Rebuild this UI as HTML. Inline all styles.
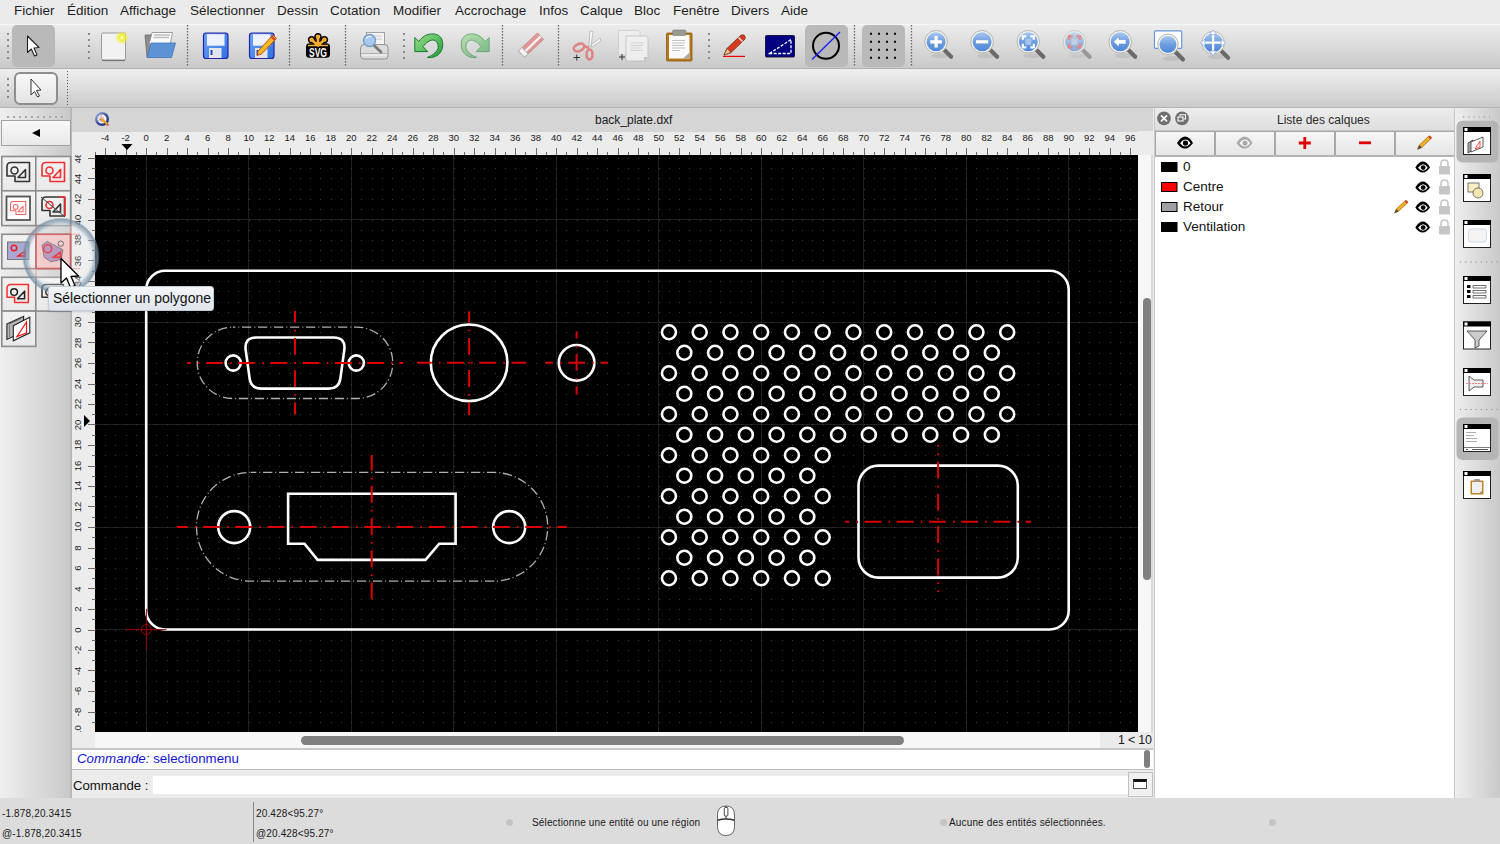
<!DOCTYPE html><html><head><meta charset="utf-8"><style>
*{margin:0;padding:0;box-sizing:border-box}
html,body{width:1500px;height:844px;overflow:hidden;background:#ececec;font-family:"Liberation Sans",sans-serif;color:#1a1a1a}
.a{position:absolute}
.menu span{position:absolute;top:3px;font-size:13.5px;color:#1e1e1e;white-space:nowrap}
.rn{position:absolute;font-size:9.5px;color:#222;white-space:nowrap;transform:translateX(-50%)}
.rv{position:absolute;font-size:9.5px;color:#222;white-space:nowrap;transform:translate(-50%,-50%) rotate(-90deg)}
.sep{position:absolute;width:2px;border-left:2px dotted #8a8a8a}
.tb{position:absolute;border-radius:5px;background:#b9b9b9}
.lb{position:absolute;background:linear-gradient(#f6f6f6,#e6e6e6);border:2px solid #8c8c8c}
.st{position:absolute;font-size:10px;letter-spacing:0.15px;color:#1a1a1a;white-space:nowrap}
</style></head><body>
<div class="a" style="left:0;top:0;width:1500px;height:24px;background:#ebebeb"></div><div class="menu"><span style="left:14px">Fichier</span><span style="left:67px">Édition</span><span style="left:120px">Affichage</span><span style="left:190px">Sélectionner</span><span style="left:277px">Dessin</span><span style="left:330px">Cotation</span><span style="left:393px">Modifier</span><span style="left:455px">Accrochage</span><span style="left:539px">Infos</span><span style="left:580px">Calque</span><span style="left:634px">Bloc</span><span style="left:673px">Fenêtre</span><span style="left:731px">Divers</span><span style="left:781px">Aide</span></div><div class="a" style="left:0;top:24px;width:1500px;height:45px;background:linear-gradient(#ececec,#c9c9c9);border-top:1px solid #f6f6f6;border-bottom:1px solid #b2b2b2"></div><div class="a" style="left:0;top:69px;width:1500px;height:39px;background:linear-gradient(#efefef,#cacaca);border-bottom:1px solid #b2b2b2"></div><div class="tb" style="left:12px;top:25px;width:43px;height:42px"></div><div class="a" style="left:14px;top:72px;width:44px;height:33px;border:2px solid #8e8e8e;border-radius:6px;background:linear-gradient(#f8f8f8,#e4e4e4)"></div><div class="tb" style="left:805px;top:25px;width:43px;height:42px"></div><div class="tb" style="left:862px;top:25px;width:43px;height:42px"></div><svg class="a" style="left:0;top:0" width="1000" height="108"><path d="M187.5 25V66M289.5 25V66M345.5 25V66M502.5 25V66M558.5 25V66M854.5 25V66M911.5 25V66" stroke="#666" stroke-width="1.3" stroke-dasharray="1.4 1.6"/><path d="M67.5 71V106" stroke="#555" stroke-width="1" stroke-dasharray="1 2"/><path d="M8 33V60M89 33V60M404 33V60M709 33V60M8 78V100" stroke="#8a8a8a" stroke-width="2" stroke-dasharray="2 4"/></svg><svg class="a" style="left:0;top:0" width="1500" height="108"><defs><linearGradient id="gblue" x1="0" y1="0" x2="0" y2="1"><stop offset="0" stop-color="#a8c8f0"/><stop offset="0.5" stop-color="#6f9ee0"/><stop offset="1" stop-color="#4f86d8"/></linearGradient><radialGradient id="gglow"><stop offset="0" stop-color="#fff"/><stop offset="0.35" stop-color="#f3ee30"/><stop offset="1" stop-color="#f3ee30" stop-opacity="0"/></radialGradient><linearGradient id="gflop" x1="0" y1="0" x2="1" y2="1"><stop offset="0" stop-color="#6ea6f8"/><stop offset="1" stop-color="#2f6fe0"/></linearGradient><linearGradient id="ggreen" x1="0" y1="0" x2="1" y2="1"><stop offset="0" stop-color="#9ee08a"/><stop offset="1" stop-color="#1f9a3a"/></linearGradient><linearGradient id="ggreen2" x1="1" y1="0" x2="0" y2="1"><stop offset="0" stop-color="#9ee08a"/><stop offset="1" stop-color="#1f9a3a"/></linearGradient></defs><path d="M27.5 36V52.5L31.3 49L34.5 56L37 55L34 48L39 47.5Z" fill="#fff" stroke="#222" stroke-width="1.1" stroke-linejoin="round"/><path d="M31 79V95L34.5 91.5L37.5 97L39.5 96L36.5 90.5L41 90Z" fill="#fff" stroke="#333" stroke-width="1" stroke-linejoin="round"/><rect x="101.5" y="33" width="24" height="27" rx="1.5" fill="#f2f2f2" stroke="#9a9a9a" stroke-width="1"/><path d="M102 60.5H125" stroke="#777" stroke-width="1.2"/><circle cx="122" cy="37.7" r="7" fill="url(#gglow)"/><path d="M145 35H152L151 57H147Z" fill="#8c8c8c" stroke="#6a6a6a" stroke-width="0.8"/><path d="M152 32.5H172.5L170 45H149Z" fill="#fafafa" stroke="#8a8a8a" stroke-width="0.8"/><path d="M154 35H170M153.5 37.5H169" stroke="#bdbdbd" stroke-width="1.5"/><path d="M151 43H175.5L171.5 57.5H147Z" fill="#5b93d6" stroke="#4273b8" stroke-width="0.8"/><rect x="203.5" y="33" width="24.5" height="25.5" rx="2.5" fill="url(#gflop)" stroke="#2323a8" stroke-width="1.2"/><rect x="207.0" y="34.2" width="17.5" height="11.5" fill="#eef2ff"/><rect x="209.0" y="48" width="12.5" height="10" fill="#e4e4ec"/><rect x="210.5" y="50" width="2" height="5" fill="#1a4fd0"/><rect x="249.5" y="33" width="24.5" height="25.5" rx="2.5" fill="url(#gflop)" stroke="#2323a8" stroke-width="1.2"/><rect x="253.0" y="34.2" width="17.5" height="11.5" fill="#eef2ff"/><rect x="255.0" y="48" width="12.5" height="10" fill="#e4e4ec"/><rect x="256.5" y="50" width="2" height="5" fill="#1a4fd0"/><path d="M258 51L273 35L276.5 38.5L261.5 54L257 55.5Z" fill="#f5b820" stroke="#b04010" stroke-width="0.9"/><path d="M271.5 36.5L275 40" stroke="#e04030" stroke-width="2.2"/><g fill="#000" stroke="#000"><rect x="306" y="43.2" width="24" height="14.6" rx="3.5" stroke="none"/><path d="M318 45V36.7M318 45L311.6 39.7M318 45L324.4 39.7" stroke-width="4.5" stroke-linecap="round"/><circle cx="318" cy="36.7" r="3.3"/><circle cx="311.6" cy="39.7" r="3.3"/><circle cx="324.4" cy="39.7" r="3.3"/></g><g stroke="#f5ac30" fill="#f5ac30"><path d="M318 45.5V36.7M318 45.5L311.6 39.7M318 45.5L324.4 39.7" stroke-width="2.6" stroke-linecap="round"/><circle cx="318" cy="36.7" r="2.3" stroke="none"/><circle cx="311.6" cy="39.7" r="2.3" stroke="none"/><circle cx="324.4" cy="39.7" r="2.3" stroke="none"/><path d="M308 45.5H328" stroke-width="1.5"/><path d="M314 45.5Q318 40 322 45.5Z" stroke="none"/></g><text x="318" y="57" font-family="Liberation Sans" font-weight="bold" font-size="12" fill="#fff" text-anchor="middle" textLength="18" lengthAdjust="spacingAndGlyphs">SVG</text><rect x="366.5" y="32.5" width="18" height="15" fill="#f4f4f4" stroke="#9a9a9a" stroke-width="0.9"/><path d="M369 36H382M369 39H382" stroke="#c8c8c8" stroke-width="1"/><path d="M360.5 48Q361 44.5 364 44.5H385Q388 44.5 388 48V56Q388 59 385 59H364Q360.5 59 360.5 56Z" fill="#dcdcdc" stroke="#8a8a8a" stroke-width="0.9"/><path d="M361 53.5H387.5" stroke="#b0b0b0" stroke-width="1"/><path d="M362 55H387" stroke="#f4f4f4" stroke-width="1.2"/><path d="M373.5 45L381 52" stroke="#7a7a7a" stroke-width="2.8" stroke-linecap="round"/><circle cx="369.5" cy="40.5" r="6" fill="#a8c8ee" stroke="#7a9cc8" stroke-width="1.4"/><path d="M366 38.5Q368 36 371.5 36.5" stroke="#fff" stroke-width="1.2" fill="none" opacity="0.8"/><path d="M414.8 37.5L414.8 51.6L427.7 51.6L422.9 46.5C426 43 429.5 40.2 432.6 40.1C436 40 438.3 43 438.2 47.4C438 51 433 55.5 427.3 57.4C433 58.5 438.5 55.5 440.6 52.2C443.5 48 443.5 41 440.6 37.3C438 34 433 33.2 428.1 34.5C424 35.5 421 38.5 418.7 41.5Z" fill="url(#ggreen)" stroke="#137a2e" stroke-width="1" stroke-linejoin="round"/><g opacity="0.55" transform="translate(904 0) scale(-1 1)"><path d="M414.8 37.5L414.8 51.6L427.7 51.6L422.9 46.5C426 43 429.5 40.2 432.6 40.1C436 40 438.3 43 438.2 47.4C438 51 433 55.5 427.3 57.4C433 58.5 438.5 55.5 440.6 52.2C443.5 48 443.5 41 440.6 37.3C438 34 433 33.2 428.1 34.5C424 35.5 421 38.5 418.7 41.5Z" fill="url(#ggreen2)" stroke="#137a2e" stroke-width="1" stroke-linejoin="round"/></g><g opacity="0.7"><ellipse cx="532" cy="57" rx="12" ry="1.6" fill="#d0d0d0"/><path d="M518.5 51L537.5 33L543.5 39.5L524.5 57Z" fill="#e47878" stroke="#b85a5a" stroke-width="0.8"/><path d="M522 54.5L540.5 36.5" stroke="#fff" stroke-width="2.4"/><path d="M518.5 51L522 47.5L528 54L524.5 57Z" fill="#fff" stroke="#999" stroke-width="0.8"/></g><g opacity="0.75"><path d="M590 31L593 31.5L591 47L589 46Z" fill="#fff" stroke="#999" stroke-width="0.7"/><path d="M591 45L600 38L601 41L592 47Z" fill="#fff" stroke="#999" stroke-width="0.7"/><ellipse cx="579" cy="47.5" rx="5.5" ry="3.5" transform="rotate(-25 579 47.5)" fill="none" stroke="#e06868" stroke-width="2.6"/><ellipse cx="589.5" cy="54.5" rx="3" ry="5" fill="none" stroke="#e06868" stroke-width="2.6"/><path d="M584 46L589 48" stroke="#e06868" stroke-width="2.5"/></g><path d="M573.5 57.5H580M576.75 54.5V60.5" stroke="#333" stroke-width="1"/><g opacity="0.8"><path d="M618.5 30.5H638.5L640 32V55H618.5Z" fill="#f0f0f0" stroke="#c8c8c8" stroke-width="0.8"/><path d="M626 36H646L648 38V58.5L645 61H626Z" fill="#f4f4f4" stroke="#bdbdbd" stroke-width="0.9"/><path d="M630.5 43H644M630.5 45.5H643M630.5 48H642M630.5 50.5H643" stroke="#d0d0d0" stroke-width="1"/><path d="M644 61L648 57H644Z" fill="#bbb"/></g><path d="M619 57H625M622 54V60" stroke="#333" stroke-width="1"/><rect x="666.5" y="33" width="25.5" height="28" rx="1" fill="#b4781c" stroke="#8a5a10" stroke-width="0.8"/><rect x="669" y="35" width="20.5" height="23.5" fill="#fafafa"/><path d="M672 40.5H685M672 43H685M672 45.5H684M672 48H685M672 50.5H680" stroke="#c4c4c4" stroke-width="1"/><path d="M683 58.5L689.5 52.5V58.5Z" fill="#aaa"/><rect x="672.5" y="30" width="13.5" height="5.5" rx="1.5" fill="#9a9a92" stroke="#777" stroke-width="0.6"/><path d="M724 55L727 48.5L740.5 35.5Q743 34 744.5 35.5Q746 37.5 744.5 39.5L731 52.5Z" fill="#d83a20" stroke="#7a3010" stroke-width="0.9"/><path d="M724 55L727 48.5L731 52.5Z" fill="#e8c8a0" stroke="#7a3010" stroke-width="0.7"/><path d="M738.5 37.5L742.5 41.5" stroke="#ddd" stroke-width="1.6"/><path d="M723 56.4H745" stroke="#e00" stroke-width="1.2"/><rect x="765.5" y="35.5" width="29" height="21.5" rx="1" fill="#000080" stroke="#1a1a40" stroke-width="1"/><path d="M769.5 53.5L791 39.5V53.5Z" fill="none" stroke="#fff" stroke-width="1.3" stroke-dasharray="3 1.5"/><circle cx="826" cy="45.8" r="13" fill="none" stroke="#000" stroke-width="2"/><path d="M812 59.5L840 32" stroke="#1a1aff" stroke-width="1.3"/><path d="M870 32.8h2v2h-2zM870 40.8h2v2h-2zM870 48.8h2v2h-2zM870 56.8h2v2h-2zM878 32.8h2v2h-2zM878 40.8h2v2h-2zM878 48.8h2v2h-2zM878 56.8h2v2h-2zM886 32.8h2v2h-2zM886 40.8h2v2h-2zM886 48.8h2v2h-2zM886 56.8h2v2h-2zM894 32.8h2v2h-2zM894 40.8h2v2h-2zM894 48.8h2v2h-2zM894 56.8h2v2h-2z" fill="#000"/><g><ellipse cx="940.1" cy="55.8" rx="9" ry="2.5" fill="#000" opacity="0.08"/><path d="M943.6 49.3L951.1 56.8" stroke="#6a6a6a" stroke-width="4.2" stroke-linecap="round"/><circle cx="936.1" cy="41.8" r="11.3" fill="#f4f4f0" stroke="#b5b5ad" stroke-width="1"/><circle cx="936.1" cy="41.8" r="9.5" fill="url(#gblue)"/><path d="M936.1 36V47.6M930.3 41.8H941.9" stroke="#fff" stroke-width="3.2"/></g><g><ellipse cx="986.1" cy="55.8" rx="9" ry="2.5" fill="#000" opacity="0.08"/><path d="M989.6 49.3L997.1 56.8" stroke="#6a6a6a" stroke-width="4.2" stroke-linecap="round"/><circle cx="982.1" cy="41.8" r="11.3" fill="#f4f4f0" stroke="#b5b5ad" stroke-width="1"/><circle cx="982.1" cy="41.8" r="9.5" fill="url(#gblue)"/><path d="M976 41.8H988.2" stroke="#fff" stroke-width="3.2"/></g><g><ellipse cx="1032.3" cy="55.8" rx="9" ry="2.5" fill="#000" opacity="0.08"/><path d="M1035.8 49.3L1043.3 56.8" stroke="#6a6a6a" stroke-width="4.2" stroke-linecap="round"/><circle cx="1028.3" cy="41.8" r="11.3" fill="#f4f4f0" stroke="#b5b5ad" stroke-width="1"/><circle cx="1028.3" cy="41.8" r="9.5" fill="url(#gblue)"/><path d="M1022.8 39.8V36.3H1026.3M1030.3 36.3H1033.8V39.8M1033.8 43.8V47.3H1030.3M1026.3 47.3H1022.8V43.8" fill="none" stroke="#fff" stroke-width="2.2"/><rect x="1025.3" y="38.8" width="6" height="6" fill="#a8c4ea"/></g><g opacity="0.55"><ellipse cx="1078.5" cy="55.8" rx="9" ry="2.5" fill="#000" opacity="0.08"/><path d="M1082.0 49.3L1089.5 56.8" stroke="#6a6a6a" stroke-width="4.2" stroke-linecap="round"/><circle cx="1074.5" cy="41.8" r="11.3" fill="#f4f4f0" stroke="#b5b5ad" stroke-width="1"/><circle cx="1074.5" cy="41.8" r="9.5" fill="url(#gblue)"/><path d="M1069.0 39.8V36.3H1072.5M1076.5 36.3H1080.0V39.8M1080.0 43.8V47.3H1076.5M1072.5 47.3H1069.0V43.8" fill="none" stroke="#e84040" stroke-width="2.2"/><rect x="1071.5" y="38.8" width="6" height="6" fill="#a8c4ea"/></g><g><ellipse cx="1124.2" cy="55.8" rx="9" ry="2.5" fill="#000" opacity="0.08"/><path d="M1127.7 49.3L1135.2 56.8" stroke="#6a6a6a" stroke-width="4.2" stroke-linecap="round"/><circle cx="1120.2" cy="41.8" r="11.3" fill="#f4f4f0" stroke="#b5b5ad" stroke-width="1"/><circle cx="1120.2" cy="41.8" r="9.5" fill="url(#gblue)"/><path d="M1113.5 41.8L1119 36.5V39.5H1126V44H1119V47Z" fill="#fff" stroke="#5a86c8" stroke-width="0.5"/></g><rect x="1154.5" y="30.8" width="27.2" height="17.5" rx="1" fill="#fff" stroke="#6a96d8" stroke-width="1.2"/><g><ellipse cx="1172" cy="58.4" rx="9" ry="2.5" fill="#000" opacity="0.08"/><path d="M1175.5 51.9L1183 59.4" stroke="#6a6a6a" stroke-width="4.2" stroke-linecap="round"/><circle cx="1168" cy="44.4" r="10.3" fill="#f4f4f0" stroke="#b5b5ad" stroke-width="1"/><circle cx="1168" cy="44.4" r="8.5" fill="url(#gblue)"/></g><g><ellipse cx="1217.1" cy="56.7" rx="9" ry="2.5" fill="#000" opacity="0.08"/><path d="M1220.6 50.2L1228.1 57.7" stroke="#6a6a6a" stroke-width="4.2" stroke-linecap="round"/><circle cx="1213.1" cy="42.7" r="11.3" fill="#f4f4f0" stroke="#b5b5ad" stroke-width="1"/><circle cx="1213.1" cy="42.7" r="9.5" fill="url(#gblue)"/><path d="M1213.1 31V54.4M1201.5 42.7H1224.7" stroke="#fff" stroke-width="2.2"/><path d="M1213.1 30L1209.6 34.5H1216.6ZM1213.1 55.4L1209.6 50.9H1216.6ZM1200.5 42.7L1205 39.2V46.2ZM1225.7 42.7L1221.2 39.2V46.2Z" fill="#fff" stroke="#6a96d8" stroke-width="0.6"/></g></svg><div class="a" style="left:0;top:108px;width:72px;height:690px;background:linear-gradient(90deg,#efefef,#c9c9c9);border-right:2px solid #b8b8b8"></div><svg class="a" style="left:0;top:110px" width="72" height="12"><path d="M7 7H66" stroke="#a8a8a8" stroke-width="2" stroke-dasharray="2 4"/></svg><div class="a" style="left:1px;top:120px;width:70px;height:26px;background:linear-gradient(#f8f8f8,#e9e9e9);border:1.5px solid #a2a2a2"></div><div class="a" style="left:32px;top:129px;width:0;height:0;border-top:4px solid transparent;border-bottom:4px solid transparent;border-right:8.5px solid #000"></div><svg class="a" style="left:0;top:0" width="80" height="350"><defs><linearGradient id="gbtn" x1="0" y1="0" x2="0" y2="1"><stop offset="0" stop-color="#f2f2f2"/><stop offset="1" stop-color="#e9e9e9"/></linearGradient></defs><rect x="1.8" y="156.5" width="34" height="34.3" fill="url(#gbtn)" stroke="#8c8c8c" stroke-width="1.6"/><rect x="35.8" y="156.5" width="34.8" height="34.3" fill="url(#gbtn)" stroke="#8c8c8c" stroke-width="1.6"/><rect x="1.8" y="190.8" width="34" height="34.8" fill="url(#gbtn)" stroke="#8c8c8c" stroke-width="1.6"/><rect x="35.8" y="190.8" width="34.8" height="34.8" fill="url(#gbtn)" stroke="#8c8c8c" stroke-width="1.6"/><rect x="1.8" y="234.3" width="34" height="34.3" fill="url(#gbtn)" stroke="#8c8c8c" stroke-width="1.6"/><rect x="35.8" y="234.3" width="34.8" height="34.3" fill="#f0c2c2" stroke="#8c8c8c" stroke-width="1.6"/><rect x="1.8" y="277.3" width="34" height="33.8" fill="url(#gbtn)" stroke="#8c8c8c" stroke-width="1.6"/><rect x="35.8" y="277.3" width="34.8" height="33.8" fill="url(#gbtn)" stroke="#8c8c8c" stroke-width="1.6"/><rect x="1.8" y="311.1" width="34" height="35.3" fill="url(#gbtn)" stroke="#8c8c8c" stroke-width="1.6"/><g transform="translate(7 162.5) scale(1.0)" fill="none" stroke-width="1.6"><path d="M0 13.5V4Q0 0 4 0H22.5V19H8V13.5Z" stroke="#333" stroke-linejoin="round"/><circle cx="7.5" cy="8" r="3.5" stroke="#333"/><path d="M11 15L18.5 7V15Z" stroke="#333" stroke-linejoin="round"/></g><g transform="translate(42 162.5) scale(1.0)" fill="none" stroke-width="1.6"><path d="M0 13.5V4Q0 0 4 0H22.5V19H8V13.5Z" stroke="#f03030" stroke-linejoin="round"/><circle cx="7.5" cy="8" r="3.5" stroke="#f03030"/><path d="M11 15L18.5 7V15Z" stroke="#f03030" stroke-linejoin="round"/></g><rect x="6.5" y="196.5" width="23.5" height="23.5" fill="#fff" stroke="#555" stroke-width="1.8"/><g transform="translate(10.5 201.5) scale(0.68)" fill="none" stroke-width="1.5"><path d="M0 13.5V4Q0 0 4 0H22.5V19H8V13.5Z" stroke="#f06060" stroke-linejoin="round"/><circle cx="7.5" cy="8" r="3.5" stroke="#f06060"/><path d="M11 15L18.5 7V15Z" stroke="#f06060" stroke-linejoin="round"/></g><g transform="translate(42 197) scale(1.0)" fill="none" stroke-width="1.6"><path d="M0 13.5V4Q0 0 4 0H22.5V19H8V13.5Z" stroke="#333" stroke-linejoin="round"/><circle cx="7.5" cy="8" r="3.5" stroke="#f03030"/><path d="M11 15L18.5 7V15Z" stroke="#333" stroke-linejoin="round"/></g><path d="M59 197H64.5Q65 197 65 198V216" stroke="#f03030" stroke-width="1.6" fill="none"/><path d="M41 197L65 217" stroke="#444" stroke-width="1"/><rect x="7.5" y="242" width="21.5" height="17.5" fill="#a9a9d3" stroke="#777" stroke-width="1"/><circle cx="14" cy="248" r="2.8" fill="none" stroke="#f02020" stroke-width="1.4"/><path d="M18 256L25 251V256Z" fill="none" stroke="#f02020" stroke-width="1.4"/><path d="M42 245.2L47.2 241.4L62.8 249.7L61.3 259.3L50.8 261.8L44.2 257.3Z" fill="#a88cb8" stroke="#6a5060" stroke-width="0.8"/><circle cx="47.7" cy="248.7" r="4" fill="none" stroke="#f02020" stroke-width="1.5"/><circle cx="60.8" cy="243.7" r="2.7" fill="none" stroke="#555" stroke-width="1"/><path d="M53.3 257.3L60.5 252V257.3Z" fill="none" stroke="#f02020" stroke-width="1.5"/><g transform="translate(7 284.5) scale(0.95)" fill="none" stroke-width="1.6"><path d="M0 13.5V4Q0 0 4 0H22.5V19H8V13.5Z" stroke="#f03030" stroke-linejoin="round"/><circle cx="7.5" cy="8" r="3.5" stroke="#222"/><path d="M11 15L18.5 7V15Z" stroke="#222" stroke-linejoin="round"/></g><g transform="translate(42 284.5) scale(0.95)" fill="none" stroke-width="1.6"><path d="M0 13.5V4Q0 0 4 0H22.5V19H8V13.5Z" stroke="#333" stroke-linejoin="round"/><circle cx="7.5" cy="8" r="3.5" stroke="#333"/><path d="M11 15L18.5 7V15Z" stroke="#333" stroke-linejoin="round"/></g><path d="M48 288H62" stroke="#f03030" stroke-width="1.6"/><path d="M6.9 323.9L23.6 316.3V331.5L6.9 339.4Z" fill="#b8b8b8" stroke="#222" stroke-width="1.1"/><path d="M9 324L21.5 318.3" stroke="#555" stroke-width="0.8"/><path d="M9.5 325V337" stroke="#666" stroke-width="0.8"/><path d="M13.3 325.7L29.8 317.2V332.8L13.3 340.8Z" fill="#fff" stroke="#222" stroke-width="1.1"/><path d="M17 336.5L26.5 322V333Z" fill="none" stroke="#f01010" stroke-width="1.2"/></svg><div class="a" style="left:72px;top:108px;width:1081px;height:24px;background:#d5d5d5"></div><div class="a" style="left:595px;top:113px;font-size:12px;color:#1a1a1a">back_plate.dxf</div><svg class="a" style="left:94px;top:111px" width="18" height="18"><defs><linearGradient id="gdoc" x1="0" y1="0" x2="1" y2="1"><stop offset="0" stop-color="#a8b8e0"/><stop offset="0.5" stop-color="#3a5098"/><stop offset="1" stop-color="#1c2c78"/></linearGradient></defs><circle cx="8" cy="8" r="5.8" fill="#f4f4f4" stroke="url(#gdoc)" stroke-width="2.4"/><path d="M4.5 9.5L10 6.5M7 4V11" stroke="#b44" stroke-width="0.6"/><path d="M4 6.5L9 11" stroke="#888" stroke-width="0.6"/><path d="M8.5 8.5L13.5 13.5" stroke="#f0a020" stroke-width="2.2" stroke-linecap="round"/><path d="M13 13L14.5 14.5" stroke="#e06050" stroke-width="2"/></svg><div class="a" style="left:72px;top:132px;width:1081px;height:23px;background:#ececec"></div><div class="a" style="left:72px;top:155px;width:23px;height:593px;background:#ececec"></div><svg class="a" style="left:0;top:0" width="1500" height="160"><path d="M95.5 152V155M105.5 148V155M115.5 152V155M126.5 148V155M136.5 152V155M146.5 148V155M156.5 152V155M167.5 148V155M177.5 152V155M187.5 148V155M197.5 152V155M208.5 148V155M218.5 152V155M228.5 148V155M238.5 152V155M249.5 148V155M259.5 152V155M269.5 148V155M279.5 152V155M290.5 148V155M300.5 152V155M310.5 148V155M320.5 152V155M331.5 148V155M341.5 152V155M351.5 148V155M361.5 152V155M372.5 148V155M382.5 152V155M392.5 148V155M402.5 152V155M413.5 148V155M423.5 152V155M433.5 148V155M443.5 152V155M454.5 148V155M464.5 152V155M474.5 148V155M484.5 152V155M495.5 148V155M505.5 152V155M515.5 148V155M525.5 152V155M536.5 148V155M546.5 152V155M556.5 148V155M566.5 152V155M577.5 148V155M587.5 152V155M597.5 148V155M607.5 152V155M618.5 148V155M628.5 152V155M638.5 148V155M648.5 152V155M659.5 148V155M669.5 152V155M679.5 148V155M689.5 152V155M700.5 148V155M710.5 152V155M720.5 148V155M730.5 152V155M741.5 148V155M751.5 152V155M761.5 148V155M771.5 152V155M782.5 148V155M792.5 152V155M802.5 148V155M812.5 152V155M823.5 148V155M833.5 152V155M843.5 148V155M853.5 152V155M864.5 148V155M874.5 152V155M884.5 148V155M894.5 152V155M905.5 148V155M915.5 152V155M925.5 148V155M935.5 152V155M946.5 148V155M956.5 152V155M966.5 148V155M976.5 152V155M987.5 148V155M997.5 152V155M1007.5 148V155M1017.5 152V155M1028.5 148V155M1038.5 152V155M1048.5 148V155M1058.5 152V155M1069.5 148V155M1079.5 152V155M1089.5 148V155M1099.5 152V155M1110.5 148V155M1120.5 152V155M1130.5 148V155" stroke="#6c6c6c" stroke-width="1"/><path d="M121.5 144H132.5L127 150Z" fill="#000"/></svg><span class="rn" style="left:105.2px;top:131.6px">-4</span><span class="rn" style="left:125.7px;top:131.6px">-2</span><span class="rn" style="left:146.2px;top:131.6px">0</span><span class="rn" style="left:166.7px;top:131.6px">2</span><span class="rn" style="left:187.2px;top:131.6px">4</span><span class="rn" style="left:207.7px;top:131.6px">6</span><span class="rn" style="left:228.2px;top:131.6px">8</span><span class="rn" style="left:248.7px;top:131.6px">10</span><span class="rn" style="left:269.2px;top:131.6px">12</span><span class="rn" style="left:289.7px;top:131.6px">14</span><span class="rn" style="left:310.2px;top:131.6px">16</span><span class="rn" style="left:330.7px;top:131.6px">18</span><span class="rn" style="left:351.2px;top:131.6px">20</span><span class="rn" style="left:371.7px;top:131.6px">22</span><span class="rn" style="left:392.2px;top:131.6px">24</span><span class="rn" style="left:412.7px;top:131.6px">26</span><span class="rn" style="left:433.2px;top:131.6px">28</span><span class="rn" style="left:453.7px;top:131.6px">30</span><span class="rn" style="left:474.2px;top:131.6px">32</span><span class="rn" style="left:494.7px;top:131.6px">34</span><span class="rn" style="left:515.2px;top:131.6px">36</span><span class="rn" style="left:535.7px;top:131.6px">38</span><span class="rn" style="left:556.2px;top:131.6px">40</span><span class="rn" style="left:576.7px;top:131.6px">42</span><span class="rn" style="left:597.2px;top:131.6px">44</span><span class="rn" style="left:617.7px;top:131.6px">46</span><span class="rn" style="left:638.2px;top:131.6px">48</span><span class="rn" style="left:658.7px;top:131.6px">50</span><span class="rn" style="left:679.2px;top:131.6px">52</span><span class="rn" style="left:699.7px;top:131.6px">54</span><span class="rn" style="left:720.2px;top:131.6px">56</span><span class="rn" style="left:740.7px;top:131.6px">58</span><span class="rn" style="left:761.2px;top:131.6px">60</span><span class="rn" style="left:781.7px;top:131.6px">62</span><span class="rn" style="left:802.2px;top:131.6px">64</span><span class="rn" style="left:822.7px;top:131.6px">66</span><span class="rn" style="left:843.2px;top:131.6px">68</span><span class="rn" style="left:863.7px;top:131.6px">70</span><span class="rn" style="left:884.2px;top:131.6px">72</span><span class="rn" style="left:904.7px;top:131.6px">74</span><span class="rn" style="left:925.2px;top:131.6px">76</span><span class="rn" style="left:945.7px;top:131.6px">78</span><span class="rn" style="left:966.2px;top:131.6px">80</span><span class="rn" style="left:986.7px;top:131.6px">82</span><span class="rn" style="left:1007.2px;top:131.6px">84</span><span class="rn" style="left:1027.7px;top:131.6px">86</span><span class="rn" style="left:1048.2px;top:131.6px">88</span><span class="rn" style="left:1068.7px;top:131.6px">90</span><span class="rn" style="left:1089.2px;top:131.6px">92</span><span class="rn" style="left:1109.7px;top:131.6px">94</span><span class="rn" style="left:1130.2px;top:131.6px">96</span><svg class="a" style="left:0;top:0" width="100" height="760"><path d="M92 722.5H95M88 712.5H95M92 701.5H95M88 691.5H95M92 681.5H95M88 670.5H95M92 660.5H95M88 650.5H95M92 640.5H95M88 630.5H95M92 619.5H95M88 609.5H95M92 599.5H95M88 588.5H95M92 578.5H95M88 568.5H95M92 558.5H95M88 548.5H95M92 537.5H95M88 527.5H95M92 517.5H95M88 506.5H95M92 496.5H95M88 486.5H95M92 476.5H95M88 466.5H95M92 455.5H95M88 445.5H95M92 435.5H95M88 424.5H95M92 414.5H95M88 404.5H95M92 394.5H95M88 384.5H95M92 373.5H95M88 363.5H95M92 353.5H95M88 342.5H95M92 332.5H95M88 322.5H95M92 312.5H95M88 302.5H95M92 291.5H95M88 281.5H95M92 271.5H95M88 260.5H95M92 250.5H95M88 240.5H95M92 230.5H95M88 220.5H95M92 209.5H95M88 199.5H95M92 189.5H95M88 178.5H95M92 168.5H95M88 158.5H95" stroke="#6c6c6c" stroke-width="1"/><path d="M84 415V427L90 421Z" fill="#000"/></svg><div class="a" style="left:72px;top:155px;width:23px;height:577px;overflow:hidden"><span class="rv" style="left:4.8px;top:577.0px">-10</span><span class="rv" style="left:4.8px;top:556.5px">-8</span><span class="rv" style="left:4.8px;top:536.0px">-6</span><span class="rv" style="left:4.8px;top:515.5px">-4</span><span class="rv" style="left:4.8px;top:495.0px">-2</span><span class="rv" style="left:4.8px;top:474.5px">0</span><span class="rv" style="left:4.8px;top:454.0px">2</span><span class="rv" style="left:4.8px;top:433.5px">4</span><span class="rv" style="left:4.8px;top:413.0px">6</span><span class="rv" style="left:4.8px;top:392.5px">8</span><span class="rv" style="left:4.8px;top:372.0px">10</span><span class="rv" style="left:4.8px;top:351.5px">12</span><span class="rv" style="left:4.8px;top:331.0px">14</span><span class="rv" style="left:4.8px;top:310.5px">16</span><span class="rv" style="left:4.8px;top:290.0px">18</span><span class="rv" style="left:4.8px;top:269.5px">20</span><span class="rv" style="left:4.8px;top:249.0px">22</span><span class="rv" style="left:4.8px;top:228.5px">24</span><span class="rv" style="left:4.8px;top:208.0px">26</span><span class="rv" style="left:4.8px;top:187.5px">28</span><span class="rv" style="left:4.8px;top:167.0px">30</span><span class="rv" style="left:4.8px;top:146.5px">32</span><span class="rv" style="left:4.8px;top:126.0px">34</span><span class="rv" style="left:4.8px;top:105.5px">36</span><span class="rv" style="left:4.8px;top:85.0px">38</span><span class="rv" style="left:4.8px;top:64.5px">40</span><span class="rv" style="left:4.8px;top:44.0px">42</span><span class="rv" style="left:4.8px;top:23.5px">44</span><span class="rv" style="left:4.8px;top:3.0px">46</span></div><svg style="position:absolute;left:95px;top:155px" width="1043" height="577" viewBox="95 155 1043 577"><rect x="95" y="155" width="1043" height="577" fill="#000"/><path d="M146.5 155V732M248.5 155V732M351.5 155V732M453.5 155V732M556.5 155V732M658.5 155V732M761.5 155V732M863.5 155V732M966.5 155V732M1068.5 155V732M95 732.5H1138M95 629.5H1138M95 527.5H1138M95 424.5H1138M95 322.5H1138M95 219.5H1138" stroke="#1f1f1f" stroke-width="1" fill="none"/><path d="M95 722h1v1h-1zM105 722h1v1h-1zM115 722h1v1h-1zM126 722h1v1h-1zM136 722h1v1h-1zM146 722h1v1h-1zM156 722h1v1h-1zM167 722h1v1h-1zM177 722h1v1h-1zM187 722h1v1h-1zM197 722h1v1h-1zM208 722h1v1h-1zM218 722h1v1h-1zM228 722h1v1h-1zM238 722h1v1h-1zM249 722h1v1h-1zM259 722h1v1h-1zM269 722h1v1h-1zM279 722h1v1h-1zM290 722h1v1h-1zM300 722h1v1h-1zM310 722h1v1h-1zM320 722h1v1h-1zM331 722h1v1h-1zM341 722h1v1h-1zM351 722h1v1h-1zM361 722h1v1h-1zM372 722h1v1h-1zM382 722h1v1h-1zM392 722h1v1h-1zM402 722h1v1h-1zM413 722h1v1h-1zM423 722h1v1h-1zM433 722h1v1h-1zM443 722h1v1h-1zM454 722h1v1h-1zM464 722h1v1h-1zM474 722h1v1h-1zM484 722h1v1h-1zM495 722h1v1h-1zM505 722h1v1h-1zM515 722h1v1h-1zM525 722h1v1h-1zM536 722h1v1h-1zM546 722h1v1h-1zM556 722h1v1h-1zM566 722h1v1h-1zM577 722h1v1h-1zM587 722h1v1h-1zM597 722h1v1h-1zM607 722h1v1h-1zM618 722h1v1h-1zM628 722h1v1h-1zM638 722h1v1h-1zM648 722h1v1h-1zM659 722h1v1h-1zM669 722h1v1h-1zM679 722h1v1h-1zM689 722h1v1h-1zM700 722h1v1h-1zM710 722h1v1h-1zM720 722h1v1h-1zM730 722h1v1h-1zM741 722h1v1h-1zM751 722h1v1h-1zM761 722h1v1h-1zM771 722h1v1h-1zM782 722h1v1h-1zM792 722h1v1h-1zM802 722h1v1h-1zM812 722h1v1h-1zM823 722h1v1h-1zM833 722h1v1h-1zM843 722h1v1h-1zM853 722h1v1h-1zM864 722h1v1h-1zM874 722h1v1h-1zM884 722h1v1h-1zM894 722h1v1h-1zM905 722h1v1h-1zM915 722h1v1h-1zM925 722h1v1h-1zM935 722h1v1h-1zM946 722h1v1h-1zM956 722h1v1h-1zM966 722h1v1h-1zM976 722h1v1h-1zM987 722h1v1h-1zM997 722h1v1h-1zM1007 722h1v1h-1zM1017 722h1v1h-1zM1028 722h1v1h-1zM1038 722h1v1h-1zM1048 722h1v1h-1zM1058 722h1v1h-1zM1069 722h1v1h-1zM1079 722h1v1h-1zM1089 722h1v1h-1zM1099 722h1v1h-1zM1110 722h1v1h-1zM1120 722h1v1h-1zM1130 722h1v1h-1zM95 712h1v1h-1zM105 712h1v1h-1zM115 712h1v1h-1zM126 712h1v1h-1zM136 712h1v1h-1zM146 712h1v1h-1zM156 712h1v1h-1zM167 712h1v1h-1zM177 712h1v1h-1zM187 712h1v1h-1zM197 712h1v1h-1zM208 712h1v1h-1zM218 712h1v1h-1zM228 712h1v1h-1zM238 712h1v1h-1zM249 712h1v1h-1zM259 712h1v1h-1zM269 712h1v1h-1zM279 712h1v1h-1zM290 712h1v1h-1zM300 712h1v1h-1zM310 712h1v1h-1zM320 712h1v1h-1zM331 712h1v1h-1zM341 712h1v1h-1zM351 712h1v1h-1zM361 712h1v1h-1zM372 712h1v1h-1zM382 712h1v1h-1zM392 712h1v1h-1zM402 712h1v1h-1zM413 712h1v1h-1zM423 712h1v1h-1zM433 712h1v1h-1zM443 712h1v1h-1zM454 712h1v1h-1zM464 712h1v1h-1zM474 712h1v1h-1zM484 712h1v1h-1zM495 712h1v1h-1zM505 712h1v1h-1zM515 712h1v1h-1zM525 712h1v1h-1zM536 712h1v1h-1zM546 712h1v1h-1zM556 712h1v1h-1zM566 712h1v1h-1zM577 712h1v1h-1zM587 712h1v1h-1zM597 712h1v1h-1zM607 712h1v1h-1zM618 712h1v1h-1zM628 712h1v1h-1zM638 712h1v1h-1zM648 712h1v1h-1zM659 712h1v1h-1zM669 712h1v1h-1zM679 712h1v1h-1zM689 712h1v1h-1zM700 712h1v1h-1zM710 712h1v1h-1zM720 712h1v1h-1zM730 712h1v1h-1zM741 712h1v1h-1zM751 712h1v1h-1zM761 712h1v1h-1zM771 712h1v1h-1zM782 712h1v1h-1zM792 712h1v1h-1zM802 712h1v1h-1zM812 712h1v1h-1zM823 712h1v1h-1zM833 712h1v1h-1zM843 712h1v1h-1zM853 712h1v1h-1zM864 712h1v1h-1zM874 712h1v1h-1zM884 712h1v1h-1zM894 712h1v1h-1zM905 712h1v1h-1zM915 712h1v1h-1zM925 712h1v1h-1zM935 712h1v1h-1zM946 712h1v1h-1zM956 712h1v1h-1zM966 712h1v1h-1zM976 712h1v1h-1zM987 712h1v1h-1zM997 712h1v1h-1zM1007 712h1v1h-1zM1017 712h1v1h-1zM1028 712h1v1h-1zM1038 712h1v1h-1zM1048 712h1v1h-1zM1058 712h1v1h-1zM1069 712h1v1h-1zM1079 712h1v1h-1zM1089 712h1v1h-1zM1099 712h1v1h-1zM1110 712h1v1h-1zM1120 712h1v1h-1zM1130 712h1v1h-1zM95 701h1v1h-1zM105 701h1v1h-1zM115 701h1v1h-1zM126 701h1v1h-1zM136 701h1v1h-1zM146 701h1v1h-1zM156 701h1v1h-1zM167 701h1v1h-1zM177 701h1v1h-1zM187 701h1v1h-1zM197 701h1v1h-1zM208 701h1v1h-1zM218 701h1v1h-1zM228 701h1v1h-1zM238 701h1v1h-1zM249 701h1v1h-1zM259 701h1v1h-1zM269 701h1v1h-1zM279 701h1v1h-1zM290 701h1v1h-1zM300 701h1v1h-1zM310 701h1v1h-1zM320 701h1v1h-1zM331 701h1v1h-1zM341 701h1v1h-1zM351 701h1v1h-1zM361 701h1v1h-1zM372 701h1v1h-1zM382 701h1v1h-1zM392 701h1v1h-1zM402 701h1v1h-1zM413 701h1v1h-1zM423 701h1v1h-1zM433 701h1v1h-1zM443 701h1v1h-1zM454 701h1v1h-1zM464 701h1v1h-1zM474 701h1v1h-1zM484 701h1v1h-1zM495 701h1v1h-1zM505 701h1v1h-1zM515 701h1v1h-1zM525 701h1v1h-1zM536 701h1v1h-1zM546 701h1v1h-1zM556 701h1v1h-1zM566 701h1v1h-1zM577 701h1v1h-1zM587 701h1v1h-1zM597 701h1v1h-1zM607 701h1v1h-1zM618 701h1v1h-1zM628 701h1v1h-1zM638 701h1v1h-1zM648 701h1v1h-1zM659 701h1v1h-1zM669 701h1v1h-1zM679 701h1v1h-1zM689 701h1v1h-1zM700 701h1v1h-1zM710 701h1v1h-1zM720 701h1v1h-1zM730 701h1v1h-1zM741 701h1v1h-1zM751 701h1v1h-1zM761 701h1v1h-1zM771 701h1v1h-1zM782 701h1v1h-1zM792 701h1v1h-1zM802 701h1v1h-1zM812 701h1v1h-1zM823 701h1v1h-1zM833 701h1v1h-1zM843 701h1v1h-1zM853 701h1v1h-1zM864 701h1v1h-1zM874 701h1v1h-1zM884 701h1v1h-1zM894 701h1v1h-1zM905 701h1v1h-1zM915 701h1v1h-1zM925 701h1v1h-1zM935 701h1v1h-1zM946 701h1v1h-1zM956 701h1v1h-1zM966 701h1v1h-1zM976 701h1v1h-1zM987 701h1v1h-1zM997 701h1v1h-1zM1007 701h1v1h-1zM1017 701h1v1h-1zM1028 701h1v1h-1zM1038 701h1v1h-1zM1048 701h1v1h-1zM1058 701h1v1h-1zM1069 701h1v1h-1zM1079 701h1v1h-1zM1089 701h1v1h-1zM1099 701h1v1h-1zM1110 701h1v1h-1zM1120 701h1v1h-1zM1130 701h1v1h-1zM95 691h1v1h-1zM105 691h1v1h-1zM115 691h1v1h-1zM126 691h1v1h-1zM136 691h1v1h-1zM146 691h1v1h-1zM156 691h1v1h-1zM167 691h1v1h-1zM177 691h1v1h-1zM187 691h1v1h-1zM197 691h1v1h-1zM208 691h1v1h-1zM218 691h1v1h-1zM228 691h1v1h-1zM238 691h1v1h-1zM249 691h1v1h-1zM259 691h1v1h-1zM269 691h1v1h-1zM279 691h1v1h-1zM290 691h1v1h-1zM300 691h1v1h-1zM310 691h1v1h-1zM320 691h1v1h-1zM331 691h1v1h-1zM341 691h1v1h-1zM351 691h1v1h-1zM361 691h1v1h-1zM372 691h1v1h-1zM382 691h1v1h-1zM392 691h1v1h-1zM402 691h1v1h-1zM413 691h1v1h-1zM423 691h1v1h-1zM433 691h1v1h-1zM443 691h1v1h-1zM454 691h1v1h-1zM464 691h1v1h-1zM474 691h1v1h-1zM484 691h1v1h-1zM495 691h1v1h-1zM505 691h1v1h-1zM515 691h1v1h-1zM525 691h1v1h-1zM536 691h1v1h-1zM546 691h1v1h-1zM556 691h1v1h-1zM566 691h1v1h-1zM577 691h1v1h-1zM587 691h1v1h-1zM597 691h1v1h-1zM607 691h1v1h-1zM618 691h1v1h-1zM628 691h1v1h-1zM638 691h1v1h-1zM648 691h1v1h-1zM659 691h1v1h-1zM669 691h1v1h-1zM679 691h1v1h-1zM689 691h1v1h-1zM700 691h1v1h-1zM710 691h1v1h-1zM720 691h1v1h-1zM730 691h1v1h-1zM741 691h1v1h-1zM751 691h1v1h-1zM761 691h1v1h-1zM771 691h1v1h-1zM782 691h1v1h-1zM792 691h1v1h-1zM802 691h1v1h-1zM812 691h1v1h-1zM823 691h1v1h-1zM833 691h1v1h-1zM843 691h1v1h-1zM853 691h1v1h-1zM864 691h1v1h-1zM874 691h1v1h-1zM884 691h1v1h-1zM894 691h1v1h-1zM905 691h1v1h-1zM915 691h1v1h-1zM925 691h1v1h-1zM935 691h1v1h-1zM946 691h1v1h-1zM956 691h1v1h-1zM966 691h1v1h-1zM976 691h1v1h-1zM987 691h1v1h-1zM997 691h1v1h-1zM1007 691h1v1h-1zM1017 691h1v1h-1zM1028 691h1v1h-1zM1038 691h1v1h-1zM1048 691h1v1h-1zM1058 691h1v1h-1zM1069 691h1v1h-1zM1079 691h1v1h-1zM1089 691h1v1h-1zM1099 691h1v1h-1zM1110 691h1v1h-1zM1120 691h1v1h-1zM1130 691h1v1h-1zM95 681h1v1h-1zM105 681h1v1h-1zM115 681h1v1h-1zM126 681h1v1h-1zM136 681h1v1h-1zM146 681h1v1h-1zM156 681h1v1h-1zM167 681h1v1h-1zM177 681h1v1h-1zM187 681h1v1h-1zM197 681h1v1h-1zM208 681h1v1h-1zM218 681h1v1h-1zM228 681h1v1h-1zM238 681h1v1h-1zM249 681h1v1h-1zM259 681h1v1h-1zM269 681h1v1h-1zM279 681h1v1h-1zM290 681h1v1h-1zM300 681h1v1h-1zM310 681h1v1h-1zM320 681h1v1h-1zM331 681h1v1h-1zM341 681h1v1h-1zM351 681h1v1h-1zM361 681h1v1h-1zM372 681h1v1h-1zM382 681h1v1h-1zM392 681h1v1h-1zM402 681h1v1h-1zM413 681h1v1h-1zM423 681h1v1h-1zM433 681h1v1h-1zM443 681h1v1h-1zM454 681h1v1h-1zM464 681h1v1h-1zM474 681h1v1h-1zM484 681h1v1h-1zM495 681h1v1h-1zM505 681h1v1h-1zM515 681h1v1h-1zM525 681h1v1h-1zM536 681h1v1h-1zM546 681h1v1h-1zM556 681h1v1h-1zM566 681h1v1h-1zM577 681h1v1h-1zM587 681h1v1h-1zM597 681h1v1h-1zM607 681h1v1h-1zM618 681h1v1h-1zM628 681h1v1h-1zM638 681h1v1h-1zM648 681h1v1h-1zM659 681h1v1h-1zM669 681h1v1h-1zM679 681h1v1h-1zM689 681h1v1h-1zM700 681h1v1h-1zM710 681h1v1h-1zM720 681h1v1h-1zM730 681h1v1h-1zM741 681h1v1h-1zM751 681h1v1h-1zM761 681h1v1h-1zM771 681h1v1h-1zM782 681h1v1h-1zM792 681h1v1h-1zM802 681h1v1h-1zM812 681h1v1h-1zM823 681h1v1h-1zM833 681h1v1h-1zM843 681h1v1h-1zM853 681h1v1h-1zM864 681h1v1h-1zM874 681h1v1h-1zM884 681h1v1h-1zM894 681h1v1h-1zM905 681h1v1h-1zM915 681h1v1h-1zM925 681h1v1h-1zM935 681h1v1h-1zM946 681h1v1h-1zM956 681h1v1h-1zM966 681h1v1h-1zM976 681h1v1h-1zM987 681h1v1h-1zM997 681h1v1h-1zM1007 681h1v1h-1zM1017 681h1v1h-1zM1028 681h1v1h-1zM1038 681h1v1h-1zM1048 681h1v1h-1zM1058 681h1v1h-1zM1069 681h1v1h-1zM1079 681h1v1h-1zM1089 681h1v1h-1zM1099 681h1v1h-1zM1110 681h1v1h-1zM1120 681h1v1h-1zM1130 681h1v1h-1zM95 670h1v1h-1zM105 670h1v1h-1zM115 670h1v1h-1zM126 670h1v1h-1zM136 670h1v1h-1zM146 670h1v1h-1zM156 670h1v1h-1zM167 670h1v1h-1zM177 670h1v1h-1zM187 670h1v1h-1zM197 670h1v1h-1zM208 670h1v1h-1zM218 670h1v1h-1zM228 670h1v1h-1zM238 670h1v1h-1zM249 670h1v1h-1zM259 670h1v1h-1zM269 670h1v1h-1zM279 670h1v1h-1zM290 670h1v1h-1zM300 670h1v1h-1zM310 670h1v1h-1zM320 670h1v1h-1zM331 670h1v1h-1zM341 670h1v1h-1zM351 670h1v1h-1zM361 670h1v1h-1zM372 670h1v1h-1zM382 670h1v1h-1zM392 670h1v1h-1zM402 670h1v1h-1zM413 670h1v1h-1zM423 670h1v1h-1zM433 670h1v1h-1zM443 670h1v1h-1zM454 670h1v1h-1zM464 670h1v1h-1zM474 670h1v1h-1zM484 670h1v1h-1zM495 670h1v1h-1zM505 670h1v1h-1zM515 670h1v1h-1zM525 670h1v1h-1zM536 670h1v1h-1zM546 670h1v1h-1zM556 670h1v1h-1zM566 670h1v1h-1zM577 670h1v1h-1zM587 670h1v1h-1zM597 670h1v1h-1zM607 670h1v1h-1zM618 670h1v1h-1zM628 670h1v1h-1zM638 670h1v1h-1zM648 670h1v1h-1zM659 670h1v1h-1zM669 670h1v1h-1zM679 670h1v1h-1zM689 670h1v1h-1zM700 670h1v1h-1zM710 670h1v1h-1zM720 670h1v1h-1zM730 670h1v1h-1zM741 670h1v1h-1zM751 670h1v1h-1zM761 670h1v1h-1zM771 670h1v1h-1zM782 670h1v1h-1zM792 670h1v1h-1zM802 670h1v1h-1zM812 670h1v1h-1zM823 670h1v1h-1zM833 670h1v1h-1zM843 670h1v1h-1zM853 670h1v1h-1zM864 670h1v1h-1zM874 670h1v1h-1zM884 670h1v1h-1zM894 670h1v1h-1zM905 670h1v1h-1zM915 670h1v1h-1zM925 670h1v1h-1zM935 670h1v1h-1zM946 670h1v1h-1zM956 670h1v1h-1zM966 670h1v1h-1zM976 670h1v1h-1zM987 670h1v1h-1zM997 670h1v1h-1zM1007 670h1v1h-1zM1017 670h1v1h-1zM1028 670h1v1h-1zM1038 670h1v1h-1zM1048 670h1v1h-1zM1058 670h1v1h-1zM1069 670h1v1h-1zM1079 670h1v1h-1zM1089 670h1v1h-1zM1099 670h1v1h-1zM1110 670h1v1h-1zM1120 670h1v1h-1zM1130 670h1v1h-1zM95 660h1v1h-1zM105 660h1v1h-1zM115 660h1v1h-1zM126 660h1v1h-1zM136 660h1v1h-1zM146 660h1v1h-1zM156 660h1v1h-1zM167 660h1v1h-1zM177 660h1v1h-1zM187 660h1v1h-1zM197 660h1v1h-1zM208 660h1v1h-1zM218 660h1v1h-1zM228 660h1v1h-1zM238 660h1v1h-1zM249 660h1v1h-1zM259 660h1v1h-1zM269 660h1v1h-1zM279 660h1v1h-1zM290 660h1v1h-1zM300 660h1v1h-1zM310 660h1v1h-1zM320 660h1v1h-1zM331 660h1v1h-1zM341 660h1v1h-1zM351 660h1v1h-1zM361 660h1v1h-1zM372 660h1v1h-1zM382 660h1v1h-1zM392 660h1v1h-1zM402 660h1v1h-1zM413 660h1v1h-1zM423 660h1v1h-1zM433 660h1v1h-1zM443 660h1v1h-1zM454 660h1v1h-1zM464 660h1v1h-1zM474 660h1v1h-1zM484 660h1v1h-1zM495 660h1v1h-1zM505 660h1v1h-1zM515 660h1v1h-1zM525 660h1v1h-1zM536 660h1v1h-1zM546 660h1v1h-1zM556 660h1v1h-1zM566 660h1v1h-1zM577 660h1v1h-1zM587 660h1v1h-1zM597 660h1v1h-1zM607 660h1v1h-1zM618 660h1v1h-1zM628 660h1v1h-1zM638 660h1v1h-1zM648 660h1v1h-1zM659 660h1v1h-1zM669 660h1v1h-1zM679 660h1v1h-1zM689 660h1v1h-1zM700 660h1v1h-1zM710 660h1v1h-1zM720 660h1v1h-1zM730 660h1v1h-1zM741 660h1v1h-1zM751 660h1v1h-1zM761 660h1v1h-1zM771 660h1v1h-1zM782 660h1v1h-1zM792 660h1v1h-1zM802 660h1v1h-1zM812 660h1v1h-1zM823 660h1v1h-1zM833 660h1v1h-1zM843 660h1v1h-1zM853 660h1v1h-1zM864 660h1v1h-1zM874 660h1v1h-1zM884 660h1v1h-1zM894 660h1v1h-1zM905 660h1v1h-1zM915 660h1v1h-1zM925 660h1v1h-1zM935 660h1v1h-1zM946 660h1v1h-1zM956 660h1v1h-1zM966 660h1v1h-1zM976 660h1v1h-1zM987 660h1v1h-1zM997 660h1v1h-1zM1007 660h1v1h-1zM1017 660h1v1h-1zM1028 660h1v1h-1zM1038 660h1v1h-1zM1048 660h1v1h-1zM1058 660h1v1h-1zM1069 660h1v1h-1zM1079 660h1v1h-1zM1089 660h1v1h-1zM1099 660h1v1h-1zM1110 660h1v1h-1zM1120 660h1v1h-1zM1130 660h1v1h-1zM95 650h1v1h-1zM105 650h1v1h-1zM115 650h1v1h-1zM126 650h1v1h-1zM136 650h1v1h-1zM146 650h1v1h-1zM156 650h1v1h-1zM167 650h1v1h-1zM177 650h1v1h-1zM187 650h1v1h-1zM197 650h1v1h-1zM208 650h1v1h-1zM218 650h1v1h-1zM228 650h1v1h-1zM238 650h1v1h-1zM249 650h1v1h-1zM259 650h1v1h-1zM269 650h1v1h-1zM279 650h1v1h-1zM290 650h1v1h-1zM300 650h1v1h-1zM310 650h1v1h-1zM320 650h1v1h-1zM331 650h1v1h-1zM341 650h1v1h-1zM351 650h1v1h-1zM361 650h1v1h-1zM372 650h1v1h-1zM382 650h1v1h-1zM392 650h1v1h-1zM402 650h1v1h-1zM413 650h1v1h-1zM423 650h1v1h-1zM433 650h1v1h-1zM443 650h1v1h-1zM454 650h1v1h-1zM464 650h1v1h-1zM474 650h1v1h-1zM484 650h1v1h-1zM495 650h1v1h-1zM505 650h1v1h-1zM515 650h1v1h-1zM525 650h1v1h-1zM536 650h1v1h-1zM546 650h1v1h-1zM556 650h1v1h-1zM566 650h1v1h-1zM577 650h1v1h-1zM587 650h1v1h-1zM597 650h1v1h-1zM607 650h1v1h-1zM618 650h1v1h-1zM628 650h1v1h-1zM638 650h1v1h-1zM648 650h1v1h-1zM659 650h1v1h-1zM669 650h1v1h-1zM679 650h1v1h-1zM689 650h1v1h-1zM700 650h1v1h-1zM710 650h1v1h-1zM720 650h1v1h-1zM730 650h1v1h-1zM741 650h1v1h-1zM751 650h1v1h-1zM761 650h1v1h-1zM771 650h1v1h-1zM782 650h1v1h-1zM792 650h1v1h-1zM802 650h1v1h-1zM812 650h1v1h-1zM823 650h1v1h-1zM833 650h1v1h-1zM843 650h1v1h-1zM853 650h1v1h-1zM864 650h1v1h-1zM874 650h1v1h-1zM884 650h1v1h-1zM894 650h1v1h-1zM905 650h1v1h-1zM915 650h1v1h-1zM925 650h1v1h-1zM935 650h1v1h-1zM946 650h1v1h-1zM956 650h1v1h-1zM966 650h1v1h-1zM976 650h1v1h-1zM987 650h1v1h-1zM997 650h1v1h-1zM1007 650h1v1h-1zM1017 650h1v1h-1zM1028 650h1v1h-1zM1038 650h1v1h-1zM1048 650h1v1h-1zM1058 650h1v1h-1zM1069 650h1v1h-1zM1079 650h1v1h-1zM1089 650h1v1h-1zM1099 650h1v1h-1zM1110 650h1v1h-1zM1120 650h1v1h-1zM1130 650h1v1h-1zM95 640h1v1h-1zM105 640h1v1h-1zM115 640h1v1h-1zM126 640h1v1h-1zM136 640h1v1h-1zM146 640h1v1h-1zM156 640h1v1h-1zM167 640h1v1h-1zM177 640h1v1h-1zM187 640h1v1h-1zM197 640h1v1h-1zM208 640h1v1h-1zM218 640h1v1h-1zM228 640h1v1h-1zM238 640h1v1h-1zM249 640h1v1h-1zM259 640h1v1h-1zM269 640h1v1h-1zM279 640h1v1h-1zM290 640h1v1h-1zM300 640h1v1h-1zM310 640h1v1h-1zM320 640h1v1h-1zM331 640h1v1h-1zM341 640h1v1h-1zM351 640h1v1h-1zM361 640h1v1h-1zM372 640h1v1h-1zM382 640h1v1h-1zM392 640h1v1h-1zM402 640h1v1h-1zM413 640h1v1h-1zM423 640h1v1h-1zM433 640h1v1h-1zM443 640h1v1h-1zM454 640h1v1h-1zM464 640h1v1h-1zM474 640h1v1h-1zM484 640h1v1h-1zM495 640h1v1h-1zM505 640h1v1h-1zM515 640h1v1h-1zM525 640h1v1h-1zM536 640h1v1h-1zM546 640h1v1h-1zM556 640h1v1h-1zM566 640h1v1h-1zM577 640h1v1h-1zM587 640h1v1h-1zM597 640h1v1h-1zM607 640h1v1h-1zM618 640h1v1h-1zM628 640h1v1h-1zM638 640h1v1h-1zM648 640h1v1h-1zM659 640h1v1h-1zM669 640h1v1h-1zM679 640h1v1h-1zM689 640h1v1h-1zM700 640h1v1h-1zM710 640h1v1h-1zM720 640h1v1h-1zM730 640h1v1h-1zM741 640h1v1h-1zM751 640h1v1h-1zM761 640h1v1h-1zM771 640h1v1h-1zM782 640h1v1h-1zM792 640h1v1h-1zM802 640h1v1h-1zM812 640h1v1h-1zM823 640h1v1h-1zM833 640h1v1h-1zM843 640h1v1h-1zM853 640h1v1h-1zM864 640h1v1h-1zM874 640h1v1h-1zM884 640h1v1h-1zM894 640h1v1h-1zM905 640h1v1h-1zM915 640h1v1h-1zM925 640h1v1h-1zM935 640h1v1h-1zM946 640h1v1h-1zM956 640h1v1h-1zM966 640h1v1h-1zM976 640h1v1h-1zM987 640h1v1h-1zM997 640h1v1h-1zM1007 640h1v1h-1zM1017 640h1v1h-1zM1028 640h1v1h-1zM1038 640h1v1h-1zM1048 640h1v1h-1zM1058 640h1v1h-1zM1069 640h1v1h-1zM1079 640h1v1h-1zM1089 640h1v1h-1zM1099 640h1v1h-1zM1110 640h1v1h-1zM1120 640h1v1h-1zM1130 640h1v1h-1zM95 630h1v1h-1zM105 630h1v1h-1zM115 630h1v1h-1zM126 630h1v1h-1zM136 630h1v1h-1zM146 630h1v1h-1zM156 630h1v1h-1zM167 630h1v1h-1zM177 630h1v1h-1zM187 630h1v1h-1zM197 630h1v1h-1zM208 630h1v1h-1zM218 630h1v1h-1zM228 630h1v1h-1zM238 630h1v1h-1zM249 630h1v1h-1zM259 630h1v1h-1zM269 630h1v1h-1zM279 630h1v1h-1zM290 630h1v1h-1zM300 630h1v1h-1zM310 630h1v1h-1zM320 630h1v1h-1zM331 630h1v1h-1zM341 630h1v1h-1zM351 630h1v1h-1zM361 630h1v1h-1zM372 630h1v1h-1zM382 630h1v1h-1zM392 630h1v1h-1zM402 630h1v1h-1zM413 630h1v1h-1zM423 630h1v1h-1zM433 630h1v1h-1zM443 630h1v1h-1zM454 630h1v1h-1zM464 630h1v1h-1zM474 630h1v1h-1zM484 630h1v1h-1zM495 630h1v1h-1zM505 630h1v1h-1zM515 630h1v1h-1zM525 630h1v1h-1zM536 630h1v1h-1zM546 630h1v1h-1zM556 630h1v1h-1zM566 630h1v1h-1zM577 630h1v1h-1zM587 630h1v1h-1zM597 630h1v1h-1zM607 630h1v1h-1zM618 630h1v1h-1zM628 630h1v1h-1zM638 630h1v1h-1zM648 630h1v1h-1zM659 630h1v1h-1zM669 630h1v1h-1zM679 630h1v1h-1zM689 630h1v1h-1zM700 630h1v1h-1zM710 630h1v1h-1zM720 630h1v1h-1zM730 630h1v1h-1zM741 630h1v1h-1zM751 630h1v1h-1zM761 630h1v1h-1zM771 630h1v1h-1zM782 630h1v1h-1zM792 630h1v1h-1zM802 630h1v1h-1zM812 630h1v1h-1zM823 630h1v1h-1zM833 630h1v1h-1zM843 630h1v1h-1zM853 630h1v1h-1zM864 630h1v1h-1zM874 630h1v1h-1zM884 630h1v1h-1zM894 630h1v1h-1zM905 630h1v1h-1zM915 630h1v1h-1zM925 630h1v1h-1zM935 630h1v1h-1zM946 630h1v1h-1zM956 630h1v1h-1zM966 630h1v1h-1zM976 630h1v1h-1zM987 630h1v1h-1zM997 630h1v1h-1zM1007 630h1v1h-1zM1017 630h1v1h-1zM1028 630h1v1h-1zM1038 630h1v1h-1zM1048 630h1v1h-1zM1058 630h1v1h-1zM1069 630h1v1h-1zM1079 630h1v1h-1zM1089 630h1v1h-1zM1099 630h1v1h-1zM1110 630h1v1h-1zM1120 630h1v1h-1zM1130 630h1v1h-1zM95 619h1v1h-1zM105 619h1v1h-1zM115 619h1v1h-1zM126 619h1v1h-1zM136 619h1v1h-1zM146 619h1v1h-1zM156 619h1v1h-1zM167 619h1v1h-1zM177 619h1v1h-1zM187 619h1v1h-1zM197 619h1v1h-1zM208 619h1v1h-1zM218 619h1v1h-1zM228 619h1v1h-1zM238 619h1v1h-1zM249 619h1v1h-1zM259 619h1v1h-1zM269 619h1v1h-1zM279 619h1v1h-1zM290 619h1v1h-1zM300 619h1v1h-1zM310 619h1v1h-1zM320 619h1v1h-1zM331 619h1v1h-1zM341 619h1v1h-1zM351 619h1v1h-1zM361 619h1v1h-1zM372 619h1v1h-1zM382 619h1v1h-1zM392 619h1v1h-1zM402 619h1v1h-1zM413 619h1v1h-1zM423 619h1v1h-1zM433 619h1v1h-1zM443 619h1v1h-1zM454 619h1v1h-1zM464 619h1v1h-1zM474 619h1v1h-1zM484 619h1v1h-1zM495 619h1v1h-1zM505 619h1v1h-1zM515 619h1v1h-1zM525 619h1v1h-1zM536 619h1v1h-1zM546 619h1v1h-1zM556 619h1v1h-1zM566 619h1v1h-1zM577 619h1v1h-1zM587 619h1v1h-1zM597 619h1v1h-1zM607 619h1v1h-1zM618 619h1v1h-1zM628 619h1v1h-1zM638 619h1v1h-1zM648 619h1v1h-1zM659 619h1v1h-1zM669 619h1v1h-1zM679 619h1v1h-1zM689 619h1v1h-1zM700 619h1v1h-1zM710 619h1v1h-1zM720 619h1v1h-1zM730 619h1v1h-1zM741 619h1v1h-1zM751 619h1v1h-1zM761 619h1v1h-1zM771 619h1v1h-1zM782 619h1v1h-1zM792 619h1v1h-1zM802 619h1v1h-1zM812 619h1v1h-1zM823 619h1v1h-1zM833 619h1v1h-1zM843 619h1v1h-1zM853 619h1v1h-1zM864 619h1v1h-1zM874 619h1v1h-1zM884 619h1v1h-1zM894 619h1v1h-1zM905 619h1v1h-1zM915 619h1v1h-1zM925 619h1v1h-1zM935 619h1v1h-1zM946 619h1v1h-1zM956 619h1v1h-1zM966 619h1v1h-1zM976 619h1v1h-1zM987 619h1v1h-1zM997 619h1v1h-1zM1007 619h1v1h-1zM1017 619h1v1h-1zM1028 619h1v1h-1zM1038 619h1v1h-1zM1048 619h1v1h-1zM1058 619h1v1h-1zM1069 619h1v1h-1zM1079 619h1v1h-1zM1089 619h1v1h-1zM1099 619h1v1h-1zM1110 619h1v1h-1zM1120 619h1v1h-1zM1130 619h1v1h-1zM95 609h1v1h-1zM105 609h1v1h-1zM115 609h1v1h-1zM126 609h1v1h-1zM136 609h1v1h-1zM146 609h1v1h-1zM156 609h1v1h-1zM167 609h1v1h-1zM177 609h1v1h-1zM187 609h1v1h-1zM197 609h1v1h-1zM208 609h1v1h-1zM218 609h1v1h-1zM228 609h1v1h-1zM238 609h1v1h-1zM249 609h1v1h-1zM259 609h1v1h-1zM269 609h1v1h-1zM279 609h1v1h-1zM290 609h1v1h-1zM300 609h1v1h-1zM310 609h1v1h-1zM320 609h1v1h-1zM331 609h1v1h-1zM341 609h1v1h-1zM351 609h1v1h-1zM361 609h1v1h-1zM372 609h1v1h-1zM382 609h1v1h-1zM392 609h1v1h-1zM402 609h1v1h-1zM413 609h1v1h-1zM423 609h1v1h-1zM433 609h1v1h-1zM443 609h1v1h-1zM454 609h1v1h-1zM464 609h1v1h-1zM474 609h1v1h-1zM484 609h1v1h-1zM495 609h1v1h-1zM505 609h1v1h-1zM515 609h1v1h-1zM525 609h1v1h-1zM536 609h1v1h-1zM546 609h1v1h-1zM556 609h1v1h-1zM566 609h1v1h-1zM577 609h1v1h-1zM587 609h1v1h-1zM597 609h1v1h-1zM607 609h1v1h-1zM618 609h1v1h-1zM628 609h1v1h-1zM638 609h1v1h-1zM648 609h1v1h-1zM659 609h1v1h-1zM669 609h1v1h-1zM679 609h1v1h-1zM689 609h1v1h-1zM700 609h1v1h-1zM710 609h1v1h-1zM720 609h1v1h-1zM730 609h1v1h-1zM741 609h1v1h-1zM751 609h1v1h-1zM761 609h1v1h-1zM771 609h1v1h-1zM782 609h1v1h-1zM792 609h1v1h-1zM802 609h1v1h-1zM812 609h1v1h-1zM823 609h1v1h-1zM833 609h1v1h-1zM843 609h1v1h-1zM853 609h1v1h-1zM864 609h1v1h-1zM874 609h1v1h-1zM884 609h1v1h-1zM894 609h1v1h-1zM905 609h1v1h-1zM915 609h1v1h-1zM925 609h1v1h-1zM935 609h1v1h-1zM946 609h1v1h-1zM956 609h1v1h-1zM966 609h1v1h-1zM976 609h1v1h-1zM987 609h1v1h-1zM997 609h1v1h-1zM1007 609h1v1h-1zM1017 609h1v1h-1zM1028 609h1v1h-1zM1038 609h1v1h-1zM1048 609h1v1h-1zM1058 609h1v1h-1zM1069 609h1v1h-1zM1079 609h1v1h-1zM1089 609h1v1h-1zM1099 609h1v1h-1zM1110 609h1v1h-1zM1120 609h1v1h-1zM1130 609h1v1h-1zM95 599h1v1h-1zM105 599h1v1h-1zM115 599h1v1h-1zM126 599h1v1h-1zM136 599h1v1h-1zM146 599h1v1h-1zM156 599h1v1h-1zM167 599h1v1h-1zM177 599h1v1h-1zM187 599h1v1h-1zM197 599h1v1h-1zM208 599h1v1h-1zM218 599h1v1h-1zM228 599h1v1h-1zM238 599h1v1h-1zM249 599h1v1h-1zM259 599h1v1h-1zM269 599h1v1h-1zM279 599h1v1h-1zM290 599h1v1h-1zM300 599h1v1h-1zM310 599h1v1h-1zM320 599h1v1h-1zM331 599h1v1h-1zM341 599h1v1h-1zM351 599h1v1h-1zM361 599h1v1h-1zM372 599h1v1h-1zM382 599h1v1h-1zM392 599h1v1h-1zM402 599h1v1h-1zM413 599h1v1h-1zM423 599h1v1h-1zM433 599h1v1h-1zM443 599h1v1h-1zM454 599h1v1h-1zM464 599h1v1h-1zM474 599h1v1h-1zM484 599h1v1h-1zM495 599h1v1h-1zM505 599h1v1h-1zM515 599h1v1h-1zM525 599h1v1h-1zM536 599h1v1h-1zM546 599h1v1h-1zM556 599h1v1h-1zM566 599h1v1h-1zM577 599h1v1h-1zM587 599h1v1h-1zM597 599h1v1h-1zM607 599h1v1h-1zM618 599h1v1h-1zM628 599h1v1h-1zM638 599h1v1h-1zM648 599h1v1h-1zM659 599h1v1h-1zM669 599h1v1h-1zM679 599h1v1h-1zM689 599h1v1h-1zM700 599h1v1h-1zM710 599h1v1h-1zM720 599h1v1h-1zM730 599h1v1h-1zM741 599h1v1h-1zM751 599h1v1h-1zM761 599h1v1h-1zM771 599h1v1h-1zM782 599h1v1h-1zM792 599h1v1h-1zM802 599h1v1h-1zM812 599h1v1h-1zM823 599h1v1h-1zM833 599h1v1h-1zM843 599h1v1h-1zM853 599h1v1h-1zM864 599h1v1h-1zM874 599h1v1h-1zM884 599h1v1h-1zM894 599h1v1h-1zM905 599h1v1h-1zM915 599h1v1h-1zM925 599h1v1h-1zM935 599h1v1h-1zM946 599h1v1h-1zM956 599h1v1h-1zM966 599h1v1h-1zM976 599h1v1h-1zM987 599h1v1h-1zM997 599h1v1h-1zM1007 599h1v1h-1zM1017 599h1v1h-1zM1028 599h1v1h-1zM1038 599h1v1h-1zM1048 599h1v1h-1zM1058 599h1v1h-1zM1069 599h1v1h-1zM1079 599h1v1h-1zM1089 599h1v1h-1zM1099 599h1v1h-1zM1110 599h1v1h-1zM1120 599h1v1h-1zM1130 599h1v1h-1zM95 588h1v1h-1zM105 588h1v1h-1zM115 588h1v1h-1zM126 588h1v1h-1zM136 588h1v1h-1zM146 588h1v1h-1zM156 588h1v1h-1zM167 588h1v1h-1zM177 588h1v1h-1zM187 588h1v1h-1zM197 588h1v1h-1zM208 588h1v1h-1zM218 588h1v1h-1zM228 588h1v1h-1zM238 588h1v1h-1zM249 588h1v1h-1zM259 588h1v1h-1zM269 588h1v1h-1zM279 588h1v1h-1zM290 588h1v1h-1zM300 588h1v1h-1zM310 588h1v1h-1zM320 588h1v1h-1zM331 588h1v1h-1zM341 588h1v1h-1zM351 588h1v1h-1zM361 588h1v1h-1zM372 588h1v1h-1zM382 588h1v1h-1zM392 588h1v1h-1zM402 588h1v1h-1zM413 588h1v1h-1zM423 588h1v1h-1zM433 588h1v1h-1zM443 588h1v1h-1zM454 588h1v1h-1zM464 588h1v1h-1zM474 588h1v1h-1zM484 588h1v1h-1zM495 588h1v1h-1zM505 588h1v1h-1zM515 588h1v1h-1zM525 588h1v1h-1zM536 588h1v1h-1zM546 588h1v1h-1zM556 588h1v1h-1zM566 588h1v1h-1zM577 588h1v1h-1zM587 588h1v1h-1zM597 588h1v1h-1zM607 588h1v1h-1zM618 588h1v1h-1zM628 588h1v1h-1zM638 588h1v1h-1zM648 588h1v1h-1zM659 588h1v1h-1zM669 588h1v1h-1zM679 588h1v1h-1zM689 588h1v1h-1zM700 588h1v1h-1zM710 588h1v1h-1zM720 588h1v1h-1zM730 588h1v1h-1zM741 588h1v1h-1zM751 588h1v1h-1zM761 588h1v1h-1zM771 588h1v1h-1zM782 588h1v1h-1zM792 588h1v1h-1zM802 588h1v1h-1zM812 588h1v1h-1zM823 588h1v1h-1zM833 588h1v1h-1zM843 588h1v1h-1zM853 588h1v1h-1zM864 588h1v1h-1zM874 588h1v1h-1zM884 588h1v1h-1zM894 588h1v1h-1zM905 588h1v1h-1zM915 588h1v1h-1zM925 588h1v1h-1zM935 588h1v1h-1zM946 588h1v1h-1zM956 588h1v1h-1zM966 588h1v1h-1zM976 588h1v1h-1zM987 588h1v1h-1zM997 588h1v1h-1zM1007 588h1v1h-1zM1017 588h1v1h-1zM1028 588h1v1h-1zM1038 588h1v1h-1zM1048 588h1v1h-1zM1058 588h1v1h-1zM1069 588h1v1h-1zM1079 588h1v1h-1zM1089 588h1v1h-1zM1099 588h1v1h-1zM1110 588h1v1h-1zM1120 588h1v1h-1zM1130 588h1v1h-1zM95 578h1v1h-1zM105 578h1v1h-1zM115 578h1v1h-1zM126 578h1v1h-1zM136 578h1v1h-1zM146 578h1v1h-1zM156 578h1v1h-1zM167 578h1v1h-1zM177 578h1v1h-1zM187 578h1v1h-1zM197 578h1v1h-1zM208 578h1v1h-1zM218 578h1v1h-1zM228 578h1v1h-1zM238 578h1v1h-1zM249 578h1v1h-1zM259 578h1v1h-1zM269 578h1v1h-1zM279 578h1v1h-1zM290 578h1v1h-1zM300 578h1v1h-1zM310 578h1v1h-1zM320 578h1v1h-1zM331 578h1v1h-1zM341 578h1v1h-1zM351 578h1v1h-1zM361 578h1v1h-1zM372 578h1v1h-1zM382 578h1v1h-1zM392 578h1v1h-1zM402 578h1v1h-1zM413 578h1v1h-1zM423 578h1v1h-1zM433 578h1v1h-1zM443 578h1v1h-1zM454 578h1v1h-1zM464 578h1v1h-1zM474 578h1v1h-1zM484 578h1v1h-1zM495 578h1v1h-1zM505 578h1v1h-1zM515 578h1v1h-1zM525 578h1v1h-1zM536 578h1v1h-1zM546 578h1v1h-1zM556 578h1v1h-1zM566 578h1v1h-1zM577 578h1v1h-1zM587 578h1v1h-1zM597 578h1v1h-1zM607 578h1v1h-1zM618 578h1v1h-1zM628 578h1v1h-1zM638 578h1v1h-1zM648 578h1v1h-1zM659 578h1v1h-1zM669 578h1v1h-1zM679 578h1v1h-1zM689 578h1v1h-1zM700 578h1v1h-1zM710 578h1v1h-1zM720 578h1v1h-1zM730 578h1v1h-1zM741 578h1v1h-1zM751 578h1v1h-1zM761 578h1v1h-1zM771 578h1v1h-1zM782 578h1v1h-1zM792 578h1v1h-1zM802 578h1v1h-1zM812 578h1v1h-1zM823 578h1v1h-1zM833 578h1v1h-1zM843 578h1v1h-1zM853 578h1v1h-1zM864 578h1v1h-1zM874 578h1v1h-1zM884 578h1v1h-1zM894 578h1v1h-1zM905 578h1v1h-1zM915 578h1v1h-1zM925 578h1v1h-1zM935 578h1v1h-1zM946 578h1v1h-1zM956 578h1v1h-1zM966 578h1v1h-1zM976 578h1v1h-1zM987 578h1v1h-1zM997 578h1v1h-1zM1007 578h1v1h-1zM1017 578h1v1h-1zM1028 578h1v1h-1zM1038 578h1v1h-1zM1048 578h1v1h-1zM1058 578h1v1h-1zM1069 578h1v1h-1zM1079 578h1v1h-1zM1089 578h1v1h-1zM1099 578h1v1h-1zM1110 578h1v1h-1zM1120 578h1v1h-1zM1130 578h1v1h-1zM95 568h1v1h-1zM105 568h1v1h-1zM115 568h1v1h-1zM126 568h1v1h-1zM136 568h1v1h-1zM146 568h1v1h-1zM156 568h1v1h-1zM167 568h1v1h-1zM177 568h1v1h-1zM187 568h1v1h-1zM197 568h1v1h-1zM208 568h1v1h-1zM218 568h1v1h-1zM228 568h1v1h-1zM238 568h1v1h-1zM249 568h1v1h-1zM259 568h1v1h-1zM269 568h1v1h-1zM279 568h1v1h-1zM290 568h1v1h-1zM300 568h1v1h-1zM310 568h1v1h-1zM320 568h1v1h-1zM331 568h1v1h-1zM341 568h1v1h-1zM351 568h1v1h-1zM361 568h1v1h-1zM372 568h1v1h-1zM382 568h1v1h-1zM392 568h1v1h-1zM402 568h1v1h-1zM413 568h1v1h-1zM423 568h1v1h-1zM433 568h1v1h-1zM443 568h1v1h-1zM454 568h1v1h-1zM464 568h1v1h-1zM474 568h1v1h-1zM484 568h1v1h-1zM495 568h1v1h-1zM505 568h1v1h-1zM515 568h1v1h-1zM525 568h1v1h-1zM536 568h1v1h-1zM546 568h1v1h-1zM556 568h1v1h-1zM566 568h1v1h-1zM577 568h1v1h-1zM587 568h1v1h-1zM597 568h1v1h-1zM607 568h1v1h-1zM618 568h1v1h-1zM628 568h1v1h-1zM638 568h1v1h-1zM648 568h1v1h-1zM659 568h1v1h-1zM669 568h1v1h-1zM679 568h1v1h-1zM689 568h1v1h-1zM700 568h1v1h-1zM710 568h1v1h-1zM720 568h1v1h-1zM730 568h1v1h-1zM741 568h1v1h-1zM751 568h1v1h-1zM761 568h1v1h-1zM771 568h1v1h-1zM782 568h1v1h-1zM792 568h1v1h-1zM802 568h1v1h-1zM812 568h1v1h-1zM823 568h1v1h-1zM833 568h1v1h-1zM843 568h1v1h-1zM853 568h1v1h-1zM864 568h1v1h-1zM874 568h1v1h-1zM884 568h1v1h-1zM894 568h1v1h-1zM905 568h1v1h-1zM915 568h1v1h-1zM925 568h1v1h-1zM935 568h1v1h-1zM946 568h1v1h-1zM956 568h1v1h-1zM966 568h1v1h-1zM976 568h1v1h-1zM987 568h1v1h-1zM997 568h1v1h-1zM1007 568h1v1h-1zM1017 568h1v1h-1zM1028 568h1v1h-1zM1038 568h1v1h-1zM1048 568h1v1h-1zM1058 568h1v1h-1zM1069 568h1v1h-1zM1079 568h1v1h-1zM1089 568h1v1h-1zM1099 568h1v1h-1zM1110 568h1v1h-1zM1120 568h1v1h-1zM1130 568h1v1h-1zM95 558h1v1h-1zM105 558h1v1h-1zM115 558h1v1h-1zM126 558h1v1h-1zM136 558h1v1h-1zM146 558h1v1h-1zM156 558h1v1h-1zM167 558h1v1h-1zM177 558h1v1h-1zM187 558h1v1h-1zM197 558h1v1h-1zM208 558h1v1h-1zM218 558h1v1h-1zM228 558h1v1h-1zM238 558h1v1h-1zM249 558h1v1h-1zM259 558h1v1h-1zM269 558h1v1h-1zM279 558h1v1h-1zM290 558h1v1h-1zM300 558h1v1h-1zM310 558h1v1h-1zM320 558h1v1h-1zM331 558h1v1h-1zM341 558h1v1h-1zM351 558h1v1h-1zM361 558h1v1h-1zM372 558h1v1h-1zM382 558h1v1h-1zM392 558h1v1h-1zM402 558h1v1h-1zM413 558h1v1h-1zM423 558h1v1h-1zM433 558h1v1h-1zM443 558h1v1h-1zM454 558h1v1h-1zM464 558h1v1h-1zM474 558h1v1h-1zM484 558h1v1h-1zM495 558h1v1h-1zM505 558h1v1h-1zM515 558h1v1h-1zM525 558h1v1h-1zM536 558h1v1h-1zM546 558h1v1h-1zM556 558h1v1h-1zM566 558h1v1h-1zM577 558h1v1h-1zM587 558h1v1h-1zM597 558h1v1h-1zM607 558h1v1h-1zM618 558h1v1h-1zM628 558h1v1h-1zM638 558h1v1h-1zM648 558h1v1h-1zM659 558h1v1h-1zM669 558h1v1h-1zM679 558h1v1h-1zM689 558h1v1h-1zM700 558h1v1h-1zM710 558h1v1h-1zM720 558h1v1h-1zM730 558h1v1h-1zM741 558h1v1h-1zM751 558h1v1h-1zM761 558h1v1h-1zM771 558h1v1h-1zM782 558h1v1h-1zM792 558h1v1h-1zM802 558h1v1h-1zM812 558h1v1h-1zM823 558h1v1h-1zM833 558h1v1h-1zM843 558h1v1h-1zM853 558h1v1h-1zM864 558h1v1h-1zM874 558h1v1h-1zM884 558h1v1h-1zM894 558h1v1h-1zM905 558h1v1h-1zM915 558h1v1h-1zM925 558h1v1h-1zM935 558h1v1h-1zM946 558h1v1h-1zM956 558h1v1h-1zM966 558h1v1h-1zM976 558h1v1h-1zM987 558h1v1h-1zM997 558h1v1h-1zM1007 558h1v1h-1zM1017 558h1v1h-1zM1028 558h1v1h-1zM1038 558h1v1h-1zM1048 558h1v1h-1zM1058 558h1v1h-1zM1069 558h1v1h-1zM1079 558h1v1h-1zM1089 558h1v1h-1zM1099 558h1v1h-1zM1110 558h1v1h-1zM1120 558h1v1h-1zM1130 558h1v1h-1zM95 548h1v1h-1zM105 548h1v1h-1zM115 548h1v1h-1zM126 548h1v1h-1zM136 548h1v1h-1zM146 548h1v1h-1zM156 548h1v1h-1zM167 548h1v1h-1zM177 548h1v1h-1zM187 548h1v1h-1zM197 548h1v1h-1zM208 548h1v1h-1zM218 548h1v1h-1zM228 548h1v1h-1zM238 548h1v1h-1zM249 548h1v1h-1zM259 548h1v1h-1zM269 548h1v1h-1zM279 548h1v1h-1zM290 548h1v1h-1zM300 548h1v1h-1zM310 548h1v1h-1zM320 548h1v1h-1zM331 548h1v1h-1zM341 548h1v1h-1zM351 548h1v1h-1zM361 548h1v1h-1zM372 548h1v1h-1zM382 548h1v1h-1zM392 548h1v1h-1zM402 548h1v1h-1zM413 548h1v1h-1zM423 548h1v1h-1zM433 548h1v1h-1zM443 548h1v1h-1zM454 548h1v1h-1zM464 548h1v1h-1zM474 548h1v1h-1zM484 548h1v1h-1zM495 548h1v1h-1zM505 548h1v1h-1zM515 548h1v1h-1zM525 548h1v1h-1zM536 548h1v1h-1zM546 548h1v1h-1zM556 548h1v1h-1zM566 548h1v1h-1zM577 548h1v1h-1zM587 548h1v1h-1zM597 548h1v1h-1zM607 548h1v1h-1zM618 548h1v1h-1zM628 548h1v1h-1zM638 548h1v1h-1zM648 548h1v1h-1zM659 548h1v1h-1zM669 548h1v1h-1zM679 548h1v1h-1zM689 548h1v1h-1zM700 548h1v1h-1zM710 548h1v1h-1zM720 548h1v1h-1zM730 548h1v1h-1zM741 548h1v1h-1zM751 548h1v1h-1zM761 548h1v1h-1zM771 548h1v1h-1zM782 548h1v1h-1zM792 548h1v1h-1zM802 548h1v1h-1zM812 548h1v1h-1zM823 548h1v1h-1zM833 548h1v1h-1zM843 548h1v1h-1zM853 548h1v1h-1zM864 548h1v1h-1zM874 548h1v1h-1zM884 548h1v1h-1zM894 548h1v1h-1zM905 548h1v1h-1zM915 548h1v1h-1zM925 548h1v1h-1zM935 548h1v1h-1zM946 548h1v1h-1zM956 548h1v1h-1zM966 548h1v1h-1zM976 548h1v1h-1zM987 548h1v1h-1zM997 548h1v1h-1zM1007 548h1v1h-1zM1017 548h1v1h-1zM1028 548h1v1h-1zM1038 548h1v1h-1zM1048 548h1v1h-1zM1058 548h1v1h-1zM1069 548h1v1h-1zM1079 548h1v1h-1zM1089 548h1v1h-1zM1099 548h1v1h-1zM1110 548h1v1h-1zM1120 548h1v1h-1zM1130 548h1v1h-1zM95 537h1v1h-1zM105 537h1v1h-1zM115 537h1v1h-1zM126 537h1v1h-1zM136 537h1v1h-1zM146 537h1v1h-1zM156 537h1v1h-1zM167 537h1v1h-1zM177 537h1v1h-1zM187 537h1v1h-1zM197 537h1v1h-1zM208 537h1v1h-1zM218 537h1v1h-1zM228 537h1v1h-1zM238 537h1v1h-1zM249 537h1v1h-1zM259 537h1v1h-1zM269 537h1v1h-1zM279 537h1v1h-1zM290 537h1v1h-1zM300 537h1v1h-1zM310 537h1v1h-1zM320 537h1v1h-1zM331 537h1v1h-1zM341 537h1v1h-1zM351 537h1v1h-1zM361 537h1v1h-1zM372 537h1v1h-1zM382 537h1v1h-1zM392 537h1v1h-1zM402 537h1v1h-1zM413 537h1v1h-1zM423 537h1v1h-1zM433 537h1v1h-1zM443 537h1v1h-1zM454 537h1v1h-1zM464 537h1v1h-1zM474 537h1v1h-1zM484 537h1v1h-1zM495 537h1v1h-1zM505 537h1v1h-1zM515 537h1v1h-1zM525 537h1v1h-1zM536 537h1v1h-1zM546 537h1v1h-1zM556 537h1v1h-1zM566 537h1v1h-1zM577 537h1v1h-1zM587 537h1v1h-1zM597 537h1v1h-1zM607 537h1v1h-1zM618 537h1v1h-1zM628 537h1v1h-1zM638 537h1v1h-1zM648 537h1v1h-1zM659 537h1v1h-1zM669 537h1v1h-1zM679 537h1v1h-1zM689 537h1v1h-1zM700 537h1v1h-1zM710 537h1v1h-1zM720 537h1v1h-1zM730 537h1v1h-1zM741 537h1v1h-1zM751 537h1v1h-1zM761 537h1v1h-1zM771 537h1v1h-1zM782 537h1v1h-1zM792 537h1v1h-1zM802 537h1v1h-1zM812 537h1v1h-1zM823 537h1v1h-1zM833 537h1v1h-1zM843 537h1v1h-1zM853 537h1v1h-1zM864 537h1v1h-1zM874 537h1v1h-1zM884 537h1v1h-1zM894 537h1v1h-1zM905 537h1v1h-1zM915 537h1v1h-1zM925 537h1v1h-1zM935 537h1v1h-1zM946 537h1v1h-1zM956 537h1v1h-1zM966 537h1v1h-1zM976 537h1v1h-1zM987 537h1v1h-1zM997 537h1v1h-1zM1007 537h1v1h-1zM1017 537h1v1h-1zM1028 537h1v1h-1zM1038 537h1v1h-1zM1048 537h1v1h-1zM1058 537h1v1h-1zM1069 537h1v1h-1zM1079 537h1v1h-1zM1089 537h1v1h-1zM1099 537h1v1h-1zM1110 537h1v1h-1zM1120 537h1v1h-1zM1130 537h1v1h-1zM95 527h1v1h-1zM105 527h1v1h-1zM115 527h1v1h-1zM126 527h1v1h-1zM136 527h1v1h-1zM146 527h1v1h-1zM156 527h1v1h-1zM167 527h1v1h-1zM177 527h1v1h-1zM187 527h1v1h-1zM197 527h1v1h-1zM208 527h1v1h-1zM218 527h1v1h-1zM228 527h1v1h-1zM238 527h1v1h-1zM249 527h1v1h-1zM259 527h1v1h-1zM269 527h1v1h-1zM279 527h1v1h-1zM290 527h1v1h-1zM300 527h1v1h-1zM310 527h1v1h-1zM320 527h1v1h-1zM331 527h1v1h-1zM341 527h1v1h-1zM351 527h1v1h-1zM361 527h1v1h-1zM372 527h1v1h-1zM382 527h1v1h-1zM392 527h1v1h-1zM402 527h1v1h-1zM413 527h1v1h-1zM423 527h1v1h-1zM433 527h1v1h-1zM443 527h1v1h-1zM454 527h1v1h-1zM464 527h1v1h-1zM474 527h1v1h-1zM484 527h1v1h-1zM495 527h1v1h-1zM505 527h1v1h-1zM515 527h1v1h-1zM525 527h1v1h-1zM536 527h1v1h-1zM546 527h1v1h-1zM556 527h1v1h-1zM566 527h1v1h-1zM577 527h1v1h-1zM587 527h1v1h-1zM597 527h1v1h-1zM607 527h1v1h-1zM618 527h1v1h-1zM628 527h1v1h-1zM638 527h1v1h-1zM648 527h1v1h-1zM659 527h1v1h-1zM669 527h1v1h-1zM679 527h1v1h-1zM689 527h1v1h-1zM700 527h1v1h-1zM710 527h1v1h-1zM720 527h1v1h-1zM730 527h1v1h-1zM741 527h1v1h-1zM751 527h1v1h-1zM761 527h1v1h-1zM771 527h1v1h-1zM782 527h1v1h-1zM792 527h1v1h-1zM802 527h1v1h-1zM812 527h1v1h-1zM823 527h1v1h-1zM833 527h1v1h-1zM843 527h1v1h-1zM853 527h1v1h-1zM864 527h1v1h-1zM874 527h1v1h-1zM884 527h1v1h-1zM894 527h1v1h-1zM905 527h1v1h-1zM915 527h1v1h-1zM925 527h1v1h-1zM935 527h1v1h-1zM946 527h1v1h-1zM956 527h1v1h-1zM966 527h1v1h-1zM976 527h1v1h-1zM987 527h1v1h-1zM997 527h1v1h-1zM1007 527h1v1h-1zM1017 527h1v1h-1zM1028 527h1v1h-1zM1038 527h1v1h-1zM1048 527h1v1h-1zM1058 527h1v1h-1zM1069 527h1v1h-1zM1079 527h1v1h-1zM1089 527h1v1h-1zM1099 527h1v1h-1zM1110 527h1v1h-1zM1120 527h1v1h-1zM1130 527h1v1h-1zM95 517h1v1h-1zM105 517h1v1h-1zM115 517h1v1h-1zM126 517h1v1h-1zM136 517h1v1h-1zM146 517h1v1h-1zM156 517h1v1h-1zM167 517h1v1h-1zM177 517h1v1h-1zM187 517h1v1h-1zM197 517h1v1h-1zM208 517h1v1h-1zM218 517h1v1h-1zM228 517h1v1h-1zM238 517h1v1h-1zM249 517h1v1h-1zM259 517h1v1h-1zM269 517h1v1h-1zM279 517h1v1h-1zM290 517h1v1h-1zM300 517h1v1h-1zM310 517h1v1h-1zM320 517h1v1h-1zM331 517h1v1h-1zM341 517h1v1h-1zM351 517h1v1h-1zM361 517h1v1h-1zM372 517h1v1h-1zM382 517h1v1h-1zM392 517h1v1h-1zM402 517h1v1h-1zM413 517h1v1h-1zM423 517h1v1h-1zM433 517h1v1h-1zM443 517h1v1h-1zM454 517h1v1h-1zM464 517h1v1h-1zM474 517h1v1h-1zM484 517h1v1h-1zM495 517h1v1h-1zM505 517h1v1h-1zM515 517h1v1h-1zM525 517h1v1h-1zM536 517h1v1h-1zM546 517h1v1h-1zM556 517h1v1h-1zM566 517h1v1h-1zM577 517h1v1h-1zM587 517h1v1h-1zM597 517h1v1h-1zM607 517h1v1h-1zM618 517h1v1h-1zM628 517h1v1h-1zM638 517h1v1h-1zM648 517h1v1h-1zM659 517h1v1h-1zM669 517h1v1h-1zM679 517h1v1h-1zM689 517h1v1h-1zM700 517h1v1h-1zM710 517h1v1h-1zM720 517h1v1h-1zM730 517h1v1h-1zM741 517h1v1h-1zM751 517h1v1h-1zM761 517h1v1h-1zM771 517h1v1h-1zM782 517h1v1h-1zM792 517h1v1h-1zM802 517h1v1h-1zM812 517h1v1h-1zM823 517h1v1h-1zM833 517h1v1h-1zM843 517h1v1h-1zM853 517h1v1h-1zM864 517h1v1h-1zM874 517h1v1h-1zM884 517h1v1h-1zM894 517h1v1h-1zM905 517h1v1h-1zM915 517h1v1h-1zM925 517h1v1h-1zM935 517h1v1h-1zM946 517h1v1h-1zM956 517h1v1h-1zM966 517h1v1h-1zM976 517h1v1h-1zM987 517h1v1h-1zM997 517h1v1h-1zM1007 517h1v1h-1zM1017 517h1v1h-1zM1028 517h1v1h-1zM1038 517h1v1h-1zM1048 517h1v1h-1zM1058 517h1v1h-1zM1069 517h1v1h-1zM1079 517h1v1h-1zM1089 517h1v1h-1zM1099 517h1v1h-1zM1110 517h1v1h-1zM1120 517h1v1h-1zM1130 517h1v1h-1zM95 506h1v1h-1zM105 506h1v1h-1zM115 506h1v1h-1zM126 506h1v1h-1zM136 506h1v1h-1zM146 506h1v1h-1zM156 506h1v1h-1zM167 506h1v1h-1zM177 506h1v1h-1zM187 506h1v1h-1zM197 506h1v1h-1zM208 506h1v1h-1zM218 506h1v1h-1zM228 506h1v1h-1zM238 506h1v1h-1zM249 506h1v1h-1zM259 506h1v1h-1zM269 506h1v1h-1zM279 506h1v1h-1zM290 506h1v1h-1zM300 506h1v1h-1zM310 506h1v1h-1zM320 506h1v1h-1zM331 506h1v1h-1zM341 506h1v1h-1zM351 506h1v1h-1zM361 506h1v1h-1zM372 506h1v1h-1zM382 506h1v1h-1zM392 506h1v1h-1zM402 506h1v1h-1zM413 506h1v1h-1zM423 506h1v1h-1zM433 506h1v1h-1zM443 506h1v1h-1zM454 506h1v1h-1zM464 506h1v1h-1zM474 506h1v1h-1zM484 506h1v1h-1zM495 506h1v1h-1zM505 506h1v1h-1zM515 506h1v1h-1zM525 506h1v1h-1zM536 506h1v1h-1zM546 506h1v1h-1zM556 506h1v1h-1zM566 506h1v1h-1zM577 506h1v1h-1zM587 506h1v1h-1zM597 506h1v1h-1zM607 506h1v1h-1zM618 506h1v1h-1zM628 506h1v1h-1zM638 506h1v1h-1zM648 506h1v1h-1zM659 506h1v1h-1zM669 506h1v1h-1zM679 506h1v1h-1zM689 506h1v1h-1zM700 506h1v1h-1zM710 506h1v1h-1zM720 506h1v1h-1zM730 506h1v1h-1zM741 506h1v1h-1zM751 506h1v1h-1zM761 506h1v1h-1zM771 506h1v1h-1zM782 506h1v1h-1zM792 506h1v1h-1zM802 506h1v1h-1zM812 506h1v1h-1zM823 506h1v1h-1zM833 506h1v1h-1zM843 506h1v1h-1zM853 506h1v1h-1zM864 506h1v1h-1zM874 506h1v1h-1zM884 506h1v1h-1zM894 506h1v1h-1zM905 506h1v1h-1zM915 506h1v1h-1zM925 506h1v1h-1zM935 506h1v1h-1zM946 506h1v1h-1zM956 506h1v1h-1zM966 506h1v1h-1zM976 506h1v1h-1zM987 506h1v1h-1zM997 506h1v1h-1zM1007 506h1v1h-1zM1017 506h1v1h-1zM1028 506h1v1h-1zM1038 506h1v1h-1zM1048 506h1v1h-1zM1058 506h1v1h-1zM1069 506h1v1h-1zM1079 506h1v1h-1zM1089 506h1v1h-1zM1099 506h1v1h-1zM1110 506h1v1h-1zM1120 506h1v1h-1zM1130 506h1v1h-1zM95 496h1v1h-1zM105 496h1v1h-1zM115 496h1v1h-1zM126 496h1v1h-1zM136 496h1v1h-1zM146 496h1v1h-1zM156 496h1v1h-1zM167 496h1v1h-1zM177 496h1v1h-1zM187 496h1v1h-1zM197 496h1v1h-1zM208 496h1v1h-1zM218 496h1v1h-1zM228 496h1v1h-1zM238 496h1v1h-1zM249 496h1v1h-1zM259 496h1v1h-1zM269 496h1v1h-1zM279 496h1v1h-1zM290 496h1v1h-1zM300 496h1v1h-1zM310 496h1v1h-1zM320 496h1v1h-1zM331 496h1v1h-1zM341 496h1v1h-1zM351 496h1v1h-1zM361 496h1v1h-1zM372 496h1v1h-1zM382 496h1v1h-1zM392 496h1v1h-1zM402 496h1v1h-1zM413 496h1v1h-1zM423 496h1v1h-1zM433 496h1v1h-1zM443 496h1v1h-1zM454 496h1v1h-1zM464 496h1v1h-1zM474 496h1v1h-1zM484 496h1v1h-1zM495 496h1v1h-1zM505 496h1v1h-1zM515 496h1v1h-1zM525 496h1v1h-1zM536 496h1v1h-1zM546 496h1v1h-1zM556 496h1v1h-1zM566 496h1v1h-1zM577 496h1v1h-1zM587 496h1v1h-1zM597 496h1v1h-1zM607 496h1v1h-1zM618 496h1v1h-1zM628 496h1v1h-1zM638 496h1v1h-1zM648 496h1v1h-1zM659 496h1v1h-1zM669 496h1v1h-1zM679 496h1v1h-1zM689 496h1v1h-1zM700 496h1v1h-1zM710 496h1v1h-1zM720 496h1v1h-1zM730 496h1v1h-1zM741 496h1v1h-1zM751 496h1v1h-1zM761 496h1v1h-1zM771 496h1v1h-1zM782 496h1v1h-1zM792 496h1v1h-1zM802 496h1v1h-1zM812 496h1v1h-1zM823 496h1v1h-1zM833 496h1v1h-1zM843 496h1v1h-1zM853 496h1v1h-1zM864 496h1v1h-1zM874 496h1v1h-1zM884 496h1v1h-1zM894 496h1v1h-1zM905 496h1v1h-1zM915 496h1v1h-1zM925 496h1v1h-1zM935 496h1v1h-1zM946 496h1v1h-1zM956 496h1v1h-1zM966 496h1v1h-1zM976 496h1v1h-1zM987 496h1v1h-1zM997 496h1v1h-1zM1007 496h1v1h-1zM1017 496h1v1h-1zM1028 496h1v1h-1zM1038 496h1v1h-1zM1048 496h1v1h-1zM1058 496h1v1h-1zM1069 496h1v1h-1zM1079 496h1v1h-1zM1089 496h1v1h-1zM1099 496h1v1h-1zM1110 496h1v1h-1zM1120 496h1v1h-1zM1130 496h1v1h-1zM95 486h1v1h-1zM105 486h1v1h-1zM115 486h1v1h-1zM126 486h1v1h-1zM136 486h1v1h-1zM146 486h1v1h-1zM156 486h1v1h-1zM167 486h1v1h-1zM177 486h1v1h-1zM187 486h1v1h-1zM197 486h1v1h-1zM208 486h1v1h-1zM218 486h1v1h-1zM228 486h1v1h-1zM238 486h1v1h-1zM249 486h1v1h-1zM259 486h1v1h-1zM269 486h1v1h-1zM279 486h1v1h-1zM290 486h1v1h-1zM300 486h1v1h-1zM310 486h1v1h-1zM320 486h1v1h-1zM331 486h1v1h-1zM341 486h1v1h-1zM351 486h1v1h-1zM361 486h1v1h-1zM372 486h1v1h-1zM382 486h1v1h-1zM392 486h1v1h-1zM402 486h1v1h-1zM413 486h1v1h-1zM423 486h1v1h-1zM433 486h1v1h-1zM443 486h1v1h-1zM454 486h1v1h-1zM464 486h1v1h-1zM474 486h1v1h-1zM484 486h1v1h-1zM495 486h1v1h-1zM505 486h1v1h-1zM515 486h1v1h-1zM525 486h1v1h-1zM536 486h1v1h-1zM546 486h1v1h-1zM556 486h1v1h-1zM566 486h1v1h-1zM577 486h1v1h-1zM587 486h1v1h-1zM597 486h1v1h-1zM607 486h1v1h-1zM618 486h1v1h-1zM628 486h1v1h-1zM638 486h1v1h-1zM648 486h1v1h-1zM659 486h1v1h-1zM669 486h1v1h-1zM679 486h1v1h-1zM689 486h1v1h-1zM700 486h1v1h-1zM710 486h1v1h-1zM720 486h1v1h-1zM730 486h1v1h-1zM741 486h1v1h-1zM751 486h1v1h-1zM761 486h1v1h-1zM771 486h1v1h-1zM782 486h1v1h-1zM792 486h1v1h-1zM802 486h1v1h-1zM812 486h1v1h-1zM823 486h1v1h-1zM833 486h1v1h-1zM843 486h1v1h-1zM853 486h1v1h-1zM864 486h1v1h-1zM874 486h1v1h-1zM884 486h1v1h-1zM894 486h1v1h-1zM905 486h1v1h-1zM915 486h1v1h-1zM925 486h1v1h-1zM935 486h1v1h-1zM946 486h1v1h-1zM956 486h1v1h-1zM966 486h1v1h-1zM976 486h1v1h-1zM987 486h1v1h-1zM997 486h1v1h-1zM1007 486h1v1h-1zM1017 486h1v1h-1zM1028 486h1v1h-1zM1038 486h1v1h-1zM1048 486h1v1h-1zM1058 486h1v1h-1zM1069 486h1v1h-1zM1079 486h1v1h-1zM1089 486h1v1h-1zM1099 486h1v1h-1zM1110 486h1v1h-1zM1120 486h1v1h-1zM1130 486h1v1h-1zM95 476h1v1h-1zM105 476h1v1h-1zM115 476h1v1h-1zM126 476h1v1h-1zM136 476h1v1h-1zM146 476h1v1h-1zM156 476h1v1h-1zM167 476h1v1h-1zM177 476h1v1h-1zM187 476h1v1h-1zM197 476h1v1h-1zM208 476h1v1h-1zM218 476h1v1h-1zM228 476h1v1h-1zM238 476h1v1h-1zM249 476h1v1h-1zM259 476h1v1h-1zM269 476h1v1h-1zM279 476h1v1h-1zM290 476h1v1h-1zM300 476h1v1h-1zM310 476h1v1h-1zM320 476h1v1h-1zM331 476h1v1h-1zM341 476h1v1h-1zM351 476h1v1h-1zM361 476h1v1h-1zM372 476h1v1h-1zM382 476h1v1h-1zM392 476h1v1h-1zM402 476h1v1h-1zM413 476h1v1h-1zM423 476h1v1h-1zM433 476h1v1h-1zM443 476h1v1h-1zM454 476h1v1h-1zM464 476h1v1h-1zM474 476h1v1h-1zM484 476h1v1h-1zM495 476h1v1h-1zM505 476h1v1h-1zM515 476h1v1h-1zM525 476h1v1h-1zM536 476h1v1h-1zM546 476h1v1h-1zM556 476h1v1h-1zM566 476h1v1h-1zM577 476h1v1h-1zM587 476h1v1h-1zM597 476h1v1h-1zM607 476h1v1h-1zM618 476h1v1h-1zM628 476h1v1h-1zM638 476h1v1h-1zM648 476h1v1h-1zM659 476h1v1h-1zM669 476h1v1h-1zM679 476h1v1h-1zM689 476h1v1h-1zM700 476h1v1h-1zM710 476h1v1h-1zM720 476h1v1h-1zM730 476h1v1h-1zM741 476h1v1h-1zM751 476h1v1h-1zM761 476h1v1h-1zM771 476h1v1h-1zM782 476h1v1h-1zM792 476h1v1h-1zM802 476h1v1h-1zM812 476h1v1h-1zM823 476h1v1h-1zM833 476h1v1h-1zM843 476h1v1h-1zM853 476h1v1h-1zM864 476h1v1h-1zM874 476h1v1h-1zM884 476h1v1h-1zM894 476h1v1h-1zM905 476h1v1h-1zM915 476h1v1h-1zM925 476h1v1h-1zM935 476h1v1h-1zM946 476h1v1h-1zM956 476h1v1h-1zM966 476h1v1h-1zM976 476h1v1h-1zM987 476h1v1h-1zM997 476h1v1h-1zM1007 476h1v1h-1zM1017 476h1v1h-1zM1028 476h1v1h-1zM1038 476h1v1h-1zM1048 476h1v1h-1zM1058 476h1v1h-1zM1069 476h1v1h-1zM1079 476h1v1h-1zM1089 476h1v1h-1zM1099 476h1v1h-1zM1110 476h1v1h-1zM1120 476h1v1h-1zM1130 476h1v1h-1zM95 466h1v1h-1zM105 466h1v1h-1zM115 466h1v1h-1zM126 466h1v1h-1zM136 466h1v1h-1zM146 466h1v1h-1zM156 466h1v1h-1zM167 466h1v1h-1zM177 466h1v1h-1zM187 466h1v1h-1zM197 466h1v1h-1zM208 466h1v1h-1zM218 466h1v1h-1zM228 466h1v1h-1zM238 466h1v1h-1zM249 466h1v1h-1zM259 466h1v1h-1zM269 466h1v1h-1zM279 466h1v1h-1zM290 466h1v1h-1zM300 466h1v1h-1zM310 466h1v1h-1zM320 466h1v1h-1zM331 466h1v1h-1zM341 466h1v1h-1zM351 466h1v1h-1zM361 466h1v1h-1zM372 466h1v1h-1zM382 466h1v1h-1zM392 466h1v1h-1zM402 466h1v1h-1zM413 466h1v1h-1zM423 466h1v1h-1zM433 466h1v1h-1zM443 466h1v1h-1zM454 466h1v1h-1zM464 466h1v1h-1zM474 466h1v1h-1zM484 466h1v1h-1zM495 466h1v1h-1zM505 466h1v1h-1zM515 466h1v1h-1zM525 466h1v1h-1zM536 466h1v1h-1zM546 466h1v1h-1zM556 466h1v1h-1zM566 466h1v1h-1zM577 466h1v1h-1zM587 466h1v1h-1zM597 466h1v1h-1zM607 466h1v1h-1zM618 466h1v1h-1zM628 466h1v1h-1zM638 466h1v1h-1zM648 466h1v1h-1zM659 466h1v1h-1zM669 466h1v1h-1zM679 466h1v1h-1zM689 466h1v1h-1zM700 466h1v1h-1zM710 466h1v1h-1zM720 466h1v1h-1zM730 466h1v1h-1zM741 466h1v1h-1zM751 466h1v1h-1zM761 466h1v1h-1zM771 466h1v1h-1zM782 466h1v1h-1zM792 466h1v1h-1zM802 466h1v1h-1zM812 466h1v1h-1zM823 466h1v1h-1zM833 466h1v1h-1zM843 466h1v1h-1zM853 466h1v1h-1zM864 466h1v1h-1zM874 466h1v1h-1zM884 466h1v1h-1zM894 466h1v1h-1zM905 466h1v1h-1zM915 466h1v1h-1zM925 466h1v1h-1zM935 466h1v1h-1zM946 466h1v1h-1zM956 466h1v1h-1zM966 466h1v1h-1zM976 466h1v1h-1zM987 466h1v1h-1zM997 466h1v1h-1zM1007 466h1v1h-1zM1017 466h1v1h-1zM1028 466h1v1h-1zM1038 466h1v1h-1zM1048 466h1v1h-1zM1058 466h1v1h-1zM1069 466h1v1h-1zM1079 466h1v1h-1zM1089 466h1v1h-1zM1099 466h1v1h-1zM1110 466h1v1h-1zM1120 466h1v1h-1zM1130 466h1v1h-1zM95 455h1v1h-1zM105 455h1v1h-1zM115 455h1v1h-1zM126 455h1v1h-1zM136 455h1v1h-1zM146 455h1v1h-1zM156 455h1v1h-1zM167 455h1v1h-1zM177 455h1v1h-1zM187 455h1v1h-1zM197 455h1v1h-1zM208 455h1v1h-1zM218 455h1v1h-1zM228 455h1v1h-1zM238 455h1v1h-1zM249 455h1v1h-1zM259 455h1v1h-1zM269 455h1v1h-1zM279 455h1v1h-1zM290 455h1v1h-1zM300 455h1v1h-1zM310 455h1v1h-1zM320 455h1v1h-1zM331 455h1v1h-1zM341 455h1v1h-1zM351 455h1v1h-1zM361 455h1v1h-1zM372 455h1v1h-1zM382 455h1v1h-1zM392 455h1v1h-1zM402 455h1v1h-1zM413 455h1v1h-1zM423 455h1v1h-1zM433 455h1v1h-1zM443 455h1v1h-1zM454 455h1v1h-1zM464 455h1v1h-1zM474 455h1v1h-1zM484 455h1v1h-1zM495 455h1v1h-1zM505 455h1v1h-1zM515 455h1v1h-1zM525 455h1v1h-1zM536 455h1v1h-1zM546 455h1v1h-1zM556 455h1v1h-1zM566 455h1v1h-1zM577 455h1v1h-1zM587 455h1v1h-1zM597 455h1v1h-1zM607 455h1v1h-1zM618 455h1v1h-1zM628 455h1v1h-1zM638 455h1v1h-1zM648 455h1v1h-1zM659 455h1v1h-1zM669 455h1v1h-1zM679 455h1v1h-1zM689 455h1v1h-1zM700 455h1v1h-1zM710 455h1v1h-1zM720 455h1v1h-1zM730 455h1v1h-1zM741 455h1v1h-1zM751 455h1v1h-1zM761 455h1v1h-1zM771 455h1v1h-1zM782 455h1v1h-1zM792 455h1v1h-1zM802 455h1v1h-1zM812 455h1v1h-1zM823 455h1v1h-1zM833 455h1v1h-1zM843 455h1v1h-1zM853 455h1v1h-1zM864 455h1v1h-1zM874 455h1v1h-1zM884 455h1v1h-1zM894 455h1v1h-1zM905 455h1v1h-1zM915 455h1v1h-1zM925 455h1v1h-1zM935 455h1v1h-1zM946 455h1v1h-1zM956 455h1v1h-1zM966 455h1v1h-1zM976 455h1v1h-1zM987 455h1v1h-1zM997 455h1v1h-1zM1007 455h1v1h-1zM1017 455h1v1h-1zM1028 455h1v1h-1zM1038 455h1v1h-1zM1048 455h1v1h-1zM1058 455h1v1h-1zM1069 455h1v1h-1zM1079 455h1v1h-1zM1089 455h1v1h-1zM1099 455h1v1h-1zM1110 455h1v1h-1zM1120 455h1v1h-1zM1130 455h1v1h-1zM95 445h1v1h-1zM105 445h1v1h-1zM115 445h1v1h-1zM126 445h1v1h-1zM136 445h1v1h-1zM146 445h1v1h-1zM156 445h1v1h-1zM167 445h1v1h-1zM177 445h1v1h-1zM187 445h1v1h-1zM197 445h1v1h-1zM208 445h1v1h-1zM218 445h1v1h-1zM228 445h1v1h-1zM238 445h1v1h-1zM249 445h1v1h-1zM259 445h1v1h-1zM269 445h1v1h-1zM279 445h1v1h-1zM290 445h1v1h-1zM300 445h1v1h-1zM310 445h1v1h-1zM320 445h1v1h-1zM331 445h1v1h-1zM341 445h1v1h-1zM351 445h1v1h-1zM361 445h1v1h-1zM372 445h1v1h-1zM382 445h1v1h-1zM392 445h1v1h-1zM402 445h1v1h-1zM413 445h1v1h-1zM423 445h1v1h-1zM433 445h1v1h-1zM443 445h1v1h-1zM454 445h1v1h-1zM464 445h1v1h-1zM474 445h1v1h-1zM484 445h1v1h-1zM495 445h1v1h-1zM505 445h1v1h-1zM515 445h1v1h-1zM525 445h1v1h-1zM536 445h1v1h-1zM546 445h1v1h-1zM556 445h1v1h-1zM566 445h1v1h-1zM577 445h1v1h-1zM587 445h1v1h-1zM597 445h1v1h-1zM607 445h1v1h-1zM618 445h1v1h-1zM628 445h1v1h-1zM638 445h1v1h-1zM648 445h1v1h-1zM659 445h1v1h-1zM669 445h1v1h-1zM679 445h1v1h-1zM689 445h1v1h-1zM700 445h1v1h-1zM710 445h1v1h-1zM720 445h1v1h-1zM730 445h1v1h-1zM741 445h1v1h-1zM751 445h1v1h-1zM761 445h1v1h-1zM771 445h1v1h-1zM782 445h1v1h-1zM792 445h1v1h-1zM802 445h1v1h-1zM812 445h1v1h-1zM823 445h1v1h-1zM833 445h1v1h-1zM843 445h1v1h-1zM853 445h1v1h-1zM864 445h1v1h-1zM874 445h1v1h-1zM884 445h1v1h-1zM894 445h1v1h-1zM905 445h1v1h-1zM915 445h1v1h-1zM925 445h1v1h-1zM935 445h1v1h-1zM946 445h1v1h-1zM956 445h1v1h-1zM966 445h1v1h-1zM976 445h1v1h-1zM987 445h1v1h-1zM997 445h1v1h-1zM1007 445h1v1h-1zM1017 445h1v1h-1zM1028 445h1v1h-1zM1038 445h1v1h-1zM1048 445h1v1h-1zM1058 445h1v1h-1zM1069 445h1v1h-1zM1079 445h1v1h-1zM1089 445h1v1h-1zM1099 445h1v1h-1zM1110 445h1v1h-1zM1120 445h1v1h-1zM1130 445h1v1h-1zM95 435h1v1h-1zM105 435h1v1h-1zM115 435h1v1h-1zM126 435h1v1h-1zM136 435h1v1h-1zM146 435h1v1h-1zM156 435h1v1h-1zM167 435h1v1h-1zM177 435h1v1h-1zM187 435h1v1h-1zM197 435h1v1h-1zM208 435h1v1h-1zM218 435h1v1h-1zM228 435h1v1h-1zM238 435h1v1h-1zM249 435h1v1h-1zM259 435h1v1h-1zM269 435h1v1h-1zM279 435h1v1h-1zM290 435h1v1h-1zM300 435h1v1h-1zM310 435h1v1h-1zM320 435h1v1h-1zM331 435h1v1h-1zM341 435h1v1h-1zM351 435h1v1h-1zM361 435h1v1h-1zM372 435h1v1h-1zM382 435h1v1h-1zM392 435h1v1h-1zM402 435h1v1h-1zM413 435h1v1h-1zM423 435h1v1h-1zM433 435h1v1h-1zM443 435h1v1h-1zM454 435h1v1h-1zM464 435h1v1h-1zM474 435h1v1h-1zM484 435h1v1h-1zM495 435h1v1h-1zM505 435h1v1h-1zM515 435h1v1h-1zM525 435h1v1h-1zM536 435h1v1h-1zM546 435h1v1h-1zM556 435h1v1h-1zM566 435h1v1h-1zM577 435h1v1h-1zM587 435h1v1h-1zM597 435h1v1h-1zM607 435h1v1h-1zM618 435h1v1h-1zM628 435h1v1h-1zM638 435h1v1h-1zM648 435h1v1h-1zM659 435h1v1h-1zM669 435h1v1h-1zM679 435h1v1h-1zM689 435h1v1h-1zM700 435h1v1h-1zM710 435h1v1h-1zM720 435h1v1h-1zM730 435h1v1h-1zM741 435h1v1h-1zM751 435h1v1h-1zM761 435h1v1h-1zM771 435h1v1h-1zM782 435h1v1h-1zM792 435h1v1h-1zM802 435h1v1h-1zM812 435h1v1h-1zM823 435h1v1h-1zM833 435h1v1h-1zM843 435h1v1h-1zM853 435h1v1h-1zM864 435h1v1h-1zM874 435h1v1h-1zM884 435h1v1h-1zM894 435h1v1h-1zM905 435h1v1h-1zM915 435h1v1h-1zM925 435h1v1h-1zM935 435h1v1h-1zM946 435h1v1h-1zM956 435h1v1h-1zM966 435h1v1h-1zM976 435h1v1h-1zM987 435h1v1h-1zM997 435h1v1h-1zM1007 435h1v1h-1zM1017 435h1v1h-1zM1028 435h1v1h-1zM1038 435h1v1h-1zM1048 435h1v1h-1zM1058 435h1v1h-1zM1069 435h1v1h-1zM1079 435h1v1h-1zM1089 435h1v1h-1zM1099 435h1v1h-1zM1110 435h1v1h-1zM1120 435h1v1h-1zM1130 435h1v1h-1zM95 424h1v1h-1zM105 424h1v1h-1zM115 424h1v1h-1zM126 424h1v1h-1zM136 424h1v1h-1zM146 424h1v1h-1zM156 424h1v1h-1zM167 424h1v1h-1zM177 424h1v1h-1zM187 424h1v1h-1zM197 424h1v1h-1zM208 424h1v1h-1zM218 424h1v1h-1zM228 424h1v1h-1zM238 424h1v1h-1zM249 424h1v1h-1zM259 424h1v1h-1zM269 424h1v1h-1zM279 424h1v1h-1zM290 424h1v1h-1zM300 424h1v1h-1zM310 424h1v1h-1zM320 424h1v1h-1zM331 424h1v1h-1zM341 424h1v1h-1zM351 424h1v1h-1zM361 424h1v1h-1zM372 424h1v1h-1zM382 424h1v1h-1zM392 424h1v1h-1zM402 424h1v1h-1zM413 424h1v1h-1zM423 424h1v1h-1zM433 424h1v1h-1zM443 424h1v1h-1zM454 424h1v1h-1zM464 424h1v1h-1zM474 424h1v1h-1zM484 424h1v1h-1zM495 424h1v1h-1zM505 424h1v1h-1zM515 424h1v1h-1zM525 424h1v1h-1zM536 424h1v1h-1zM546 424h1v1h-1zM556 424h1v1h-1zM566 424h1v1h-1zM577 424h1v1h-1zM587 424h1v1h-1zM597 424h1v1h-1zM607 424h1v1h-1zM618 424h1v1h-1zM628 424h1v1h-1zM638 424h1v1h-1zM648 424h1v1h-1zM659 424h1v1h-1zM669 424h1v1h-1zM679 424h1v1h-1zM689 424h1v1h-1zM700 424h1v1h-1zM710 424h1v1h-1zM720 424h1v1h-1zM730 424h1v1h-1zM741 424h1v1h-1zM751 424h1v1h-1zM761 424h1v1h-1zM771 424h1v1h-1zM782 424h1v1h-1zM792 424h1v1h-1zM802 424h1v1h-1zM812 424h1v1h-1zM823 424h1v1h-1zM833 424h1v1h-1zM843 424h1v1h-1zM853 424h1v1h-1zM864 424h1v1h-1zM874 424h1v1h-1zM884 424h1v1h-1zM894 424h1v1h-1zM905 424h1v1h-1zM915 424h1v1h-1zM925 424h1v1h-1zM935 424h1v1h-1zM946 424h1v1h-1zM956 424h1v1h-1zM966 424h1v1h-1zM976 424h1v1h-1zM987 424h1v1h-1zM997 424h1v1h-1zM1007 424h1v1h-1zM1017 424h1v1h-1zM1028 424h1v1h-1zM1038 424h1v1h-1zM1048 424h1v1h-1zM1058 424h1v1h-1zM1069 424h1v1h-1zM1079 424h1v1h-1zM1089 424h1v1h-1zM1099 424h1v1h-1zM1110 424h1v1h-1zM1120 424h1v1h-1zM1130 424h1v1h-1zM95 414h1v1h-1zM105 414h1v1h-1zM115 414h1v1h-1zM126 414h1v1h-1zM136 414h1v1h-1zM146 414h1v1h-1zM156 414h1v1h-1zM167 414h1v1h-1zM177 414h1v1h-1zM187 414h1v1h-1zM197 414h1v1h-1zM208 414h1v1h-1zM218 414h1v1h-1zM228 414h1v1h-1zM238 414h1v1h-1zM249 414h1v1h-1zM259 414h1v1h-1zM269 414h1v1h-1zM279 414h1v1h-1zM290 414h1v1h-1zM300 414h1v1h-1zM310 414h1v1h-1zM320 414h1v1h-1zM331 414h1v1h-1zM341 414h1v1h-1zM351 414h1v1h-1zM361 414h1v1h-1zM372 414h1v1h-1zM382 414h1v1h-1zM392 414h1v1h-1zM402 414h1v1h-1zM413 414h1v1h-1zM423 414h1v1h-1zM433 414h1v1h-1zM443 414h1v1h-1zM454 414h1v1h-1zM464 414h1v1h-1zM474 414h1v1h-1zM484 414h1v1h-1zM495 414h1v1h-1zM505 414h1v1h-1zM515 414h1v1h-1zM525 414h1v1h-1zM536 414h1v1h-1zM546 414h1v1h-1zM556 414h1v1h-1zM566 414h1v1h-1zM577 414h1v1h-1zM587 414h1v1h-1zM597 414h1v1h-1zM607 414h1v1h-1zM618 414h1v1h-1zM628 414h1v1h-1zM638 414h1v1h-1zM648 414h1v1h-1zM659 414h1v1h-1zM669 414h1v1h-1zM679 414h1v1h-1zM689 414h1v1h-1zM700 414h1v1h-1zM710 414h1v1h-1zM720 414h1v1h-1zM730 414h1v1h-1zM741 414h1v1h-1zM751 414h1v1h-1zM761 414h1v1h-1zM771 414h1v1h-1zM782 414h1v1h-1zM792 414h1v1h-1zM802 414h1v1h-1zM812 414h1v1h-1zM823 414h1v1h-1zM833 414h1v1h-1zM843 414h1v1h-1zM853 414h1v1h-1zM864 414h1v1h-1zM874 414h1v1h-1zM884 414h1v1h-1zM894 414h1v1h-1zM905 414h1v1h-1zM915 414h1v1h-1zM925 414h1v1h-1zM935 414h1v1h-1zM946 414h1v1h-1zM956 414h1v1h-1zM966 414h1v1h-1zM976 414h1v1h-1zM987 414h1v1h-1zM997 414h1v1h-1zM1007 414h1v1h-1zM1017 414h1v1h-1zM1028 414h1v1h-1zM1038 414h1v1h-1zM1048 414h1v1h-1zM1058 414h1v1h-1zM1069 414h1v1h-1zM1079 414h1v1h-1zM1089 414h1v1h-1zM1099 414h1v1h-1zM1110 414h1v1h-1zM1120 414h1v1h-1zM1130 414h1v1h-1zM95 404h1v1h-1zM105 404h1v1h-1zM115 404h1v1h-1zM126 404h1v1h-1zM136 404h1v1h-1zM146 404h1v1h-1zM156 404h1v1h-1zM167 404h1v1h-1zM177 404h1v1h-1zM187 404h1v1h-1zM197 404h1v1h-1zM208 404h1v1h-1zM218 404h1v1h-1zM228 404h1v1h-1zM238 404h1v1h-1zM249 404h1v1h-1zM259 404h1v1h-1zM269 404h1v1h-1zM279 404h1v1h-1zM290 404h1v1h-1zM300 404h1v1h-1zM310 404h1v1h-1zM320 404h1v1h-1zM331 404h1v1h-1zM341 404h1v1h-1zM351 404h1v1h-1zM361 404h1v1h-1zM372 404h1v1h-1zM382 404h1v1h-1zM392 404h1v1h-1zM402 404h1v1h-1zM413 404h1v1h-1zM423 404h1v1h-1zM433 404h1v1h-1zM443 404h1v1h-1zM454 404h1v1h-1zM464 404h1v1h-1zM474 404h1v1h-1zM484 404h1v1h-1zM495 404h1v1h-1zM505 404h1v1h-1zM515 404h1v1h-1zM525 404h1v1h-1zM536 404h1v1h-1zM546 404h1v1h-1zM556 404h1v1h-1zM566 404h1v1h-1zM577 404h1v1h-1zM587 404h1v1h-1zM597 404h1v1h-1zM607 404h1v1h-1zM618 404h1v1h-1zM628 404h1v1h-1zM638 404h1v1h-1zM648 404h1v1h-1zM659 404h1v1h-1zM669 404h1v1h-1zM679 404h1v1h-1zM689 404h1v1h-1zM700 404h1v1h-1zM710 404h1v1h-1zM720 404h1v1h-1zM730 404h1v1h-1zM741 404h1v1h-1zM751 404h1v1h-1zM761 404h1v1h-1zM771 404h1v1h-1zM782 404h1v1h-1zM792 404h1v1h-1zM802 404h1v1h-1zM812 404h1v1h-1zM823 404h1v1h-1zM833 404h1v1h-1zM843 404h1v1h-1zM853 404h1v1h-1zM864 404h1v1h-1zM874 404h1v1h-1zM884 404h1v1h-1zM894 404h1v1h-1zM905 404h1v1h-1zM915 404h1v1h-1zM925 404h1v1h-1zM935 404h1v1h-1zM946 404h1v1h-1zM956 404h1v1h-1zM966 404h1v1h-1zM976 404h1v1h-1zM987 404h1v1h-1zM997 404h1v1h-1zM1007 404h1v1h-1zM1017 404h1v1h-1zM1028 404h1v1h-1zM1038 404h1v1h-1zM1048 404h1v1h-1zM1058 404h1v1h-1zM1069 404h1v1h-1zM1079 404h1v1h-1zM1089 404h1v1h-1zM1099 404h1v1h-1zM1110 404h1v1h-1zM1120 404h1v1h-1zM1130 404h1v1h-1zM95 394h1v1h-1zM105 394h1v1h-1zM115 394h1v1h-1zM126 394h1v1h-1zM136 394h1v1h-1zM146 394h1v1h-1zM156 394h1v1h-1zM167 394h1v1h-1zM177 394h1v1h-1zM187 394h1v1h-1zM197 394h1v1h-1zM208 394h1v1h-1zM218 394h1v1h-1zM228 394h1v1h-1zM238 394h1v1h-1zM249 394h1v1h-1zM259 394h1v1h-1zM269 394h1v1h-1zM279 394h1v1h-1zM290 394h1v1h-1zM300 394h1v1h-1zM310 394h1v1h-1zM320 394h1v1h-1zM331 394h1v1h-1zM341 394h1v1h-1zM351 394h1v1h-1zM361 394h1v1h-1zM372 394h1v1h-1zM382 394h1v1h-1zM392 394h1v1h-1zM402 394h1v1h-1zM413 394h1v1h-1zM423 394h1v1h-1zM433 394h1v1h-1zM443 394h1v1h-1zM454 394h1v1h-1zM464 394h1v1h-1zM474 394h1v1h-1zM484 394h1v1h-1zM495 394h1v1h-1zM505 394h1v1h-1zM515 394h1v1h-1zM525 394h1v1h-1zM536 394h1v1h-1zM546 394h1v1h-1zM556 394h1v1h-1zM566 394h1v1h-1zM577 394h1v1h-1zM587 394h1v1h-1zM597 394h1v1h-1zM607 394h1v1h-1zM618 394h1v1h-1zM628 394h1v1h-1zM638 394h1v1h-1zM648 394h1v1h-1zM659 394h1v1h-1zM669 394h1v1h-1zM679 394h1v1h-1zM689 394h1v1h-1zM700 394h1v1h-1zM710 394h1v1h-1zM720 394h1v1h-1zM730 394h1v1h-1zM741 394h1v1h-1zM751 394h1v1h-1zM761 394h1v1h-1zM771 394h1v1h-1zM782 394h1v1h-1zM792 394h1v1h-1zM802 394h1v1h-1zM812 394h1v1h-1zM823 394h1v1h-1zM833 394h1v1h-1zM843 394h1v1h-1zM853 394h1v1h-1zM864 394h1v1h-1zM874 394h1v1h-1zM884 394h1v1h-1zM894 394h1v1h-1zM905 394h1v1h-1zM915 394h1v1h-1zM925 394h1v1h-1zM935 394h1v1h-1zM946 394h1v1h-1zM956 394h1v1h-1zM966 394h1v1h-1zM976 394h1v1h-1zM987 394h1v1h-1zM997 394h1v1h-1zM1007 394h1v1h-1zM1017 394h1v1h-1zM1028 394h1v1h-1zM1038 394h1v1h-1zM1048 394h1v1h-1zM1058 394h1v1h-1zM1069 394h1v1h-1zM1079 394h1v1h-1zM1089 394h1v1h-1zM1099 394h1v1h-1zM1110 394h1v1h-1zM1120 394h1v1h-1zM1130 394h1v1h-1zM95 384h1v1h-1zM105 384h1v1h-1zM115 384h1v1h-1zM126 384h1v1h-1zM136 384h1v1h-1zM146 384h1v1h-1zM156 384h1v1h-1zM167 384h1v1h-1zM177 384h1v1h-1zM187 384h1v1h-1zM197 384h1v1h-1zM208 384h1v1h-1zM218 384h1v1h-1zM228 384h1v1h-1zM238 384h1v1h-1zM249 384h1v1h-1zM259 384h1v1h-1zM269 384h1v1h-1zM279 384h1v1h-1zM290 384h1v1h-1zM300 384h1v1h-1zM310 384h1v1h-1zM320 384h1v1h-1zM331 384h1v1h-1zM341 384h1v1h-1zM351 384h1v1h-1zM361 384h1v1h-1zM372 384h1v1h-1zM382 384h1v1h-1zM392 384h1v1h-1zM402 384h1v1h-1zM413 384h1v1h-1zM423 384h1v1h-1zM433 384h1v1h-1zM443 384h1v1h-1zM454 384h1v1h-1zM464 384h1v1h-1zM474 384h1v1h-1zM484 384h1v1h-1zM495 384h1v1h-1zM505 384h1v1h-1zM515 384h1v1h-1zM525 384h1v1h-1zM536 384h1v1h-1zM546 384h1v1h-1zM556 384h1v1h-1zM566 384h1v1h-1zM577 384h1v1h-1zM587 384h1v1h-1zM597 384h1v1h-1zM607 384h1v1h-1zM618 384h1v1h-1zM628 384h1v1h-1zM638 384h1v1h-1zM648 384h1v1h-1zM659 384h1v1h-1zM669 384h1v1h-1zM679 384h1v1h-1zM689 384h1v1h-1zM700 384h1v1h-1zM710 384h1v1h-1zM720 384h1v1h-1zM730 384h1v1h-1zM741 384h1v1h-1zM751 384h1v1h-1zM761 384h1v1h-1zM771 384h1v1h-1zM782 384h1v1h-1zM792 384h1v1h-1zM802 384h1v1h-1zM812 384h1v1h-1zM823 384h1v1h-1zM833 384h1v1h-1zM843 384h1v1h-1zM853 384h1v1h-1zM864 384h1v1h-1zM874 384h1v1h-1zM884 384h1v1h-1zM894 384h1v1h-1zM905 384h1v1h-1zM915 384h1v1h-1zM925 384h1v1h-1zM935 384h1v1h-1zM946 384h1v1h-1zM956 384h1v1h-1zM966 384h1v1h-1zM976 384h1v1h-1zM987 384h1v1h-1zM997 384h1v1h-1zM1007 384h1v1h-1zM1017 384h1v1h-1zM1028 384h1v1h-1zM1038 384h1v1h-1zM1048 384h1v1h-1zM1058 384h1v1h-1zM1069 384h1v1h-1zM1079 384h1v1h-1zM1089 384h1v1h-1zM1099 384h1v1h-1zM1110 384h1v1h-1zM1120 384h1v1h-1zM1130 384h1v1h-1zM95 373h1v1h-1zM105 373h1v1h-1zM115 373h1v1h-1zM126 373h1v1h-1zM136 373h1v1h-1zM146 373h1v1h-1zM156 373h1v1h-1zM167 373h1v1h-1zM177 373h1v1h-1zM187 373h1v1h-1zM197 373h1v1h-1zM208 373h1v1h-1zM218 373h1v1h-1zM228 373h1v1h-1zM238 373h1v1h-1zM249 373h1v1h-1zM259 373h1v1h-1zM269 373h1v1h-1zM279 373h1v1h-1zM290 373h1v1h-1zM300 373h1v1h-1zM310 373h1v1h-1zM320 373h1v1h-1zM331 373h1v1h-1zM341 373h1v1h-1zM351 373h1v1h-1zM361 373h1v1h-1zM372 373h1v1h-1zM382 373h1v1h-1zM392 373h1v1h-1zM402 373h1v1h-1zM413 373h1v1h-1zM423 373h1v1h-1zM433 373h1v1h-1zM443 373h1v1h-1zM454 373h1v1h-1zM464 373h1v1h-1zM474 373h1v1h-1zM484 373h1v1h-1zM495 373h1v1h-1zM505 373h1v1h-1zM515 373h1v1h-1zM525 373h1v1h-1zM536 373h1v1h-1zM546 373h1v1h-1zM556 373h1v1h-1zM566 373h1v1h-1zM577 373h1v1h-1zM587 373h1v1h-1zM597 373h1v1h-1zM607 373h1v1h-1zM618 373h1v1h-1zM628 373h1v1h-1zM638 373h1v1h-1zM648 373h1v1h-1zM659 373h1v1h-1zM669 373h1v1h-1zM679 373h1v1h-1zM689 373h1v1h-1zM700 373h1v1h-1zM710 373h1v1h-1zM720 373h1v1h-1zM730 373h1v1h-1zM741 373h1v1h-1zM751 373h1v1h-1zM761 373h1v1h-1zM771 373h1v1h-1zM782 373h1v1h-1zM792 373h1v1h-1zM802 373h1v1h-1zM812 373h1v1h-1zM823 373h1v1h-1zM833 373h1v1h-1zM843 373h1v1h-1zM853 373h1v1h-1zM864 373h1v1h-1zM874 373h1v1h-1zM884 373h1v1h-1zM894 373h1v1h-1zM905 373h1v1h-1zM915 373h1v1h-1zM925 373h1v1h-1zM935 373h1v1h-1zM946 373h1v1h-1zM956 373h1v1h-1zM966 373h1v1h-1zM976 373h1v1h-1zM987 373h1v1h-1zM997 373h1v1h-1zM1007 373h1v1h-1zM1017 373h1v1h-1zM1028 373h1v1h-1zM1038 373h1v1h-1zM1048 373h1v1h-1zM1058 373h1v1h-1zM1069 373h1v1h-1zM1079 373h1v1h-1zM1089 373h1v1h-1zM1099 373h1v1h-1zM1110 373h1v1h-1zM1120 373h1v1h-1zM1130 373h1v1h-1zM95 363h1v1h-1zM105 363h1v1h-1zM115 363h1v1h-1zM126 363h1v1h-1zM136 363h1v1h-1zM146 363h1v1h-1zM156 363h1v1h-1zM167 363h1v1h-1zM177 363h1v1h-1zM187 363h1v1h-1zM197 363h1v1h-1zM208 363h1v1h-1zM218 363h1v1h-1zM228 363h1v1h-1zM238 363h1v1h-1zM249 363h1v1h-1zM259 363h1v1h-1zM269 363h1v1h-1zM279 363h1v1h-1zM290 363h1v1h-1zM300 363h1v1h-1zM310 363h1v1h-1zM320 363h1v1h-1zM331 363h1v1h-1zM341 363h1v1h-1zM351 363h1v1h-1zM361 363h1v1h-1zM372 363h1v1h-1zM382 363h1v1h-1zM392 363h1v1h-1zM402 363h1v1h-1zM413 363h1v1h-1zM423 363h1v1h-1zM433 363h1v1h-1zM443 363h1v1h-1zM454 363h1v1h-1zM464 363h1v1h-1zM474 363h1v1h-1zM484 363h1v1h-1zM495 363h1v1h-1zM505 363h1v1h-1zM515 363h1v1h-1zM525 363h1v1h-1zM536 363h1v1h-1zM546 363h1v1h-1zM556 363h1v1h-1zM566 363h1v1h-1zM577 363h1v1h-1zM587 363h1v1h-1zM597 363h1v1h-1zM607 363h1v1h-1zM618 363h1v1h-1zM628 363h1v1h-1zM638 363h1v1h-1zM648 363h1v1h-1zM659 363h1v1h-1zM669 363h1v1h-1zM679 363h1v1h-1zM689 363h1v1h-1zM700 363h1v1h-1zM710 363h1v1h-1zM720 363h1v1h-1zM730 363h1v1h-1zM741 363h1v1h-1zM751 363h1v1h-1zM761 363h1v1h-1zM771 363h1v1h-1zM782 363h1v1h-1zM792 363h1v1h-1zM802 363h1v1h-1zM812 363h1v1h-1zM823 363h1v1h-1zM833 363h1v1h-1zM843 363h1v1h-1zM853 363h1v1h-1zM864 363h1v1h-1zM874 363h1v1h-1zM884 363h1v1h-1zM894 363h1v1h-1zM905 363h1v1h-1zM915 363h1v1h-1zM925 363h1v1h-1zM935 363h1v1h-1zM946 363h1v1h-1zM956 363h1v1h-1zM966 363h1v1h-1zM976 363h1v1h-1zM987 363h1v1h-1zM997 363h1v1h-1zM1007 363h1v1h-1zM1017 363h1v1h-1zM1028 363h1v1h-1zM1038 363h1v1h-1zM1048 363h1v1h-1zM1058 363h1v1h-1zM1069 363h1v1h-1zM1079 363h1v1h-1zM1089 363h1v1h-1zM1099 363h1v1h-1zM1110 363h1v1h-1zM1120 363h1v1h-1zM1130 363h1v1h-1zM95 353h1v1h-1zM105 353h1v1h-1zM115 353h1v1h-1zM126 353h1v1h-1zM136 353h1v1h-1zM146 353h1v1h-1zM156 353h1v1h-1zM167 353h1v1h-1zM177 353h1v1h-1zM187 353h1v1h-1zM197 353h1v1h-1zM208 353h1v1h-1zM218 353h1v1h-1zM228 353h1v1h-1zM238 353h1v1h-1zM249 353h1v1h-1zM259 353h1v1h-1zM269 353h1v1h-1zM279 353h1v1h-1zM290 353h1v1h-1zM300 353h1v1h-1zM310 353h1v1h-1zM320 353h1v1h-1zM331 353h1v1h-1zM341 353h1v1h-1zM351 353h1v1h-1zM361 353h1v1h-1zM372 353h1v1h-1zM382 353h1v1h-1zM392 353h1v1h-1zM402 353h1v1h-1zM413 353h1v1h-1zM423 353h1v1h-1zM433 353h1v1h-1zM443 353h1v1h-1zM454 353h1v1h-1zM464 353h1v1h-1zM474 353h1v1h-1zM484 353h1v1h-1zM495 353h1v1h-1zM505 353h1v1h-1zM515 353h1v1h-1zM525 353h1v1h-1zM536 353h1v1h-1zM546 353h1v1h-1zM556 353h1v1h-1zM566 353h1v1h-1zM577 353h1v1h-1zM587 353h1v1h-1zM597 353h1v1h-1zM607 353h1v1h-1zM618 353h1v1h-1zM628 353h1v1h-1zM638 353h1v1h-1zM648 353h1v1h-1zM659 353h1v1h-1zM669 353h1v1h-1zM679 353h1v1h-1zM689 353h1v1h-1zM700 353h1v1h-1zM710 353h1v1h-1zM720 353h1v1h-1zM730 353h1v1h-1zM741 353h1v1h-1zM751 353h1v1h-1zM761 353h1v1h-1zM771 353h1v1h-1zM782 353h1v1h-1zM792 353h1v1h-1zM802 353h1v1h-1zM812 353h1v1h-1zM823 353h1v1h-1zM833 353h1v1h-1zM843 353h1v1h-1zM853 353h1v1h-1zM864 353h1v1h-1zM874 353h1v1h-1zM884 353h1v1h-1zM894 353h1v1h-1zM905 353h1v1h-1zM915 353h1v1h-1zM925 353h1v1h-1zM935 353h1v1h-1zM946 353h1v1h-1zM956 353h1v1h-1zM966 353h1v1h-1zM976 353h1v1h-1zM987 353h1v1h-1zM997 353h1v1h-1zM1007 353h1v1h-1zM1017 353h1v1h-1zM1028 353h1v1h-1zM1038 353h1v1h-1zM1048 353h1v1h-1zM1058 353h1v1h-1zM1069 353h1v1h-1zM1079 353h1v1h-1zM1089 353h1v1h-1zM1099 353h1v1h-1zM1110 353h1v1h-1zM1120 353h1v1h-1zM1130 353h1v1h-1zM95 342h1v1h-1zM105 342h1v1h-1zM115 342h1v1h-1zM126 342h1v1h-1zM136 342h1v1h-1zM146 342h1v1h-1zM156 342h1v1h-1zM167 342h1v1h-1zM177 342h1v1h-1zM187 342h1v1h-1zM197 342h1v1h-1zM208 342h1v1h-1zM218 342h1v1h-1zM228 342h1v1h-1zM238 342h1v1h-1zM249 342h1v1h-1zM259 342h1v1h-1zM269 342h1v1h-1zM279 342h1v1h-1zM290 342h1v1h-1zM300 342h1v1h-1zM310 342h1v1h-1zM320 342h1v1h-1zM331 342h1v1h-1zM341 342h1v1h-1zM351 342h1v1h-1zM361 342h1v1h-1zM372 342h1v1h-1zM382 342h1v1h-1zM392 342h1v1h-1zM402 342h1v1h-1zM413 342h1v1h-1zM423 342h1v1h-1zM433 342h1v1h-1zM443 342h1v1h-1zM454 342h1v1h-1zM464 342h1v1h-1zM474 342h1v1h-1zM484 342h1v1h-1zM495 342h1v1h-1zM505 342h1v1h-1zM515 342h1v1h-1zM525 342h1v1h-1zM536 342h1v1h-1zM546 342h1v1h-1zM556 342h1v1h-1zM566 342h1v1h-1zM577 342h1v1h-1zM587 342h1v1h-1zM597 342h1v1h-1zM607 342h1v1h-1zM618 342h1v1h-1zM628 342h1v1h-1zM638 342h1v1h-1zM648 342h1v1h-1zM659 342h1v1h-1zM669 342h1v1h-1zM679 342h1v1h-1zM689 342h1v1h-1zM700 342h1v1h-1zM710 342h1v1h-1zM720 342h1v1h-1zM730 342h1v1h-1zM741 342h1v1h-1zM751 342h1v1h-1zM761 342h1v1h-1zM771 342h1v1h-1zM782 342h1v1h-1zM792 342h1v1h-1zM802 342h1v1h-1zM812 342h1v1h-1zM823 342h1v1h-1zM833 342h1v1h-1zM843 342h1v1h-1zM853 342h1v1h-1zM864 342h1v1h-1zM874 342h1v1h-1zM884 342h1v1h-1zM894 342h1v1h-1zM905 342h1v1h-1zM915 342h1v1h-1zM925 342h1v1h-1zM935 342h1v1h-1zM946 342h1v1h-1zM956 342h1v1h-1zM966 342h1v1h-1zM976 342h1v1h-1zM987 342h1v1h-1zM997 342h1v1h-1zM1007 342h1v1h-1zM1017 342h1v1h-1zM1028 342h1v1h-1zM1038 342h1v1h-1zM1048 342h1v1h-1zM1058 342h1v1h-1zM1069 342h1v1h-1zM1079 342h1v1h-1zM1089 342h1v1h-1zM1099 342h1v1h-1zM1110 342h1v1h-1zM1120 342h1v1h-1zM1130 342h1v1h-1zM95 332h1v1h-1zM105 332h1v1h-1zM115 332h1v1h-1zM126 332h1v1h-1zM136 332h1v1h-1zM146 332h1v1h-1zM156 332h1v1h-1zM167 332h1v1h-1zM177 332h1v1h-1zM187 332h1v1h-1zM197 332h1v1h-1zM208 332h1v1h-1zM218 332h1v1h-1zM228 332h1v1h-1zM238 332h1v1h-1zM249 332h1v1h-1zM259 332h1v1h-1zM269 332h1v1h-1zM279 332h1v1h-1zM290 332h1v1h-1zM300 332h1v1h-1zM310 332h1v1h-1zM320 332h1v1h-1zM331 332h1v1h-1zM341 332h1v1h-1zM351 332h1v1h-1zM361 332h1v1h-1zM372 332h1v1h-1zM382 332h1v1h-1zM392 332h1v1h-1zM402 332h1v1h-1zM413 332h1v1h-1zM423 332h1v1h-1zM433 332h1v1h-1zM443 332h1v1h-1zM454 332h1v1h-1zM464 332h1v1h-1zM474 332h1v1h-1zM484 332h1v1h-1zM495 332h1v1h-1zM505 332h1v1h-1zM515 332h1v1h-1zM525 332h1v1h-1zM536 332h1v1h-1zM546 332h1v1h-1zM556 332h1v1h-1zM566 332h1v1h-1zM577 332h1v1h-1zM587 332h1v1h-1zM597 332h1v1h-1zM607 332h1v1h-1zM618 332h1v1h-1zM628 332h1v1h-1zM638 332h1v1h-1zM648 332h1v1h-1zM659 332h1v1h-1zM669 332h1v1h-1zM679 332h1v1h-1zM689 332h1v1h-1zM700 332h1v1h-1zM710 332h1v1h-1zM720 332h1v1h-1zM730 332h1v1h-1zM741 332h1v1h-1zM751 332h1v1h-1zM761 332h1v1h-1zM771 332h1v1h-1zM782 332h1v1h-1zM792 332h1v1h-1zM802 332h1v1h-1zM812 332h1v1h-1zM823 332h1v1h-1zM833 332h1v1h-1zM843 332h1v1h-1zM853 332h1v1h-1zM864 332h1v1h-1zM874 332h1v1h-1zM884 332h1v1h-1zM894 332h1v1h-1zM905 332h1v1h-1zM915 332h1v1h-1zM925 332h1v1h-1zM935 332h1v1h-1zM946 332h1v1h-1zM956 332h1v1h-1zM966 332h1v1h-1zM976 332h1v1h-1zM987 332h1v1h-1zM997 332h1v1h-1zM1007 332h1v1h-1zM1017 332h1v1h-1zM1028 332h1v1h-1zM1038 332h1v1h-1zM1048 332h1v1h-1zM1058 332h1v1h-1zM1069 332h1v1h-1zM1079 332h1v1h-1zM1089 332h1v1h-1zM1099 332h1v1h-1zM1110 332h1v1h-1zM1120 332h1v1h-1zM1130 332h1v1h-1zM95 322h1v1h-1zM105 322h1v1h-1zM115 322h1v1h-1zM126 322h1v1h-1zM136 322h1v1h-1zM146 322h1v1h-1zM156 322h1v1h-1zM167 322h1v1h-1zM177 322h1v1h-1zM187 322h1v1h-1zM197 322h1v1h-1zM208 322h1v1h-1zM218 322h1v1h-1zM228 322h1v1h-1zM238 322h1v1h-1zM249 322h1v1h-1zM259 322h1v1h-1zM269 322h1v1h-1zM279 322h1v1h-1zM290 322h1v1h-1zM300 322h1v1h-1zM310 322h1v1h-1zM320 322h1v1h-1zM331 322h1v1h-1zM341 322h1v1h-1zM351 322h1v1h-1zM361 322h1v1h-1zM372 322h1v1h-1zM382 322h1v1h-1zM392 322h1v1h-1zM402 322h1v1h-1zM413 322h1v1h-1zM423 322h1v1h-1zM433 322h1v1h-1zM443 322h1v1h-1zM454 322h1v1h-1zM464 322h1v1h-1zM474 322h1v1h-1zM484 322h1v1h-1zM495 322h1v1h-1zM505 322h1v1h-1zM515 322h1v1h-1zM525 322h1v1h-1zM536 322h1v1h-1zM546 322h1v1h-1zM556 322h1v1h-1zM566 322h1v1h-1zM577 322h1v1h-1zM587 322h1v1h-1zM597 322h1v1h-1zM607 322h1v1h-1zM618 322h1v1h-1zM628 322h1v1h-1zM638 322h1v1h-1zM648 322h1v1h-1zM659 322h1v1h-1zM669 322h1v1h-1zM679 322h1v1h-1zM689 322h1v1h-1zM700 322h1v1h-1zM710 322h1v1h-1zM720 322h1v1h-1zM730 322h1v1h-1zM741 322h1v1h-1zM751 322h1v1h-1zM761 322h1v1h-1zM771 322h1v1h-1zM782 322h1v1h-1zM792 322h1v1h-1zM802 322h1v1h-1zM812 322h1v1h-1zM823 322h1v1h-1zM833 322h1v1h-1zM843 322h1v1h-1zM853 322h1v1h-1zM864 322h1v1h-1zM874 322h1v1h-1zM884 322h1v1h-1zM894 322h1v1h-1zM905 322h1v1h-1zM915 322h1v1h-1zM925 322h1v1h-1zM935 322h1v1h-1zM946 322h1v1h-1zM956 322h1v1h-1zM966 322h1v1h-1zM976 322h1v1h-1zM987 322h1v1h-1zM997 322h1v1h-1zM1007 322h1v1h-1zM1017 322h1v1h-1zM1028 322h1v1h-1zM1038 322h1v1h-1zM1048 322h1v1h-1zM1058 322h1v1h-1zM1069 322h1v1h-1zM1079 322h1v1h-1zM1089 322h1v1h-1zM1099 322h1v1h-1zM1110 322h1v1h-1zM1120 322h1v1h-1zM1130 322h1v1h-1zM95 312h1v1h-1zM105 312h1v1h-1zM115 312h1v1h-1zM126 312h1v1h-1zM136 312h1v1h-1zM146 312h1v1h-1zM156 312h1v1h-1zM167 312h1v1h-1zM177 312h1v1h-1zM187 312h1v1h-1zM197 312h1v1h-1zM208 312h1v1h-1zM218 312h1v1h-1zM228 312h1v1h-1zM238 312h1v1h-1zM249 312h1v1h-1zM259 312h1v1h-1zM269 312h1v1h-1zM279 312h1v1h-1zM290 312h1v1h-1zM300 312h1v1h-1zM310 312h1v1h-1zM320 312h1v1h-1zM331 312h1v1h-1zM341 312h1v1h-1zM351 312h1v1h-1zM361 312h1v1h-1zM372 312h1v1h-1zM382 312h1v1h-1zM392 312h1v1h-1zM402 312h1v1h-1zM413 312h1v1h-1zM423 312h1v1h-1zM433 312h1v1h-1zM443 312h1v1h-1zM454 312h1v1h-1zM464 312h1v1h-1zM474 312h1v1h-1zM484 312h1v1h-1zM495 312h1v1h-1zM505 312h1v1h-1zM515 312h1v1h-1zM525 312h1v1h-1zM536 312h1v1h-1zM546 312h1v1h-1zM556 312h1v1h-1zM566 312h1v1h-1zM577 312h1v1h-1zM587 312h1v1h-1zM597 312h1v1h-1zM607 312h1v1h-1zM618 312h1v1h-1zM628 312h1v1h-1zM638 312h1v1h-1zM648 312h1v1h-1zM659 312h1v1h-1zM669 312h1v1h-1zM679 312h1v1h-1zM689 312h1v1h-1zM700 312h1v1h-1zM710 312h1v1h-1zM720 312h1v1h-1zM730 312h1v1h-1zM741 312h1v1h-1zM751 312h1v1h-1zM761 312h1v1h-1zM771 312h1v1h-1zM782 312h1v1h-1zM792 312h1v1h-1zM802 312h1v1h-1zM812 312h1v1h-1zM823 312h1v1h-1zM833 312h1v1h-1zM843 312h1v1h-1zM853 312h1v1h-1zM864 312h1v1h-1zM874 312h1v1h-1zM884 312h1v1h-1zM894 312h1v1h-1zM905 312h1v1h-1zM915 312h1v1h-1zM925 312h1v1h-1zM935 312h1v1h-1zM946 312h1v1h-1zM956 312h1v1h-1zM966 312h1v1h-1zM976 312h1v1h-1zM987 312h1v1h-1zM997 312h1v1h-1zM1007 312h1v1h-1zM1017 312h1v1h-1zM1028 312h1v1h-1zM1038 312h1v1h-1zM1048 312h1v1h-1zM1058 312h1v1h-1zM1069 312h1v1h-1zM1079 312h1v1h-1zM1089 312h1v1h-1zM1099 312h1v1h-1zM1110 312h1v1h-1zM1120 312h1v1h-1zM1130 312h1v1h-1zM95 302h1v1h-1zM105 302h1v1h-1zM115 302h1v1h-1zM126 302h1v1h-1zM136 302h1v1h-1zM146 302h1v1h-1zM156 302h1v1h-1zM167 302h1v1h-1zM177 302h1v1h-1zM187 302h1v1h-1zM197 302h1v1h-1zM208 302h1v1h-1zM218 302h1v1h-1zM228 302h1v1h-1zM238 302h1v1h-1zM249 302h1v1h-1zM259 302h1v1h-1zM269 302h1v1h-1zM279 302h1v1h-1zM290 302h1v1h-1zM300 302h1v1h-1zM310 302h1v1h-1zM320 302h1v1h-1zM331 302h1v1h-1zM341 302h1v1h-1zM351 302h1v1h-1zM361 302h1v1h-1zM372 302h1v1h-1zM382 302h1v1h-1zM392 302h1v1h-1zM402 302h1v1h-1zM413 302h1v1h-1zM423 302h1v1h-1zM433 302h1v1h-1zM443 302h1v1h-1zM454 302h1v1h-1zM464 302h1v1h-1zM474 302h1v1h-1zM484 302h1v1h-1zM495 302h1v1h-1zM505 302h1v1h-1zM515 302h1v1h-1zM525 302h1v1h-1zM536 302h1v1h-1zM546 302h1v1h-1zM556 302h1v1h-1zM566 302h1v1h-1zM577 302h1v1h-1zM587 302h1v1h-1zM597 302h1v1h-1zM607 302h1v1h-1zM618 302h1v1h-1zM628 302h1v1h-1zM638 302h1v1h-1zM648 302h1v1h-1zM659 302h1v1h-1zM669 302h1v1h-1zM679 302h1v1h-1zM689 302h1v1h-1zM700 302h1v1h-1zM710 302h1v1h-1zM720 302h1v1h-1zM730 302h1v1h-1zM741 302h1v1h-1zM751 302h1v1h-1zM761 302h1v1h-1zM771 302h1v1h-1zM782 302h1v1h-1zM792 302h1v1h-1zM802 302h1v1h-1zM812 302h1v1h-1zM823 302h1v1h-1zM833 302h1v1h-1zM843 302h1v1h-1zM853 302h1v1h-1zM864 302h1v1h-1zM874 302h1v1h-1zM884 302h1v1h-1zM894 302h1v1h-1zM905 302h1v1h-1zM915 302h1v1h-1zM925 302h1v1h-1zM935 302h1v1h-1zM946 302h1v1h-1zM956 302h1v1h-1zM966 302h1v1h-1zM976 302h1v1h-1zM987 302h1v1h-1zM997 302h1v1h-1zM1007 302h1v1h-1zM1017 302h1v1h-1zM1028 302h1v1h-1zM1038 302h1v1h-1zM1048 302h1v1h-1zM1058 302h1v1h-1zM1069 302h1v1h-1zM1079 302h1v1h-1zM1089 302h1v1h-1zM1099 302h1v1h-1zM1110 302h1v1h-1zM1120 302h1v1h-1zM1130 302h1v1h-1zM95 291h1v1h-1zM105 291h1v1h-1zM115 291h1v1h-1zM126 291h1v1h-1zM136 291h1v1h-1zM146 291h1v1h-1zM156 291h1v1h-1zM167 291h1v1h-1zM177 291h1v1h-1zM187 291h1v1h-1zM197 291h1v1h-1zM208 291h1v1h-1zM218 291h1v1h-1zM228 291h1v1h-1zM238 291h1v1h-1zM249 291h1v1h-1zM259 291h1v1h-1zM269 291h1v1h-1zM279 291h1v1h-1zM290 291h1v1h-1zM300 291h1v1h-1zM310 291h1v1h-1zM320 291h1v1h-1zM331 291h1v1h-1zM341 291h1v1h-1zM351 291h1v1h-1zM361 291h1v1h-1zM372 291h1v1h-1zM382 291h1v1h-1zM392 291h1v1h-1zM402 291h1v1h-1zM413 291h1v1h-1zM423 291h1v1h-1zM433 291h1v1h-1zM443 291h1v1h-1zM454 291h1v1h-1zM464 291h1v1h-1zM474 291h1v1h-1zM484 291h1v1h-1zM495 291h1v1h-1zM505 291h1v1h-1zM515 291h1v1h-1zM525 291h1v1h-1zM536 291h1v1h-1zM546 291h1v1h-1zM556 291h1v1h-1zM566 291h1v1h-1zM577 291h1v1h-1zM587 291h1v1h-1zM597 291h1v1h-1zM607 291h1v1h-1zM618 291h1v1h-1zM628 291h1v1h-1zM638 291h1v1h-1zM648 291h1v1h-1zM659 291h1v1h-1zM669 291h1v1h-1zM679 291h1v1h-1zM689 291h1v1h-1zM700 291h1v1h-1zM710 291h1v1h-1zM720 291h1v1h-1zM730 291h1v1h-1zM741 291h1v1h-1zM751 291h1v1h-1zM761 291h1v1h-1zM771 291h1v1h-1zM782 291h1v1h-1zM792 291h1v1h-1zM802 291h1v1h-1zM812 291h1v1h-1zM823 291h1v1h-1zM833 291h1v1h-1zM843 291h1v1h-1zM853 291h1v1h-1zM864 291h1v1h-1zM874 291h1v1h-1zM884 291h1v1h-1zM894 291h1v1h-1zM905 291h1v1h-1zM915 291h1v1h-1zM925 291h1v1h-1zM935 291h1v1h-1zM946 291h1v1h-1zM956 291h1v1h-1zM966 291h1v1h-1zM976 291h1v1h-1zM987 291h1v1h-1zM997 291h1v1h-1zM1007 291h1v1h-1zM1017 291h1v1h-1zM1028 291h1v1h-1zM1038 291h1v1h-1zM1048 291h1v1h-1zM1058 291h1v1h-1zM1069 291h1v1h-1zM1079 291h1v1h-1zM1089 291h1v1h-1zM1099 291h1v1h-1zM1110 291h1v1h-1zM1120 291h1v1h-1zM1130 291h1v1h-1zM95 281h1v1h-1zM105 281h1v1h-1zM115 281h1v1h-1zM126 281h1v1h-1zM136 281h1v1h-1zM146 281h1v1h-1zM156 281h1v1h-1zM167 281h1v1h-1zM177 281h1v1h-1zM187 281h1v1h-1zM197 281h1v1h-1zM208 281h1v1h-1zM218 281h1v1h-1zM228 281h1v1h-1zM238 281h1v1h-1zM249 281h1v1h-1zM259 281h1v1h-1zM269 281h1v1h-1zM279 281h1v1h-1zM290 281h1v1h-1zM300 281h1v1h-1zM310 281h1v1h-1zM320 281h1v1h-1zM331 281h1v1h-1zM341 281h1v1h-1zM351 281h1v1h-1zM361 281h1v1h-1zM372 281h1v1h-1zM382 281h1v1h-1zM392 281h1v1h-1zM402 281h1v1h-1zM413 281h1v1h-1zM423 281h1v1h-1zM433 281h1v1h-1zM443 281h1v1h-1zM454 281h1v1h-1zM464 281h1v1h-1zM474 281h1v1h-1zM484 281h1v1h-1zM495 281h1v1h-1zM505 281h1v1h-1zM515 281h1v1h-1zM525 281h1v1h-1zM536 281h1v1h-1zM546 281h1v1h-1zM556 281h1v1h-1zM566 281h1v1h-1zM577 281h1v1h-1zM587 281h1v1h-1zM597 281h1v1h-1zM607 281h1v1h-1zM618 281h1v1h-1zM628 281h1v1h-1zM638 281h1v1h-1zM648 281h1v1h-1zM659 281h1v1h-1zM669 281h1v1h-1zM679 281h1v1h-1zM689 281h1v1h-1zM700 281h1v1h-1zM710 281h1v1h-1zM720 281h1v1h-1zM730 281h1v1h-1zM741 281h1v1h-1zM751 281h1v1h-1zM761 281h1v1h-1zM771 281h1v1h-1zM782 281h1v1h-1zM792 281h1v1h-1zM802 281h1v1h-1zM812 281h1v1h-1zM823 281h1v1h-1zM833 281h1v1h-1zM843 281h1v1h-1zM853 281h1v1h-1zM864 281h1v1h-1zM874 281h1v1h-1zM884 281h1v1h-1zM894 281h1v1h-1zM905 281h1v1h-1zM915 281h1v1h-1zM925 281h1v1h-1zM935 281h1v1h-1zM946 281h1v1h-1zM956 281h1v1h-1zM966 281h1v1h-1zM976 281h1v1h-1zM987 281h1v1h-1zM997 281h1v1h-1zM1007 281h1v1h-1zM1017 281h1v1h-1zM1028 281h1v1h-1zM1038 281h1v1h-1zM1048 281h1v1h-1zM1058 281h1v1h-1zM1069 281h1v1h-1zM1079 281h1v1h-1zM1089 281h1v1h-1zM1099 281h1v1h-1zM1110 281h1v1h-1zM1120 281h1v1h-1zM1130 281h1v1h-1zM95 271h1v1h-1zM105 271h1v1h-1zM115 271h1v1h-1zM126 271h1v1h-1zM136 271h1v1h-1zM146 271h1v1h-1zM156 271h1v1h-1zM167 271h1v1h-1zM177 271h1v1h-1zM187 271h1v1h-1zM197 271h1v1h-1zM208 271h1v1h-1zM218 271h1v1h-1zM228 271h1v1h-1zM238 271h1v1h-1zM249 271h1v1h-1zM259 271h1v1h-1zM269 271h1v1h-1zM279 271h1v1h-1zM290 271h1v1h-1zM300 271h1v1h-1zM310 271h1v1h-1zM320 271h1v1h-1zM331 271h1v1h-1zM341 271h1v1h-1zM351 271h1v1h-1zM361 271h1v1h-1zM372 271h1v1h-1zM382 271h1v1h-1zM392 271h1v1h-1zM402 271h1v1h-1zM413 271h1v1h-1zM423 271h1v1h-1zM433 271h1v1h-1zM443 271h1v1h-1zM454 271h1v1h-1zM464 271h1v1h-1zM474 271h1v1h-1zM484 271h1v1h-1zM495 271h1v1h-1zM505 271h1v1h-1zM515 271h1v1h-1zM525 271h1v1h-1zM536 271h1v1h-1zM546 271h1v1h-1zM556 271h1v1h-1zM566 271h1v1h-1zM577 271h1v1h-1zM587 271h1v1h-1zM597 271h1v1h-1zM607 271h1v1h-1zM618 271h1v1h-1zM628 271h1v1h-1zM638 271h1v1h-1zM648 271h1v1h-1zM659 271h1v1h-1zM669 271h1v1h-1zM679 271h1v1h-1zM689 271h1v1h-1zM700 271h1v1h-1zM710 271h1v1h-1zM720 271h1v1h-1zM730 271h1v1h-1zM741 271h1v1h-1zM751 271h1v1h-1zM761 271h1v1h-1zM771 271h1v1h-1zM782 271h1v1h-1zM792 271h1v1h-1zM802 271h1v1h-1zM812 271h1v1h-1zM823 271h1v1h-1zM833 271h1v1h-1zM843 271h1v1h-1zM853 271h1v1h-1zM864 271h1v1h-1zM874 271h1v1h-1zM884 271h1v1h-1zM894 271h1v1h-1zM905 271h1v1h-1zM915 271h1v1h-1zM925 271h1v1h-1zM935 271h1v1h-1zM946 271h1v1h-1zM956 271h1v1h-1zM966 271h1v1h-1zM976 271h1v1h-1zM987 271h1v1h-1zM997 271h1v1h-1zM1007 271h1v1h-1zM1017 271h1v1h-1zM1028 271h1v1h-1zM1038 271h1v1h-1zM1048 271h1v1h-1zM1058 271h1v1h-1zM1069 271h1v1h-1zM1079 271h1v1h-1zM1089 271h1v1h-1zM1099 271h1v1h-1zM1110 271h1v1h-1zM1120 271h1v1h-1zM1130 271h1v1h-1zM95 260h1v1h-1zM105 260h1v1h-1zM115 260h1v1h-1zM126 260h1v1h-1zM136 260h1v1h-1zM146 260h1v1h-1zM156 260h1v1h-1zM167 260h1v1h-1zM177 260h1v1h-1zM187 260h1v1h-1zM197 260h1v1h-1zM208 260h1v1h-1zM218 260h1v1h-1zM228 260h1v1h-1zM238 260h1v1h-1zM249 260h1v1h-1zM259 260h1v1h-1zM269 260h1v1h-1zM279 260h1v1h-1zM290 260h1v1h-1zM300 260h1v1h-1zM310 260h1v1h-1zM320 260h1v1h-1zM331 260h1v1h-1zM341 260h1v1h-1zM351 260h1v1h-1zM361 260h1v1h-1zM372 260h1v1h-1zM382 260h1v1h-1zM392 260h1v1h-1zM402 260h1v1h-1zM413 260h1v1h-1zM423 260h1v1h-1zM433 260h1v1h-1zM443 260h1v1h-1zM454 260h1v1h-1zM464 260h1v1h-1zM474 260h1v1h-1zM484 260h1v1h-1zM495 260h1v1h-1zM505 260h1v1h-1zM515 260h1v1h-1zM525 260h1v1h-1zM536 260h1v1h-1zM546 260h1v1h-1zM556 260h1v1h-1zM566 260h1v1h-1zM577 260h1v1h-1zM587 260h1v1h-1zM597 260h1v1h-1zM607 260h1v1h-1zM618 260h1v1h-1zM628 260h1v1h-1zM638 260h1v1h-1zM648 260h1v1h-1zM659 260h1v1h-1zM669 260h1v1h-1zM679 260h1v1h-1zM689 260h1v1h-1zM700 260h1v1h-1zM710 260h1v1h-1zM720 260h1v1h-1zM730 260h1v1h-1zM741 260h1v1h-1zM751 260h1v1h-1zM761 260h1v1h-1zM771 260h1v1h-1zM782 260h1v1h-1zM792 260h1v1h-1zM802 260h1v1h-1zM812 260h1v1h-1zM823 260h1v1h-1zM833 260h1v1h-1zM843 260h1v1h-1zM853 260h1v1h-1zM864 260h1v1h-1zM874 260h1v1h-1zM884 260h1v1h-1zM894 260h1v1h-1zM905 260h1v1h-1zM915 260h1v1h-1zM925 260h1v1h-1zM935 260h1v1h-1zM946 260h1v1h-1zM956 260h1v1h-1zM966 260h1v1h-1zM976 260h1v1h-1zM987 260h1v1h-1zM997 260h1v1h-1zM1007 260h1v1h-1zM1017 260h1v1h-1zM1028 260h1v1h-1zM1038 260h1v1h-1zM1048 260h1v1h-1zM1058 260h1v1h-1zM1069 260h1v1h-1zM1079 260h1v1h-1zM1089 260h1v1h-1zM1099 260h1v1h-1zM1110 260h1v1h-1zM1120 260h1v1h-1zM1130 260h1v1h-1zM95 250h1v1h-1zM105 250h1v1h-1zM115 250h1v1h-1zM126 250h1v1h-1zM136 250h1v1h-1zM146 250h1v1h-1zM156 250h1v1h-1zM167 250h1v1h-1zM177 250h1v1h-1zM187 250h1v1h-1zM197 250h1v1h-1zM208 250h1v1h-1zM218 250h1v1h-1zM228 250h1v1h-1zM238 250h1v1h-1zM249 250h1v1h-1zM259 250h1v1h-1zM269 250h1v1h-1zM279 250h1v1h-1zM290 250h1v1h-1zM300 250h1v1h-1zM310 250h1v1h-1zM320 250h1v1h-1zM331 250h1v1h-1zM341 250h1v1h-1zM351 250h1v1h-1zM361 250h1v1h-1zM372 250h1v1h-1zM382 250h1v1h-1zM392 250h1v1h-1zM402 250h1v1h-1zM413 250h1v1h-1zM423 250h1v1h-1zM433 250h1v1h-1zM443 250h1v1h-1zM454 250h1v1h-1zM464 250h1v1h-1zM474 250h1v1h-1zM484 250h1v1h-1zM495 250h1v1h-1zM505 250h1v1h-1zM515 250h1v1h-1zM525 250h1v1h-1zM536 250h1v1h-1zM546 250h1v1h-1zM556 250h1v1h-1zM566 250h1v1h-1zM577 250h1v1h-1zM587 250h1v1h-1zM597 250h1v1h-1zM607 250h1v1h-1zM618 250h1v1h-1zM628 250h1v1h-1zM638 250h1v1h-1zM648 250h1v1h-1zM659 250h1v1h-1zM669 250h1v1h-1zM679 250h1v1h-1zM689 250h1v1h-1zM700 250h1v1h-1zM710 250h1v1h-1zM720 250h1v1h-1zM730 250h1v1h-1zM741 250h1v1h-1zM751 250h1v1h-1zM761 250h1v1h-1zM771 250h1v1h-1zM782 250h1v1h-1zM792 250h1v1h-1zM802 250h1v1h-1zM812 250h1v1h-1zM823 250h1v1h-1zM833 250h1v1h-1zM843 250h1v1h-1zM853 250h1v1h-1zM864 250h1v1h-1zM874 250h1v1h-1zM884 250h1v1h-1zM894 250h1v1h-1zM905 250h1v1h-1zM915 250h1v1h-1zM925 250h1v1h-1zM935 250h1v1h-1zM946 250h1v1h-1zM956 250h1v1h-1zM966 250h1v1h-1zM976 250h1v1h-1zM987 250h1v1h-1zM997 250h1v1h-1zM1007 250h1v1h-1zM1017 250h1v1h-1zM1028 250h1v1h-1zM1038 250h1v1h-1zM1048 250h1v1h-1zM1058 250h1v1h-1zM1069 250h1v1h-1zM1079 250h1v1h-1zM1089 250h1v1h-1zM1099 250h1v1h-1zM1110 250h1v1h-1zM1120 250h1v1h-1zM1130 250h1v1h-1zM95 240h1v1h-1zM105 240h1v1h-1zM115 240h1v1h-1zM126 240h1v1h-1zM136 240h1v1h-1zM146 240h1v1h-1zM156 240h1v1h-1zM167 240h1v1h-1zM177 240h1v1h-1zM187 240h1v1h-1zM197 240h1v1h-1zM208 240h1v1h-1zM218 240h1v1h-1zM228 240h1v1h-1zM238 240h1v1h-1zM249 240h1v1h-1zM259 240h1v1h-1zM269 240h1v1h-1zM279 240h1v1h-1zM290 240h1v1h-1zM300 240h1v1h-1zM310 240h1v1h-1zM320 240h1v1h-1zM331 240h1v1h-1zM341 240h1v1h-1zM351 240h1v1h-1zM361 240h1v1h-1zM372 240h1v1h-1zM382 240h1v1h-1zM392 240h1v1h-1zM402 240h1v1h-1zM413 240h1v1h-1zM423 240h1v1h-1zM433 240h1v1h-1zM443 240h1v1h-1zM454 240h1v1h-1zM464 240h1v1h-1zM474 240h1v1h-1zM484 240h1v1h-1zM495 240h1v1h-1zM505 240h1v1h-1zM515 240h1v1h-1zM525 240h1v1h-1zM536 240h1v1h-1zM546 240h1v1h-1zM556 240h1v1h-1zM566 240h1v1h-1zM577 240h1v1h-1zM587 240h1v1h-1zM597 240h1v1h-1zM607 240h1v1h-1zM618 240h1v1h-1zM628 240h1v1h-1zM638 240h1v1h-1zM648 240h1v1h-1zM659 240h1v1h-1zM669 240h1v1h-1zM679 240h1v1h-1zM689 240h1v1h-1zM700 240h1v1h-1zM710 240h1v1h-1zM720 240h1v1h-1zM730 240h1v1h-1zM741 240h1v1h-1zM751 240h1v1h-1zM761 240h1v1h-1zM771 240h1v1h-1zM782 240h1v1h-1zM792 240h1v1h-1zM802 240h1v1h-1zM812 240h1v1h-1zM823 240h1v1h-1zM833 240h1v1h-1zM843 240h1v1h-1zM853 240h1v1h-1zM864 240h1v1h-1zM874 240h1v1h-1zM884 240h1v1h-1zM894 240h1v1h-1zM905 240h1v1h-1zM915 240h1v1h-1zM925 240h1v1h-1zM935 240h1v1h-1zM946 240h1v1h-1zM956 240h1v1h-1zM966 240h1v1h-1zM976 240h1v1h-1zM987 240h1v1h-1zM997 240h1v1h-1zM1007 240h1v1h-1zM1017 240h1v1h-1zM1028 240h1v1h-1zM1038 240h1v1h-1zM1048 240h1v1h-1zM1058 240h1v1h-1zM1069 240h1v1h-1zM1079 240h1v1h-1zM1089 240h1v1h-1zM1099 240h1v1h-1zM1110 240h1v1h-1zM1120 240h1v1h-1zM1130 240h1v1h-1zM95 230h1v1h-1zM105 230h1v1h-1zM115 230h1v1h-1zM126 230h1v1h-1zM136 230h1v1h-1zM146 230h1v1h-1zM156 230h1v1h-1zM167 230h1v1h-1zM177 230h1v1h-1zM187 230h1v1h-1zM197 230h1v1h-1zM208 230h1v1h-1zM218 230h1v1h-1zM228 230h1v1h-1zM238 230h1v1h-1zM249 230h1v1h-1zM259 230h1v1h-1zM269 230h1v1h-1zM279 230h1v1h-1zM290 230h1v1h-1zM300 230h1v1h-1zM310 230h1v1h-1zM320 230h1v1h-1zM331 230h1v1h-1zM341 230h1v1h-1zM351 230h1v1h-1zM361 230h1v1h-1zM372 230h1v1h-1zM382 230h1v1h-1zM392 230h1v1h-1zM402 230h1v1h-1zM413 230h1v1h-1zM423 230h1v1h-1zM433 230h1v1h-1zM443 230h1v1h-1zM454 230h1v1h-1zM464 230h1v1h-1zM474 230h1v1h-1zM484 230h1v1h-1zM495 230h1v1h-1zM505 230h1v1h-1zM515 230h1v1h-1zM525 230h1v1h-1zM536 230h1v1h-1zM546 230h1v1h-1zM556 230h1v1h-1zM566 230h1v1h-1zM577 230h1v1h-1zM587 230h1v1h-1zM597 230h1v1h-1zM607 230h1v1h-1zM618 230h1v1h-1zM628 230h1v1h-1zM638 230h1v1h-1zM648 230h1v1h-1zM659 230h1v1h-1zM669 230h1v1h-1zM679 230h1v1h-1zM689 230h1v1h-1zM700 230h1v1h-1zM710 230h1v1h-1zM720 230h1v1h-1zM730 230h1v1h-1zM741 230h1v1h-1zM751 230h1v1h-1zM761 230h1v1h-1zM771 230h1v1h-1zM782 230h1v1h-1zM792 230h1v1h-1zM802 230h1v1h-1zM812 230h1v1h-1zM823 230h1v1h-1zM833 230h1v1h-1zM843 230h1v1h-1zM853 230h1v1h-1zM864 230h1v1h-1zM874 230h1v1h-1zM884 230h1v1h-1zM894 230h1v1h-1zM905 230h1v1h-1zM915 230h1v1h-1zM925 230h1v1h-1zM935 230h1v1h-1zM946 230h1v1h-1zM956 230h1v1h-1zM966 230h1v1h-1zM976 230h1v1h-1zM987 230h1v1h-1zM997 230h1v1h-1zM1007 230h1v1h-1zM1017 230h1v1h-1zM1028 230h1v1h-1zM1038 230h1v1h-1zM1048 230h1v1h-1zM1058 230h1v1h-1zM1069 230h1v1h-1zM1079 230h1v1h-1zM1089 230h1v1h-1zM1099 230h1v1h-1zM1110 230h1v1h-1zM1120 230h1v1h-1zM1130 230h1v1h-1zM95 220h1v1h-1zM105 220h1v1h-1zM115 220h1v1h-1zM126 220h1v1h-1zM136 220h1v1h-1zM146 220h1v1h-1zM156 220h1v1h-1zM167 220h1v1h-1zM177 220h1v1h-1zM187 220h1v1h-1zM197 220h1v1h-1zM208 220h1v1h-1zM218 220h1v1h-1zM228 220h1v1h-1zM238 220h1v1h-1zM249 220h1v1h-1zM259 220h1v1h-1zM269 220h1v1h-1zM279 220h1v1h-1zM290 220h1v1h-1zM300 220h1v1h-1zM310 220h1v1h-1zM320 220h1v1h-1zM331 220h1v1h-1zM341 220h1v1h-1zM351 220h1v1h-1zM361 220h1v1h-1zM372 220h1v1h-1zM382 220h1v1h-1zM392 220h1v1h-1zM402 220h1v1h-1zM413 220h1v1h-1zM423 220h1v1h-1zM433 220h1v1h-1zM443 220h1v1h-1zM454 220h1v1h-1zM464 220h1v1h-1zM474 220h1v1h-1zM484 220h1v1h-1zM495 220h1v1h-1zM505 220h1v1h-1zM515 220h1v1h-1zM525 220h1v1h-1zM536 220h1v1h-1zM546 220h1v1h-1zM556 220h1v1h-1zM566 220h1v1h-1zM577 220h1v1h-1zM587 220h1v1h-1zM597 220h1v1h-1zM607 220h1v1h-1zM618 220h1v1h-1zM628 220h1v1h-1zM638 220h1v1h-1zM648 220h1v1h-1zM659 220h1v1h-1zM669 220h1v1h-1zM679 220h1v1h-1zM689 220h1v1h-1zM700 220h1v1h-1zM710 220h1v1h-1zM720 220h1v1h-1zM730 220h1v1h-1zM741 220h1v1h-1zM751 220h1v1h-1zM761 220h1v1h-1zM771 220h1v1h-1zM782 220h1v1h-1zM792 220h1v1h-1zM802 220h1v1h-1zM812 220h1v1h-1zM823 220h1v1h-1zM833 220h1v1h-1zM843 220h1v1h-1zM853 220h1v1h-1zM864 220h1v1h-1zM874 220h1v1h-1zM884 220h1v1h-1zM894 220h1v1h-1zM905 220h1v1h-1zM915 220h1v1h-1zM925 220h1v1h-1zM935 220h1v1h-1zM946 220h1v1h-1zM956 220h1v1h-1zM966 220h1v1h-1zM976 220h1v1h-1zM987 220h1v1h-1zM997 220h1v1h-1zM1007 220h1v1h-1zM1017 220h1v1h-1zM1028 220h1v1h-1zM1038 220h1v1h-1zM1048 220h1v1h-1zM1058 220h1v1h-1zM1069 220h1v1h-1zM1079 220h1v1h-1zM1089 220h1v1h-1zM1099 220h1v1h-1zM1110 220h1v1h-1zM1120 220h1v1h-1zM1130 220h1v1h-1zM95 209h1v1h-1zM105 209h1v1h-1zM115 209h1v1h-1zM126 209h1v1h-1zM136 209h1v1h-1zM146 209h1v1h-1zM156 209h1v1h-1zM167 209h1v1h-1zM177 209h1v1h-1zM187 209h1v1h-1zM197 209h1v1h-1zM208 209h1v1h-1zM218 209h1v1h-1zM228 209h1v1h-1zM238 209h1v1h-1zM249 209h1v1h-1zM259 209h1v1h-1zM269 209h1v1h-1zM279 209h1v1h-1zM290 209h1v1h-1zM300 209h1v1h-1zM310 209h1v1h-1zM320 209h1v1h-1zM331 209h1v1h-1zM341 209h1v1h-1zM351 209h1v1h-1zM361 209h1v1h-1zM372 209h1v1h-1zM382 209h1v1h-1zM392 209h1v1h-1zM402 209h1v1h-1zM413 209h1v1h-1zM423 209h1v1h-1zM433 209h1v1h-1zM443 209h1v1h-1zM454 209h1v1h-1zM464 209h1v1h-1zM474 209h1v1h-1zM484 209h1v1h-1zM495 209h1v1h-1zM505 209h1v1h-1zM515 209h1v1h-1zM525 209h1v1h-1zM536 209h1v1h-1zM546 209h1v1h-1zM556 209h1v1h-1zM566 209h1v1h-1zM577 209h1v1h-1zM587 209h1v1h-1zM597 209h1v1h-1zM607 209h1v1h-1zM618 209h1v1h-1zM628 209h1v1h-1zM638 209h1v1h-1zM648 209h1v1h-1zM659 209h1v1h-1zM669 209h1v1h-1zM679 209h1v1h-1zM689 209h1v1h-1zM700 209h1v1h-1zM710 209h1v1h-1zM720 209h1v1h-1zM730 209h1v1h-1zM741 209h1v1h-1zM751 209h1v1h-1zM761 209h1v1h-1zM771 209h1v1h-1zM782 209h1v1h-1zM792 209h1v1h-1zM802 209h1v1h-1zM812 209h1v1h-1zM823 209h1v1h-1zM833 209h1v1h-1zM843 209h1v1h-1zM853 209h1v1h-1zM864 209h1v1h-1zM874 209h1v1h-1zM884 209h1v1h-1zM894 209h1v1h-1zM905 209h1v1h-1zM915 209h1v1h-1zM925 209h1v1h-1zM935 209h1v1h-1zM946 209h1v1h-1zM956 209h1v1h-1zM966 209h1v1h-1zM976 209h1v1h-1zM987 209h1v1h-1zM997 209h1v1h-1zM1007 209h1v1h-1zM1017 209h1v1h-1zM1028 209h1v1h-1zM1038 209h1v1h-1zM1048 209h1v1h-1zM1058 209h1v1h-1zM1069 209h1v1h-1zM1079 209h1v1h-1zM1089 209h1v1h-1zM1099 209h1v1h-1zM1110 209h1v1h-1zM1120 209h1v1h-1zM1130 209h1v1h-1zM95 199h1v1h-1zM105 199h1v1h-1zM115 199h1v1h-1zM126 199h1v1h-1zM136 199h1v1h-1zM146 199h1v1h-1zM156 199h1v1h-1zM167 199h1v1h-1zM177 199h1v1h-1zM187 199h1v1h-1zM197 199h1v1h-1zM208 199h1v1h-1zM218 199h1v1h-1zM228 199h1v1h-1zM238 199h1v1h-1zM249 199h1v1h-1zM259 199h1v1h-1zM269 199h1v1h-1zM279 199h1v1h-1zM290 199h1v1h-1zM300 199h1v1h-1zM310 199h1v1h-1zM320 199h1v1h-1zM331 199h1v1h-1zM341 199h1v1h-1zM351 199h1v1h-1zM361 199h1v1h-1zM372 199h1v1h-1zM382 199h1v1h-1zM392 199h1v1h-1zM402 199h1v1h-1zM413 199h1v1h-1zM423 199h1v1h-1zM433 199h1v1h-1zM443 199h1v1h-1zM454 199h1v1h-1zM464 199h1v1h-1zM474 199h1v1h-1zM484 199h1v1h-1zM495 199h1v1h-1zM505 199h1v1h-1zM515 199h1v1h-1zM525 199h1v1h-1zM536 199h1v1h-1zM546 199h1v1h-1zM556 199h1v1h-1zM566 199h1v1h-1zM577 199h1v1h-1zM587 199h1v1h-1zM597 199h1v1h-1zM607 199h1v1h-1zM618 199h1v1h-1zM628 199h1v1h-1zM638 199h1v1h-1zM648 199h1v1h-1zM659 199h1v1h-1zM669 199h1v1h-1zM679 199h1v1h-1zM689 199h1v1h-1zM700 199h1v1h-1zM710 199h1v1h-1zM720 199h1v1h-1zM730 199h1v1h-1zM741 199h1v1h-1zM751 199h1v1h-1zM761 199h1v1h-1zM771 199h1v1h-1zM782 199h1v1h-1zM792 199h1v1h-1zM802 199h1v1h-1zM812 199h1v1h-1zM823 199h1v1h-1zM833 199h1v1h-1zM843 199h1v1h-1zM853 199h1v1h-1zM864 199h1v1h-1zM874 199h1v1h-1zM884 199h1v1h-1zM894 199h1v1h-1zM905 199h1v1h-1zM915 199h1v1h-1zM925 199h1v1h-1zM935 199h1v1h-1zM946 199h1v1h-1zM956 199h1v1h-1zM966 199h1v1h-1zM976 199h1v1h-1zM987 199h1v1h-1zM997 199h1v1h-1zM1007 199h1v1h-1zM1017 199h1v1h-1zM1028 199h1v1h-1zM1038 199h1v1h-1zM1048 199h1v1h-1zM1058 199h1v1h-1zM1069 199h1v1h-1zM1079 199h1v1h-1zM1089 199h1v1h-1zM1099 199h1v1h-1zM1110 199h1v1h-1zM1120 199h1v1h-1zM1130 199h1v1h-1zM95 189h1v1h-1zM105 189h1v1h-1zM115 189h1v1h-1zM126 189h1v1h-1zM136 189h1v1h-1zM146 189h1v1h-1zM156 189h1v1h-1zM167 189h1v1h-1zM177 189h1v1h-1zM187 189h1v1h-1zM197 189h1v1h-1zM208 189h1v1h-1zM218 189h1v1h-1zM228 189h1v1h-1zM238 189h1v1h-1zM249 189h1v1h-1zM259 189h1v1h-1zM269 189h1v1h-1zM279 189h1v1h-1zM290 189h1v1h-1zM300 189h1v1h-1zM310 189h1v1h-1zM320 189h1v1h-1zM331 189h1v1h-1zM341 189h1v1h-1zM351 189h1v1h-1zM361 189h1v1h-1zM372 189h1v1h-1zM382 189h1v1h-1zM392 189h1v1h-1zM402 189h1v1h-1zM413 189h1v1h-1zM423 189h1v1h-1zM433 189h1v1h-1zM443 189h1v1h-1zM454 189h1v1h-1zM464 189h1v1h-1zM474 189h1v1h-1zM484 189h1v1h-1zM495 189h1v1h-1zM505 189h1v1h-1zM515 189h1v1h-1zM525 189h1v1h-1zM536 189h1v1h-1zM546 189h1v1h-1zM556 189h1v1h-1zM566 189h1v1h-1zM577 189h1v1h-1zM587 189h1v1h-1zM597 189h1v1h-1zM607 189h1v1h-1zM618 189h1v1h-1zM628 189h1v1h-1zM638 189h1v1h-1zM648 189h1v1h-1zM659 189h1v1h-1zM669 189h1v1h-1zM679 189h1v1h-1zM689 189h1v1h-1zM700 189h1v1h-1zM710 189h1v1h-1zM720 189h1v1h-1zM730 189h1v1h-1zM741 189h1v1h-1zM751 189h1v1h-1zM761 189h1v1h-1zM771 189h1v1h-1zM782 189h1v1h-1zM792 189h1v1h-1zM802 189h1v1h-1zM812 189h1v1h-1zM823 189h1v1h-1zM833 189h1v1h-1zM843 189h1v1h-1zM853 189h1v1h-1zM864 189h1v1h-1zM874 189h1v1h-1zM884 189h1v1h-1zM894 189h1v1h-1zM905 189h1v1h-1zM915 189h1v1h-1zM925 189h1v1h-1zM935 189h1v1h-1zM946 189h1v1h-1zM956 189h1v1h-1zM966 189h1v1h-1zM976 189h1v1h-1zM987 189h1v1h-1zM997 189h1v1h-1zM1007 189h1v1h-1zM1017 189h1v1h-1zM1028 189h1v1h-1zM1038 189h1v1h-1zM1048 189h1v1h-1zM1058 189h1v1h-1zM1069 189h1v1h-1zM1079 189h1v1h-1zM1089 189h1v1h-1zM1099 189h1v1h-1zM1110 189h1v1h-1zM1120 189h1v1h-1zM1130 189h1v1h-1zM95 178h1v1h-1zM105 178h1v1h-1zM115 178h1v1h-1zM126 178h1v1h-1zM136 178h1v1h-1zM146 178h1v1h-1zM156 178h1v1h-1zM167 178h1v1h-1zM177 178h1v1h-1zM187 178h1v1h-1zM197 178h1v1h-1zM208 178h1v1h-1zM218 178h1v1h-1zM228 178h1v1h-1zM238 178h1v1h-1zM249 178h1v1h-1zM259 178h1v1h-1zM269 178h1v1h-1zM279 178h1v1h-1zM290 178h1v1h-1zM300 178h1v1h-1zM310 178h1v1h-1zM320 178h1v1h-1zM331 178h1v1h-1zM341 178h1v1h-1zM351 178h1v1h-1zM361 178h1v1h-1zM372 178h1v1h-1zM382 178h1v1h-1zM392 178h1v1h-1zM402 178h1v1h-1zM413 178h1v1h-1zM423 178h1v1h-1zM433 178h1v1h-1zM443 178h1v1h-1zM454 178h1v1h-1zM464 178h1v1h-1zM474 178h1v1h-1zM484 178h1v1h-1zM495 178h1v1h-1zM505 178h1v1h-1zM515 178h1v1h-1zM525 178h1v1h-1zM536 178h1v1h-1zM546 178h1v1h-1zM556 178h1v1h-1zM566 178h1v1h-1zM577 178h1v1h-1zM587 178h1v1h-1zM597 178h1v1h-1zM607 178h1v1h-1zM618 178h1v1h-1zM628 178h1v1h-1zM638 178h1v1h-1zM648 178h1v1h-1zM659 178h1v1h-1zM669 178h1v1h-1zM679 178h1v1h-1zM689 178h1v1h-1zM700 178h1v1h-1zM710 178h1v1h-1zM720 178h1v1h-1zM730 178h1v1h-1zM741 178h1v1h-1zM751 178h1v1h-1zM761 178h1v1h-1zM771 178h1v1h-1zM782 178h1v1h-1zM792 178h1v1h-1zM802 178h1v1h-1zM812 178h1v1h-1zM823 178h1v1h-1zM833 178h1v1h-1zM843 178h1v1h-1zM853 178h1v1h-1zM864 178h1v1h-1zM874 178h1v1h-1zM884 178h1v1h-1zM894 178h1v1h-1zM905 178h1v1h-1zM915 178h1v1h-1zM925 178h1v1h-1zM935 178h1v1h-1zM946 178h1v1h-1zM956 178h1v1h-1zM966 178h1v1h-1zM976 178h1v1h-1zM987 178h1v1h-1zM997 178h1v1h-1zM1007 178h1v1h-1zM1017 178h1v1h-1zM1028 178h1v1h-1zM1038 178h1v1h-1zM1048 178h1v1h-1zM1058 178h1v1h-1zM1069 178h1v1h-1zM1079 178h1v1h-1zM1089 178h1v1h-1zM1099 178h1v1h-1zM1110 178h1v1h-1zM1120 178h1v1h-1zM1130 178h1v1h-1zM95 168h1v1h-1zM105 168h1v1h-1zM115 168h1v1h-1zM126 168h1v1h-1zM136 168h1v1h-1zM146 168h1v1h-1zM156 168h1v1h-1zM167 168h1v1h-1zM177 168h1v1h-1zM187 168h1v1h-1zM197 168h1v1h-1zM208 168h1v1h-1zM218 168h1v1h-1zM228 168h1v1h-1zM238 168h1v1h-1zM249 168h1v1h-1zM259 168h1v1h-1zM269 168h1v1h-1zM279 168h1v1h-1zM290 168h1v1h-1zM300 168h1v1h-1zM310 168h1v1h-1zM320 168h1v1h-1zM331 168h1v1h-1zM341 168h1v1h-1zM351 168h1v1h-1zM361 168h1v1h-1zM372 168h1v1h-1zM382 168h1v1h-1zM392 168h1v1h-1zM402 168h1v1h-1zM413 168h1v1h-1zM423 168h1v1h-1zM433 168h1v1h-1zM443 168h1v1h-1zM454 168h1v1h-1zM464 168h1v1h-1zM474 168h1v1h-1zM484 168h1v1h-1zM495 168h1v1h-1zM505 168h1v1h-1zM515 168h1v1h-1zM525 168h1v1h-1zM536 168h1v1h-1zM546 168h1v1h-1zM556 168h1v1h-1zM566 168h1v1h-1zM577 168h1v1h-1zM587 168h1v1h-1zM597 168h1v1h-1zM607 168h1v1h-1zM618 168h1v1h-1zM628 168h1v1h-1zM638 168h1v1h-1zM648 168h1v1h-1zM659 168h1v1h-1zM669 168h1v1h-1zM679 168h1v1h-1zM689 168h1v1h-1zM700 168h1v1h-1zM710 168h1v1h-1zM720 168h1v1h-1zM730 168h1v1h-1zM741 168h1v1h-1zM751 168h1v1h-1zM761 168h1v1h-1zM771 168h1v1h-1zM782 168h1v1h-1zM792 168h1v1h-1zM802 168h1v1h-1zM812 168h1v1h-1zM823 168h1v1h-1zM833 168h1v1h-1zM843 168h1v1h-1zM853 168h1v1h-1zM864 168h1v1h-1zM874 168h1v1h-1zM884 168h1v1h-1zM894 168h1v1h-1zM905 168h1v1h-1zM915 168h1v1h-1zM925 168h1v1h-1zM935 168h1v1h-1zM946 168h1v1h-1zM956 168h1v1h-1zM966 168h1v1h-1zM976 168h1v1h-1zM987 168h1v1h-1zM997 168h1v1h-1zM1007 168h1v1h-1zM1017 168h1v1h-1zM1028 168h1v1h-1zM1038 168h1v1h-1zM1048 168h1v1h-1zM1058 168h1v1h-1zM1069 168h1v1h-1zM1079 168h1v1h-1zM1089 168h1v1h-1zM1099 168h1v1h-1zM1110 168h1v1h-1zM1120 168h1v1h-1zM1130 168h1v1h-1zM95 158h1v1h-1zM105 158h1v1h-1zM115 158h1v1h-1zM126 158h1v1h-1zM136 158h1v1h-1zM146 158h1v1h-1zM156 158h1v1h-1zM167 158h1v1h-1zM177 158h1v1h-1zM187 158h1v1h-1zM197 158h1v1h-1zM208 158h1v1h-1zM218 158h1v1h-1zM228 158h1v1h-1zM238 158h1v1h-1zM249 158h1v1h-1zM259 158h1v1h-1zM269 158h1v1h-1zM279 158h1v1h-1zM290 158h1v1h-1zM300 158h1v1h-1zM310 158h1v1h-1zM320 158h1v1h-1zM331 158h1v1h-1zM341 158h1v1h-1zM351 158h1v1h-1zM361 158h1v1h-1zM372 158h1v1h-1zM382 158h1v1h-1zM392 158h1v1h-1zM402 158h1v1h-1zM413 158h1v1h-1zM423 158h1v1h-1zM433 158h1v1h-1zM443 158h1v1h-1zM454 158h1v1h-1zM464 158h1v1h-1zM474 158h1v1h-1zM484 158h1v1h-1zM495 158h1v1h-1zM505 158h1v1h-1zM515 158h1v1h-1zM525 158h1v1h-1zM536 158h1v1h-1zM546 158h1v1h-1zM556 158h1v1h-1zM566 158h1v1h-1zM577 158h1v1h-1zM587 158h1v1h-1zM597 158h1v1h-1zM607 158h1v1h-1zM618 158h1v1h-1zM628 158h1v1h-1zM638 158h1v1h-1zM648 158h1v1h-1zM659 158h1v1h-1zM669 158h1v1h-1zM679 158h1v1h-1zM689 158h1v1h-1zM700 158h1v1h-1zM710 158h1v1h-1zM720 158h1v1h-1zM730 158h1v1h-1zM741 158h1v1h-1zM751 158h1v1h-1zM761 158h1v1h-1zM771 158h1v1h-1zM782 158h1v1h-1zM792 158h1v1h-1zM802 158h1v1h-1zM812 158h1v1h-1zM823 158h1v1h-1zM833 158h1v1h-1zM843 158h1v1h-1zM853 158h1v1h-1zM864 158h1v1h-1zM874 158h1v1h-1zM884 158h1v1h-1zM894 158h1v1h-1zM905 158h1v1h-1zM915 158h1v1h-1zM925 158h1v1h-1zM935 158h1v1h-1zM946 158h1v1h-1zM956 158h1v1h-1zM966 158h1v1h-1zM976 158h1v1h-1zM987 158h1v1h-1zM997 158h1v1h-1zM1007 158h1v1h-1zM1017 158h1v1h-1zM1028 158h1v1h-1zM1038 158h1v1h-1zM1048 158h1v1h-1zM1058 158h1v1h-1zM1069 158h1v1h-1zM1079 158h1v1h-1zM1089 158h1v1h-1zM1099 158h1v1h-1zM1110 158h1v1h-1zM1120 158h1v1h-1zM1130 158h1v1h-1z" fill="#3e3e3e"/><rect x="146.2" y="270.75" width="922.5" height="358.75" rx="19" stroke="#fff" stroke-width="2.6" fill="none"/><rect x="197.2" y="327.2" width="195.6" height="71.3" rx="35.65" stroke="#b0b0b0" stroke-width="1.3" fill="none" stroke-dasharray="9.3 3 1 2.7" stroke-dashoffset="6.85"/><circle cx="233.2" cy="363.0" r="7.6" stroke="#fff" stroke-width="2.6" fill="none"/><circle cx="356.3" cy="363.0" r="7.6" stroke="#fff" stroke-width="2.6" fill="none"/><path d="M256.5 337.5L333.5 337.5Q346 337.5 344.3 349.88L340.36 378.69Q339 388.6 329 388.6L261 388.6Q251 388.6 249.64 378.69L245.7 349.88Q244 337.5 256.5 337.5Z" stroke="#fff" stroke-width="2.6" fill="none"/><path d="M186.9 363H403.1" stroke="#dc0000" stroke-width="2" fill="none" stroke-dasharray="16.8 7.2 1.6 6.6" stroke-dashoffset="13"/><path d="M295 311.1V414.6" stroke="#dc0000" stroke-width="2" fill="none" stroke-dasharray="16.8 7.2 1.6 6.6" stroke-dashoffset="5.3"/><circle cx="469.1" cy="362.8" r="38.3" stroke="#fff" stroke-width="2.6" fill="none"/><path d="M417 362.8H526.2" stroke="#dc0000" stroke-width="2" fill="none" stroke-dasharray="16.8 7.2 1.6 6.6" stroke-dashoffset="2.1"/><path d="M469.1 311.3V414.9" stroke="#dc0000" stroke-width="2" fill="none" stroke-dasharray="16.8 7.2 1.6 6.6" stroke-dashoffset="5.6"/><circle cx="576.6" cy="362.8" r="17.8" stroke="#fff" stroke-width="2.6" fill="none"/><path d="M545.1 362.8H608.1" stroke="#dc0000" stroke-width="2" fill="none" stroke-dasharray="16.8 7.2 1.6 6.6" stroke-dashoffset="9.1"/><path d="M576.6 331.6V394.6" stroke="#dc0000" stroke-width="2" fill="none" stroke-dasharray="16.8 7.2 1.6 6.6" stroke-dashoffset="9.8"/><rect x="196.5" y="472.4" width="351.2" height="108.8" rx="54.4" stroke="#b0b0b0" stroke-width="1.3" fill="none" stroke-dasharray="9.3 3 1 2.7" stroke-dashoffset="3.9"/><circle cx="234.2" cy="527.1" r="16" stroke="#fff" stroke-width="2.6" fill="none"/><circle cx="509.2" cy="527.1" r="16" stroke="#fff" stroke-width="2.6" fill="none"/><path d="M288.1 493.7H455.6V543.7H439.2L425.5 559.9H317.6L304.5 543.7H288.1Z" stroke="#fff" stroke-width="2.6" fill="none"/><path d="M176.8 527.1H566.8" stroke="#dc0000" stroke-width="2" fill="none" stroke-dasharray="16.8 7.2 1.6 6.6" stroke-dashoffset="5.8"/><path d="M371.7 454.9V599" stroke="#dc0000" stroke-width="2" fill="none" stroke-dasharray="16.8 7.2 1.6 6.6" stroke-dashoffset="1.1"/><g stroke="#fff" stroke-width="2.6" fill="none" stroke-width="2.4"><circle cx="668.95" cy="332.25" r="7"/><circle cx="699.7" cy="332.25" r="7"/><circle cx="730.45" cy="332.25" r="7"/><circle cx="761.2" cy="332.25" r="7"/><circle cx="791.95" cy="332.25" r="7"/><circle cx="822.7" cy="332.25" r="7"/><circle cx="853.45" cy="332.25" r="7"/><circle cx="884.2" cy="332.25" r="7"/><circle cx="914.95" cy="332.25" r="7"/><circle cx="945.7" cy="332.25" r="7"/><circle cx="976.45" cy="332.25" r="7"/><circle cx="1007.2" cy="332.25" r="7"/><circle cx="684.33" cy="352.75" r="7"/><circle cx="715.08" cy="352.75" r="7"/><circle cx="745.83" cy="352.75" r="7"/><circle cx="776.58" cy="352.75" r="7"/><circle cx="807.33" cy="352.75" r="7"/><circle cx="838.08" cy="352.75" r="7"/><circle cx="868.83" cy="352.75" r="7"/><circle cx="899.58" cy="352.75" r="7"/><circle cx="930.33" cy="352.75" r="7"/><circle cx="961.08" cy="352.75" r="7"/><circle cx="991.83" cy="352.75" r="7"/><circle cx="668.95" cy="373.25" r="7"/><circle cx="699.7" cy="373.25" r="7"/><circle cx="730.45" cy="373.25" r="7"/><circle cx="761.2" cy="373.25" r="7"/><circle cx="791.95" cy="373.25" r="7"/><circle cx="822.7" cy="373.25" r="7"/><circle cx="853.45" cy="373.25" r="7"/><circle cx="884.2" cy="373.25" r="7"/><circle cx="914.95" cy="373.25" r="7"/><circle cx="945.7" cy="373.25" r="7"/><circle cx="976.45" cy="373.25" r="7"/><circle cx="1007.2" cy="373.25" r="7"/><circle cx="684.33" cy="393.75" r="7"/><circle cx="715.08" cy="393.75" r="7"/><circle cx="745.83" cy="393.75" r="7"/><circle cx="776.58" cy="393.75" r="7"/><circle cx="807.33" cy="393.75" r="7"/><circle cx="838.08" cy="393.75" r="7"/><circle cx="868.83" cy="393.75" r="7"/><circle cx="899.58" cy="393.75" r="7"/><circle cx="930.33" cy="393.75" r="7"/><circle cx="961.08" cy="393.75" r="7"/><circle cx="991.83" cy="393.75" r="7"/><circle cx="668.95" cy="414.25" r="7"/><circle cx="699.7" cy="414.25" r="7"/><circle cx="730.45" cy="414.25" r="7"/><circle cx="761.2" cy="414.25" r="7"/><circle cx="791.95" cy="414.25" r="7"/><circle cx="822.7" cy="414.25" r="7"/><circle cx="853.45" cy="414.25" r="7"/><circle cx="884.2" cy="414.25" r="7"/><circle cx="914.95" cy="414.25" r="7"/><circle cx="945.7" cy="414.25" r="7"/><circle cx="976.45" cy="414.25" r="7"/><circle cx="1007.2" cy="414.25" r="7"/><circle cx="684.33" cy="434.75" r="7"/><circle cx="715.08" cy="434.75" r="7"/><circle cx="745.83" cy="434.75" r="7"/><circle cx="776.58" cy="434.75" r="7"/><circle cx="807.33" cy="434.75" r="7"/><circle cx="838.08" cy="434.75" r="7"/><circle cx="868.83" cy="434.75" r="7"/><circle cx="899.58" cy="434.75" r="7"/><circle cx="930.33" cy="434.75" r="7"/><circle cx="961.08" cy="434.75" r="7"/><circle cx="991.83" cy="434.75" r="7"/><circle cx="668.95" cy="455.25" r="7"/><circle cx="699.7" cy="455.25" r="7"/><circle cx="730.45" cy="455.25" r="7"/><circle cx="761.2" cy="455.25" r="7"/><circle cx="791.95" cy="455.25" r="7"/><circle cx="822.7" cy="455.25" r="7"/><circle cx="684.33" cy="475.75" r="7"/><circle cx="715.08" cy="475.75" r="7"/><circle cx="745.83" cy="475.75" r="7"/><circle cx="776.58" cy="475.75" r="7"/><circle cx="807.33" cy="475.75" r="7"/><circle cx="668.95" cy="496.25" r="7"/><circle cx="699.7" cy="496.25" r="7"/><circle cx="730.45" cy="496.25" r="7"/><circle cx="761.2" cy="496.25" r="7"/><circle cx="791.95" cy="496.25" r="7"/><circle cx="822.7" cy="496.25" r="7"/><circle cx="684.33" cy="516.75" r="7"/><circle cx="715.08" cy="516.75" r="7"/><circle cx="745.83" cy="516.75" r="7"/><circle cx="776.58" cy="516.75" r="7"/><circle cx="807.33" cy="516.75" r="7"/><circle cx="668.95" cy="537.25" r="7"/><circle cx="699.7" cy="537.25" r="7"/><circle cx="730.45" cy="537.25" r="7"/><circle cx="761.2" cy="537.25" r="7"/><circle cx="791.95" cy="537.25" r="7"/><circle cx="822.7" cy="537.25" r="7"/><circle cx="684.33" cy="557.75" r="7"/><circle cx="715.08" cy="557.75" r="7"/><circle cx="745.83" cy="557.75" r="7"/><circle cx="776.58" cy="557.75" r="7"/><circle cx="807.33" cy="557.75" r="7"/><circle cx="668.95" cy="578.25" r="7"/><circle cx="699.7" cy="578.25" r="7"/><circle cx="730.45" cy="578.25" r="7"/><circle cx="761.2" cy="578.25" r="7"/><circle cx="791.95" cy="578.25" r="7"/><circle cx="822.7" cy="578.25" r="7"/></g><rect x="858.5" y="465.6" width="159.3" height="112" rx="20" stroke="#fff" stroke-width="2.6" fill="none"/><path d="M845.1 521.8H1031.2" stroke="#dc0000" stroke-width="2" fill="none" stroke-dasharray="16.8 7.2 1.6 6.6" stroke-dashoffset="12.7"/><path d="M938.1 445V592" stroke="#dc0000" stroke-width="2" fill="none" stroke-dasharray="16.8 7.2 1.6 6.6" stroke-dashoffset="15.4"/><g stroke="#a00000" stroke-width="1" fill="none"><circle cx="146.4" cy="629.6" r="5"/><path d="M126 629.6H166.5M146.4 608.9V649.7"/></g></svg><div class="a" style="left:1138px;top:131px;width:15px;height:617px;background:#f7f7f7;border-right:2px solid #d9d9d9"></div><div class="a" style="left:1138px;top:131px;width:15px;height:24px;background:#ececec"></div><div class="a" style="left:1143px;top:298px;width:8px;height:282px;border-radius:4px;background:#808080"></div><div class="a" style="left:95px;top:732px;width:1058px;height:16px;background:#f7f7f7"></div><div class="a" style="left:301px;top:736px;width:603px;height:9px;border-radius:4.5px;background:#808080"></div><div class="a" style="left:1100px;top:732px;width:53px;height:16px;background:#ebebeb"></div><div class="a" style="left:1118px;top:733px;font-size:12.4px;color:#1a1a1a;letter-spacing:-0.2px">1 &lt; 10</div><div class="a" style="left:72px;top:748px;width:1081px;height:2px;background:#c8c8c8"></div><div class="a" style="left:72px;top:750px;width:1081px;height:20px;background:#fff;border-bottom:1px solid #bdbdbd"></div><div class="a" style="left:1144px;top:750px;width:6px;height:18px;border-radius:3px;background:#808080"></div><div class="a" style="left:77px;top:751px;font-size:13.3px;color:#1414d4;white-space:nowrap"><i>Commande:</i> selectionmenu</div><div class="a" style="left:72px;top:771px;width:1081px;height:27px;background:#ececec"></div><div class="a" style="left:73px;top:778px;font-size:13.2px;color:#111">Commande :</div><div class="a" style="left:153px;top:776px;width:975px;height:18px;background:#fff"></div><div class="a" style="left:1128px;top:772px;width:25px;height:25px;background:#f0f0f0;border:1px solid #c0c0c0"></div><div class="a" style="left:1133px;top:779px;width:14px;height:10px;border:1px solid #555;border-top:3px solid #111;background:#fff"></div><div class="a" style="left:1154px;top:108px;width:301px;height:690px;background:#fff;border-left:1px solid #c8c8c8;border-right:1px solid #c8c8c8"></div><div class="a" style="left:1155px;top:108px;width:299px;height:23px;background:linear-gradient(#ededed,#dedede);border-bottom:1px solid #c4c4c4"></div><div class="a" style="left:1277px;top:112.5px;font-size:12px;color:#2a2a2a">Liste des calques</div><div class="a" style="left:1155px;top:131px;width:299px;height:25px;background:#a8a8a8"></div><div class="a" style="left:1155.5px;top:132px;width:58.5px;height:22.5px;background:linear-gradient(#f6f6f6,#e6e6e6)"></div><div class="a" style="left:1216px;top:132px;width:58.0px;height:22.5px;background:linear-gradient(#f6f6f6,#e6e6e6)"></div><div class="a" style="left:1276px;top:132px;width:58.0px;height:22.5px;background:linear-gradient(#f6f6f6,#e6e6e6)"></div><div class="a" style="left:1336px;top:132px;width:58.0px;height:22.5px;background:linear-gradient(#f6f6f6,#e6e6e6)"></div><div class="a" style="left:1396px;top:132px;width:57.5px;height:22.5px;background:linear-gradient(#f6f6f6,#e6e6e6)"></div><div class="a" style="left:1155px;top:155px;width:299px;height:2px;background:#b4b4b4"></div><svg class="a" style="left:1150px;top:105px" width="310" height="140" viewBox="1150 105 310 140"><circle cx="1164" cy="118.4" r="6.8" fill="#6e6e6e"/><path d="M1161 115.4L1167 121.4M1167 115.4L1161 121.4" stroke="#fff" stroke-width="1.7"/><circle cx="1182" cy="118.4" r="6.8" fill="#6e6e6e"/><rect x="1178" y="117" width="5" height="4" fill="none" stroke="#fff" stroke-width="1.1"/><path d="M1180 116V114.8H1185.5V119H1183.5" fill="none" stroke="#fff" stroke-width="1.1"/><g transform="translate(1185 142.5) scale(1.0)"><path d="M-8 0.5Q-4 -6 0 -6Q4.5 -6 8 0.5Q4 6 0 6Q-4.5 6 -8 0.5Z" fill="#000"/><path d="M-5 0.8Q-2.5 -2.8 0.5 -3Q3.5 -2.8 5.5 0.8Q3 4 0.5 4Q-2.5 4 -5 0.8Z" fill="#fff"/><circle cx="0.5" cy="0.6" r="2.6" fill="#000"/></g><g transform="translate(1244.5 142.5) scale(1.0)"><path d="M-8 0.5Q-4 -6 0 -6Q4.5 -6 8 0.5Q4 6 0 6Q-4.5 6 -8 0.5Z" fill="#aaa"/><path d="M-5 0.8Q-2.5 -2.8 0.5 -3Q3.5 -2.8 5.5 0.8Q3 4 0.5 4Q-2.5 4 -5 0.8Z" fill="#fff"/><circle cx="0.5" cy="0.6" r="2.6" fill="#aaa"/></g><path d="M1304.8 137V149M1298.8 143H1310.8" stroke="#e00000" stroke-width="2.8"/><path d="M1359 142.8H1371" stroke="#e00000" stroke-width="2.8"/><g transform="translate(1417.5 136) scale(0.95)"><path d="M0 14L2 9.5L11.5 0.5Q13 -0.5 14 0.5Q15 1.5 14 3L4.5 12Z" fill="#f0b020" stroke="#8a5a10" stroke-width="0.7"/><path d="M12 0.3L14.5 2.8" stroke="#e03020" stroke-width="1.8"/><path d="M0 14L2 9.5L4.5 12Z" fill="#444"/></g><rect x="1161.5" y="162.5" width="15.5" height="9" fill="#000" stroke="#000" stroke-width="1"/><g transform="translate(1422.7 167) scale(0.92)"><path d="M-8 0.5Q-4 -6 0 -6Q4.5 -6 8 0.5Q4 6 0 6Q-4.5 6 -8 0.5Z" fill="#000"/><path d="M-5 0.8Q-2.5 -2.8 0.5 -3Q3.5 -2.8 5.5 0.8Q3 4 0.5 4Q-2.5 4 -5 0.8Z" fill="#fff"/><circle cx="0.5" cy="0.6" r="2.6" fill="#000"/></g><path d="M1441 166V163.5Q1441 160 1444.5 160Q1448 160 1448 163.5V166" fill="none" stroke="#c6c6c6" stroke-width="1.6"/><rect x="1439" y="166" width="11" height="8.5" rx="1" fill="#c6c6c6"/><rect x="1161.5" y="182.5" width="15.5" height="9" fill="#f00" stroke="#000" stroke-width="1"/><g transform="translate(1422.7 187) scale(0.92)"><path d="M-8 0.5Q-4 -6 0 -6Q4.5 -6 8 0.5Q4 6 0 6Q-4.5 6 -8 0.5Z" fill="#000"/><path d="M-5 0.8Q-2.5 -2.8 0.5 -3Q3.5 -2.8 5.5 0.8Q3 4 0.5 4Q-2.5 4 -5 0.8Z" fill="#fff"/><circle cx="0.5" cy="0.6" r="2.6" fill="#000"/></g><path d="M1441 186V183.5Q1441 180 1444.5 180Q1448 180 1448 183.5V186" fill="none" stroke="#c6c6c6" stroke-width="1.6"/><rect x="1439" y="186" width="11" height="8.5" rx="1" fill="#c6c6c6"/><rect x="1161.5" y="202.5" width="15.5" height="9" fill="#a0a0a4" stroke="#000" stroke-width="1"/><g transform="translate(1422.7 207) scale(0.92)"><path d="M-8 0.5Q-4 -6 0 -6Q4.5 -6 8 0.5Q4 6 0 6Q-4.5 6 -8 0.5Z" fill="#000"/><path d="M-5 0.8Q-2.5 -2.8 0.5 -3Q3.5 -2.8 5.5 0.8Q3 4 0.5 4Q-2.5 4 -5 0.8Z" fill="#fff"/><circle cx="0.5" cy="0.6" r="2.6" fill="#000"/></g><path d="M1441 206V203.5Q1441 200 1444.5 200Q1448 200 1448 203.5V206" fill="none" stroke="#c6c6c6" stroke-width="1.6"/><rect x="1439" y="206" width="11" height="8.5" rx="1" fill="#c6c6c6"/><rect x="1161.5" y="222.5" width="15.5" height="9" fill="#000" stroke="#000" stroke-width="1"/><g transform="translate(1422.7 227) scale(0.92)"><path d="M-8 0.5Q-4 -6 0 -6Q4.5 -6 8 0.5Q4 6 0 6Q-4.5 6 -8 0.5Z" fill="#000"/><path d="M-5 0.8Q-2.5 -2.8 0.5 -3Q3.5 -2.8 5.5 0.8Q3 4 0.5 4Q-2.5 4 -5 0.8Z" fill="#fff"/><circle cx="0.5" cy="0.6" r="2.6" fill="#000"/></g><path d="M1441 226V223.5Q1441 220 1444.5 220Q1448 220 1448 223.5V226" fill="none" stroke="#c6c6c6" stroke-width="1.6"/><rect x="1439" y="226" width="11" height="8.5" rx="1" fill="#c6c6c6"/><g transform="translate(1394.5 200.5) scale(0.9)"><path d="M0 14L2 9.5L11.5 0.5Q13 -0.5 14 0.5Q15 1.5 14 3L4.5 12Z" fill="#f0b020" stroke="#8a5a10" stroke-width="0.7"/><path d="M12 0.3L14.5 2.8" stroke="#e03020" stroke-width="1.8"/><path d="M0 14L2 9.5L4.5 12Z" fill="#444"/></g></svg><div class="a" style="left:1183px;top:159px;font-size:13.5px;color:#111">0</div><div class="a" style="left:1183px;top:179px;font-size:13.5px;color:#111">Centre</div><div class="a" style="left:1183px;top:199px;font-size:13.5px;color:#111">Retour</div><div class="a" style="left:1183px;top:219px;font-size:13.5px;color:#111">Ventilation</div><div class="a" style="left:1455px;top:108px;width:45px;height:690px;background:linear-gradient(90deg,#eeeeee,#c9c9c9)"></div><svg class="a" style="left:1450px;top:105px" width="50" height="400" viewBox="1450 105 50 400"><path d="M1463 117H1490M1460 262H1500M1460 409.5H1500" stroke="#8a8a8a" stroke-width="1.2" stroke-dasharray="1.2 4"/><rect x="1456.5" y="120.8" width="42" height="41.8" rx="6" fill="#b5b5b5"/><rect x="1456.5" y="417.5" width="42" height="42.5" rx="6" fill="#b5b5b5"/><rect x="1463.5" y="127.5" width="27" height="27" fill="#fff" stroke="#222" stroke-width="1"/><rect x="1463" y="127" width="28" height="5" fill="#000"/><rect x="1464.5" y="128" width="3" height="3" fill="#fff"/><path d="M1468 143L1473 140V150L1468 153Z" fill="#aaa" stroke="#333" stroke-width="0.8"/><path d="M1471 142L1483 137V147L1471 152Z" fill="#fff" stroke="#333" stroke-width="0.8"/><path d="M1475 149L1480 141V147Z" fill="none" stroke="#f22" stroke-width="0.8"/><rect x="1463.5" y="174.5" width="27" height="27" fill="#fff" stroke="#222" stroke-width="1"/><rect x="1463" y="174" width="28" height="5" fill="#000"/><rect x="1464.5" y="175" width="3" height="3" fill="#fff"/><rect x="1468" y="183" width="11" height="9" fill="#f8eec0" stroke="#555" stroke-width="0.8"/><circle cx="1478" cy="193" r="5" fill="#f4e8b0" stroke="#555" stroke-width="0.8"/><rect x="1463.5" y="220.5" width="27" height="27" fill="#fff" stroke="#222" stroke-width="1"/><rect x="1463" y="220" width="28" height="5" fill="#000"/><rect x="1464.5" y="221" width="3" height="3" fill="#fff"/><rect x="1468.5" y="229" width="18" height="13" rx="2.5" fill="#f4f4f4" stroke="#c8d4ea" stroke-width="0.9"/><rect x="1463.5" y="276.5" width="27" height="27" fill="#fff" stroke="#222" stroke-width="1"/><rect x="1463" y="276" width="28" height="5" fill="#000"/><rect x="1464.5" y="277" width="3" height="3" fill="#fff"/><path d="M1467 285h3.5v3h-3.5zM1467 290h3.5v3h-3.5zM1467 295h3.5v3h-3.5z" fill="#000"/><path d="M1473 285.5h13v2.5h-13zM1473 290.5h13v2.5h-13zM1473 295.5h13v2.5h-13z" fill="none" stroke="#333" stroke-width="0.7"/><rect x="1463.5" y="322.0" width="27" height="27" fill="#fff" stroke="#222" stroke-width="1"/><rect x="1463" y="321.5" width="28" height="5" fill="#000"/><rect x="1464.5" y="322.5" width="3" height="3" fill="#fff"/><path d="M1467 331H1487L1479 340V346L1475 348V340Z" fill="#ccc" stroke="#333" stroke-width="0.8"/><rect x="1463.5" y="368.5" width="27" height="27" fill="#fff" stroke="#222" stroke-width="1"/><rect x="1463" y="368" width="28" height="5" fill="#000"/><rect x="1464.5" y="369" width="3" height="3" fill="#fff"/><path d="M1469 376L1474 380H1483V387H1474L1469 391Z" fill="#eee" stroke="#333" stroke-width="0.8"/><path d="M1466 383.5H1488" stroke="#f66" stroke-width="0.8" stroke-dasharray="2 1"/><rect x="1463.5" y="424.5" width="27" height="27" fill="#fff" stroke="#222" stroke-width="1"/><rect x="1463" y="424" width="28" height="5" fill="#000"/><rect x="1464.5" y="425" width="3" height="3" fill="#fff"/><path d="M1466 432.5H1476M1466 435.5H1474M1466 438.5H1477M1466 441.5H1477" stroke="#888" stroke-width="0.7"/><path d="M1464 447.5H1490" stroke="#444" stroke-width="0.7"/><path d="M1466 449.5H1468M1472 449.5H1488" stroke="#444" stroke-width="0.9"/><rect x="1463.5" y="471.5" width="27" height="27" fill="#fff" stroke="#222" stroke-width="1"/><rect x="1463" y="471" width="28" height="5" fill="#000"/><rect x="1464.5" y="472" width="3" height="3" fill="#fff"/><rect x="1470.5" y="480.5" width="13" height="14" rx="0.8" fill="#c08428"/><rect x="1472" y="482" width="10" height="11" fill="#f0f0f0"/><rect x="1474" y="479" width="6" height="2.5" rx="0.8" fill="#999"/><path d="M1479.5 493L1482 490.5V493Z" fill="#999"/></svg><div class="a" style="left:0;top:798px;width:1500px;height:46px;background:#dcdcdc"></div><div class="st" style="left:2px;top:808px">-1.878,20.3415</div><div class="st" style="left:2px;top:828px">@-1.878,20.3415</div><div class="a" style="left:253px;top:802px;width:1px;height:40px;background:#888"></div><div class="st" style="left:256px;top:808px">20.428&lt;95.27°</div><div class="st" style="left:256px;top:828px">@20.428&lt;95.27°</div><div class="a" style="left:506px;top:819px;width:7px;height:7px;border-radius:50%;background:#c4c4c4"></div><div class="st" style="left:532px;top:817px">Sélectionne une entité ou une région</div><svg class="a" style="left:715px;top:804px" width="22" height="34"><path d="M2.5 11Q2.5 2 11 2Q19.5 2 19.5 11V22.5Q19.5 31.5 11 31.5Q2.5 31.5 2.5 22.5Z" fill="#fff" stroke="#555" stroke-width="0.9"/><path d="M2.5 16.2Q11 13.8 19.5 16.2" stroke="#333" stroke-width="1.6" fill="none"/><path d="M11 2V15" stroke="#333" stroke-width="1"/><rect x="9.3" y="3.5" width="3.6" height="8.5" rx="1" fill="#fff" stroke="#333" stroke-width="0.9"/></svg><div class="a" style="left:940px;top:819px;width:7px;height:7px;border-radius:50%;background:#c4c4c4"></div><div class="st" style="left:949px;top:817px">Aucune des entités sélectionnées.</div><div class="a" style="left:1269px;top:819px;width:7px;height:7px;border-radius:50%;background:#c4c4c4"></div><svg class="a" style="left:0;top:200px" width="240" height="130" viewBox="0 200 240 130"><defs><radialGradient id="gring" cx="0.5" cy="0.5" r="0.5"><stop offset="0" stop-color="#fff" stop-opacity="0.1"/><stop offset="0.7" stop-color="#fff" stop-opacity="0.2"/><stop offset="0.8" stop-color="#dde6ee" stop-opacity="0.35"/><stop offset="0.86" stop-color="#8ea4b8" stop-opacity="0.55"/><stop offset="0.95" stop-color="#6e889e" stop-opacity="0.75"/><stop offset="1" stop-color="#8ea4b8" stop-opacity="0"/></radialGradient></defs><circle cx="60.8" cy="256.3" r="39" fill="url(#gring)"/><g stroke="#e05050" stroke-width="1.6" opacity="0.75"><path d="M36 234.3H71M36 268.6H71M36 234.3V268.6M70.5 234.3V268.6"/></g><g stroke="#e06060" stroke-width="1.4" opacity="0.35"><path d="M27 234.3H36M71 234.3H80M27 268.6H36M71 268.6H80M36 225V234M70.5 225V234M36 269V278M70.5 269V278"/></g><path d="M61 258.5V283L66.5 278L70.5 287.5L75 285.5L71 276.5L78.5 276Z" fill="#fff" stroke="#000" stroke-width="1.3" stroke-linejoin="round"/></svg><div class="a" style="left:48px;top:285.5px;width:166px;height:25.5px;border-radius:3px;background:linear-gradient(#f3f6fa,#dfe5ec);border:1px solid #c6ccd4;box-shadow:0 1px 2px rgba(0,0,0,0.15)"></div><div class="a" style="left:53px;top:290px;font-size:14px;color:#111;white-space:nowrap">Sélectionner un polygone</div></body></html>
